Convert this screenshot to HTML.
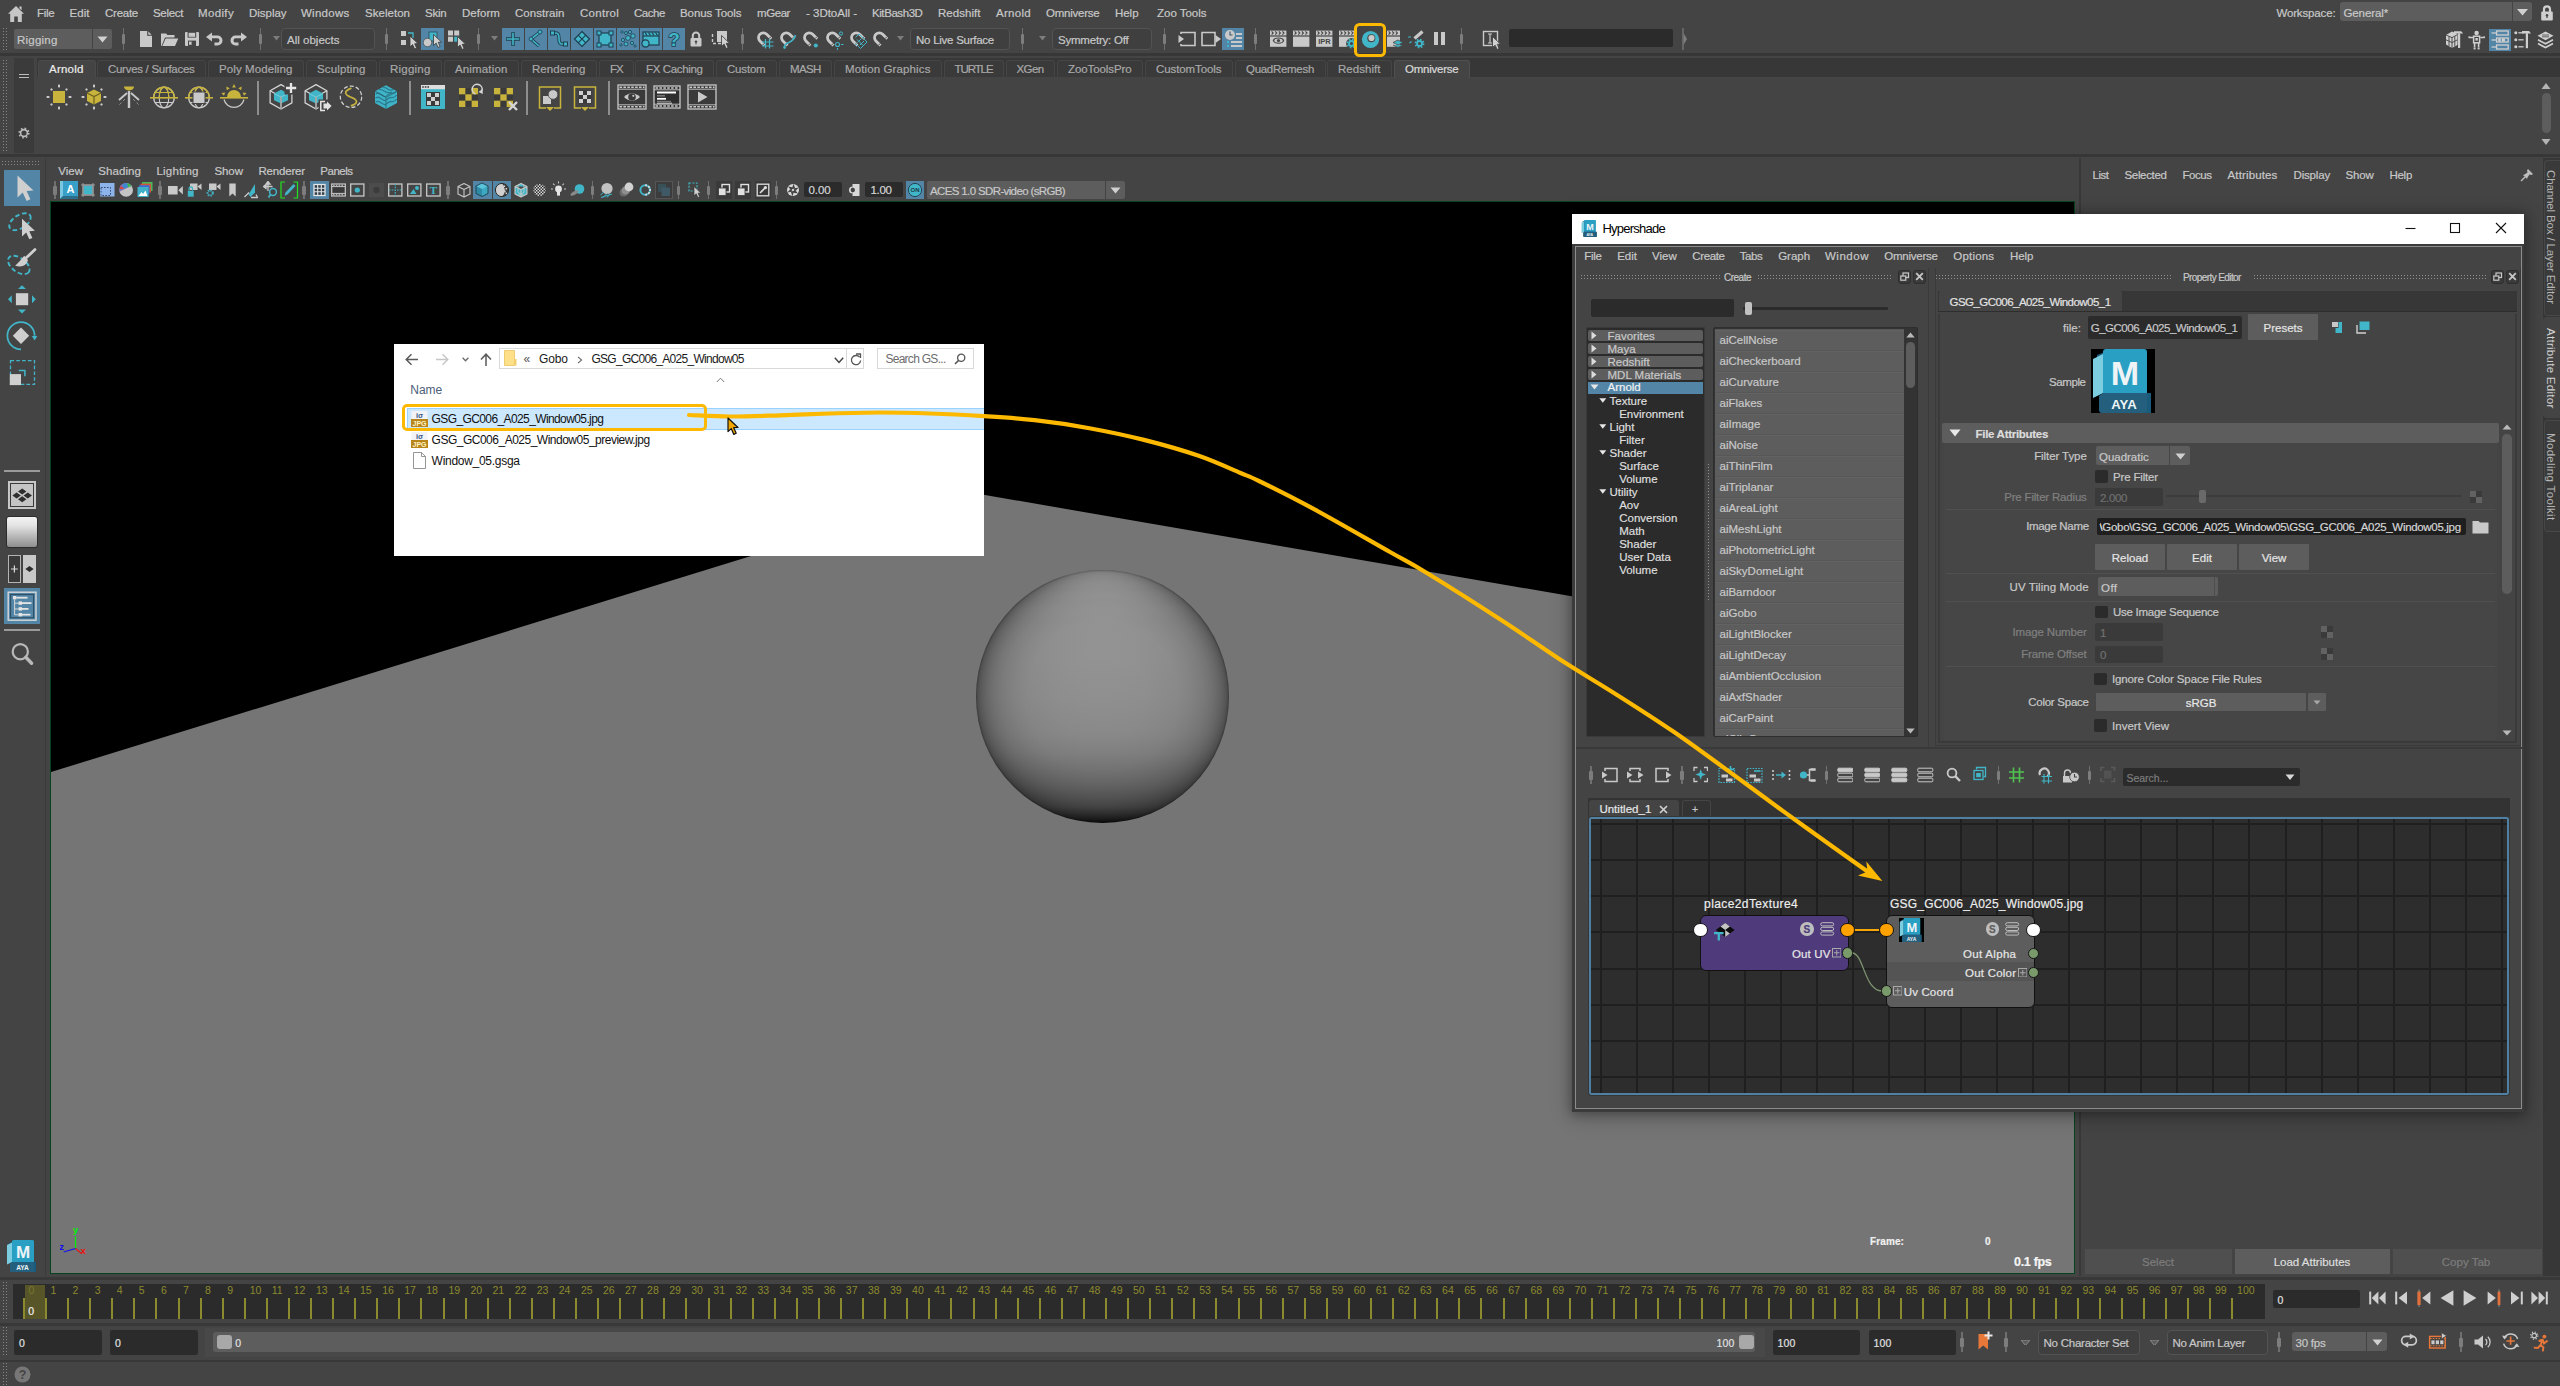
<!DOCTYPE html>
<html><head><meta charset="utf-8"><title>Maya</title>
<style>
html,body{margin:0;padding:0;}
body{width:2560px;height:1386px;overflow:hidden;background:#444444;position:relative;font-family:"Liberation Sans",sans-serif;}
div,svg{position:absolute;box-sizing:border-box;}
.t{white-space:nowrap;-webkit-text-stroke:0.2px currentColor;}
</style></head><body>
<svg style="left:7px;top:5.2px;" width="18" height="18" viewBox="0 0 18 18"><path d="M9 1 L1 8.8 H3.2 V17 H7.2 V11.5 H10.8 V17 H14.8 V8.8 H17 Z M12.4 1.6 h2.2 v3.6 l-2.2 -2z" fill="#c6c6c6"/></svg>
<div class="t" style="left:37px;top:3px;height:20px;line-height:20px;font-size:11.5px;color:#c8c8c8;letter-spacing:-0.258px;">File</div>
<div class="t" style="left:69.5px;top:3px;height:20px;line-height:20px;font-size:11.5px;color:#c8c8c8;letter-spacing:0.046px;">Edit</div>
<div class="t" style="left:105px;top:3px;height:20px;line-height:20px;font-size:11.5px;color:#c8c8c8;letter-spacing:-0.253px;">Create</div>
<div class="t" style="left:153px;top:3px;height:20px;line-height:20px;font-size:11.5px;color:#c8c8c8;letter-spacing:-0.327px;">Select</div>
<div class="t" style="left:198px;top:3px;height:20px;line-height:20px;font-size:11.5px;color:#c8c8c8;letter-spacing:0.355px;">Modify</div>
<div class="t" style="left:249px;top:3px;height:20px;line-height:20px;font-size:11.5px;color:#c8c8c8;letter-spacing:-0.029px;">Display</div>
<div class="t" style="left:301px;top:3px;height:20px;line-height:20px;font-size:11.5px;color:#c8c8c8;letter-spacing:0.264px;">Windows</div>
<div class="t" style="left:365px;top:3px;height:20px;line-height:20px;font-size:11.5px;color:#c8c8c8;letter-spacing:0.031px;">Skeleton</div>
<div class="t" style="left:425px;top:3px;height:20px;line-height:20px;font-size:11.5px;color:#c8c8c8;letter-spacing:-0.218px;">Skin</div>
<div class="t" style="left:462px;top:3px;height:20px;line-height:20px;font-size:11.5px;color:#c8c8c8;letter-spacing:0.050px;">Deform</div>
<div class="t" style="left:515px;top:3px;height:20px;line-height:20px;font-size:11.5px;color:#c8c8c8;letter-spacing:0.031px;">Constrain</div>
<div class="t" style="left:580px;top:3px;height:20px;line-height:20px;font-size:11.5px;color:#c8c8c8;letter-spacing:0.275px;">Control</div>
<div class="t" style="left:634px;top:3px;height:20px;line-height:20px;font-size:11.5px;color:#c8c8c8;letter-spacing:-0.448px;">Cache</div>
<div class="t" style="left:680px;top:3px;height:20px;line-height:20px;font-size:11.5px;color:#c8c8c8;letter-spacing:-0.086px;">Bonus Tools</div>
<div class="t" style="left:757px;top:3px;height:20px;line-height:20px;font-size:11.5px;color:#c8c8c8;letter-spacing:-0.429px;">mGear</div>
<div class="t" style="left:806px;top:3px;height:20px;line-height:20px;font-size:11.5px;color:#c8c8c8;letter-spacing:-0.011px;">- 3DtoAll -</div>
<div class="t" style="left:872px;top:3px;height:20px;line-height:20px;font-size:11.5px;color:#c8c8c8;letter-spacing:-0.426px;">KitBash3D</div>
<div class="t" style="left:938px;top:3px;height:20px;line-height:20px;font-size:11.5px;color:#c8c8c8;letter-spacing:0.039px;">Redshift</div>
<div class="t" style="left:996px;top:3px;height:20px;line-height:20px;font-size:11.5px;color:#c8c8c8;letter-spacing:0.293px;">Arnold</div>
<div class="t" style="left:1046px;top:3px;height:20px;line-height:20px;font-size:11.5px;color:#c8c8c8;letter-spacing:-0.233px;">Omniverse</div>
<div class="t" style="left:1115px;top:3px;height:20px;line-height:20px;font-size:11.5px;color:#c8c8c8;letter-spacing:-0.038px;">Help</div>
<div class="t" style="left:1157px;top:3px;height:20px;line-height:20px;font-size:11.5px;color:#c8c8c8;letter-spacing:-0.017px;">Zoo Tools</div>
<div class="t" style="left:2276.4px;top:2.5px;height:20px;line-height:20px;font-size:11.5px;color:#c8c8c8;letter-spacing:-0.140px;">Workspace:</div>
<div style="left:2340px;top:2px;width:171.5px;height:19px;background:#5d5d5d;border-radius:3px 0 0 3px;"></div>
<div style="left:2512.5px;top:2px;width:19.5px;height:19px;background:#5d5d5d;border-radius:0 3px 3px 0;"></div>
<div class="t" style="left:2343.5px;top:2.5px;height:20px;line-height:20px;font-size:11.5px;color:#c8c8c8;letter-spacing:-0.111px;">General*</div>
<svg style="left:2516px;top:7.5px;" width="13" height="9" viewBox="0 0 13 9"><path d="M1 1 H12 L6.5 7.5Z" fill="#d0d0d0"/></svg>
<svg style="left:2539.5px;top:3.5px;" width="14" height="18" viewBox="0 0 14 18"><path d="M4 8 V5.3 a3 3 0 0 1 6 0 V8" fill="none" stroke="#cfcfcf" stroke-width="2.2"/><rect x="1.2" y="7.6" width="11.6" height="9" rx="1" fill="#cfcfcf"/><circle cx="7" cy="11.2" r="1.2" fill="#444"/><rect x="6.4" y="11.4" width="1.2" height="2.6" fill="#444"/></svg>
<div style="left:3px;top:28px;width:5px;height:23px;background-image:linear-gradient(transparent 1px,#444 1px),linear-gradient(90deg,#868686 1px,transparent 1px);background-size:3px 3px;"></div>
<div style="left:14px;top:29px;width:78px;height:20px;background:#5d5d5d;border-radius:2px 0 0 2px;"></div>
<div style="left:93px;top:29px;width:19px;height:20px;background:#5d5d5d;border-radius:0 2px 2px 0;"></div>
<div class="t" style="left:17px;top:30px;height:20px;line-height:20px;font-size:11.5px;color:#c8c8c8;letter-spacing:0.215px;">Rigging</div>
<svg style="left:97px;top:36px;" width="11" height="7" viewBox="0 0 11 7"><path d="M0.5 0.5 H10.5 L5.5 6.5Z" fill="#d0d0d0"/></svg>
<div style="left:122.5px;top:28px;width:1.5px;height:22px;background:#6f6f6f;"></div>
<div style="left:121.5px;top:34px;width:3.5px;height:10px;background:#7d7d7d;border-radius:1px;"></div>
<svg style="left:139px;top:30px;" width="14" height="18" viewBox="0 0 14 18"><path d="M1 1 H8.5 L13 5.5 V17 H1Z" fill="#c9c9c9"/><path d="M8.5 1 V5.5 H13" fill="#444" stroke="#444" stroke-width="0.6"/><path d="M9.3 1.6 L12.4 4.7 H9.3Z" fill="#c9c9c9"/></svg>
<svg style="left:160px;top:31px;" width="19" height="16" viewBox="0 0 19 16"><path d="M1 15 V2.5 H6 L7.5 4 H14.5 V6.5 H5 L1.5 15Z" fill="#c9c9c9"/><path d="M5.6 7.5 H18.3 L15 15 H2.3Z" fill="#c9c9c9"/></svg>
<svg style="left:184px;top:31px;" width="16" height="16" viewBox="0 0 16 16"><path d="M1 2 a1 1 0 0 1 1-1 H14 a1 1 0 0 1 1 1 V14 a1 1 0 0 1 -1 1 H2 a1 1 0 0 1 -1-1Z" fill="#c9c9c9"/><rect x="3.6" y="1" width="8.6" height="5.6" fill="#444"/><rect x="4.6" y="1.8" width="6.6" height="4" fill="#c9c9c9"/><rect x="4" y="9.6" width="8" height="5.4" fill="#444"/><rect x="5" y="10.6" width="2.6" height="3.2" fill="#c9c9c9"/></svg>
<svg style="left:205px;top:32px;" width="19" height="15" viewBox="0 0 19 15"><path d="M1 5 L7 0.5 V3.5 H12.5 a5 5 0 0 1 0 10 H9.5 V10.6 H12.3 a2.2 2.2 0 0 0 0-4.4 H7 V9.5Z" fill="#c9c9c9"/></svg>
<svg style="left:229px;top:32px;" width="19" height="15" viewBox="0 0 19 15"><g transform="translate(19,0) scale(-1,1)"><path d="M1 5 L7 0.5 V3.5 H12.5 a5 5 0 0 1 0 10 H9.5 V10.6 H12.3 a2.2 2.2 0 0 0 0-4.4 H7 V9.5Z" fill="#c9c9c9"/></g></svg>
<div style="left:259.5px;top:28px;width:1.5px;height:22px;background:#6f6f6f;"></div>
<div style="left:258.5px;top:34px;width:3.5px;height:10px;background:#7d7d7d;border-radius:1px;"></div>
<svg style="left:273px;top:36px;" width="7" height="4.5" viewBox="0 0 7 4.5"><path d="M0 0 H7 L3.5 4.5Z" fill="#7c7c7c"/></svg>
<div style="left:281px;top:28px;width:94px;height:22px;background:#3f3f3f;border-radius:4px;border:1px solid #535353;"></div>
<div class="t" style="left:287px;top:30px;height:20px;line-height:20px;font-size:11.5px;color:#c8c8c8;letter-spacing:0.008px;">All objects</div>
<div style="left:385.5px;top:28px;width:1.5px;height:22px;background:#6f6f6f;"></div>
<div style="left:384.5px;top:34px;width:3.5px;height:10px;background:#7d7d7d;border-radius:1px;"></div>
<svg style="left:399px;top:29px;" width="22" height="22" viewBox="0 0 22 22"><rect x="2" y="2" width="5" height="5" fill="#c9c9c9"/><rect x="2" y="11" width="5" height="5" fill="#c9c9c9"/><path d="M9 4 H14 V9" fill="none" stroke="#41b6c8" stroke-width="1.3"/><path transform="translate(11,7) scale(1)" d="M0 0 L0 11 L2.6 8.6 L4.6 13 L6.6 12 L4.7 7.8 L8 7.6Z" fill="#d0d0d0" stroke="#3a3a3a" stroke-width="0.8"/></svg>
<div style="left:421px;top:28px;width:23px;height:22px;background:#5285a6;"></div>
<svg style="left:421px;top:28px;" width="23" height="22" viewBox="0 0 23 22"><rect x="8" y="4" width="8" height="9" fill="#41b6c8" stroke="#2b4c5e" stroke-width="0.8"/><circle cx="6.5" cy="14.5" r="4.2" fill="#c9c9c9" stroke="#3a3a3a" stroke-width="0.6"/><path transform="translate(12.5,6.5) scale(1)" d="M0 0 L0 11 L2.6 8.6 L4.6 13 L6.6 12 L4.7 7.8 L8 7.6Z" fill="#d0d0d0" stroke="#3a3a3a" stroke-width="0.8"/></svg>
<svg style="left:446px;top:29px;" width="22" height="22" viewBox="0 0 22 22"><rect x="2" y="1.5" width="5" height="5" fill="#c9c9c9"/><rect x="8.2" y="1.5" width="5" height="5" fill="#c9c9c9"/><rect x="2" y="7.7" width="5" height="5" fill="#c9c9c9"/><rect x="8.2" y="7.7" width="5" height="5" fill="#41b6c8"/><path transform="translate(11.5,7.5) scale(1)" d="M0 0 L0 11 L2.6 8.6 L4.6 13 L6.6 12 L4.7 7.8 L8 7.6Z" fill="#d0d0d0" stroke="#3a3a3a" stroke-width="0.8"/></svg>
<div style="left:477.5px;top:28px;width:1.5px;height:22px;background:#6f6f6f;"></div>
<div style="left:476.5px;top:34px;width:3.5px;height:10px;background:#7d7d7d;border-radius:1px;"></div>
<svg style="left:491px;top:36px;" width="7" height="4.5" viewBox="0 0 7 4.5"><path d="M0 0 H7 L3.5 4.5Z" fill="#7c7c7c"/></svg>
<div style="left:502px;top:28px;width:22px;height:22px;background:#5285a6;"></div>
<div style="left:525px;top:28px;width:22px;height:22px;background:#5285a6;"></div>
<div style="left:548px;top:28px;width:22px;height:22px;background:#5285a6;"></div>
<div style="left:571px;top:28px;width:22px;height:22px;background:#5285a6;"></div>
<div style="left:594px;top:28px;width:22px;height:22px;background:#5285a6;"></div>
<div style="left:617px;top:28px;width:22px;height:22px;background:#5285a6;"></div>
<div style="left:640px;top:28px;width:22px;height:22px;background:#5285a6;"></div>
<div style="left:663px;top:28px;width:22px;height:22px;background:#5285a6;"></div>
<svg style="left:502px;top:28px;" width="22" height="22" viewBox="0 0 22 22"><path d="M11 4 V18 M4 11 H18" stroke="#1f3f50" stroke-width="3.4"/><path d="M11 4.7 V17.3 M4.7 11 H17.3" stroke="#41b6c8" stroke-width="1.6"/></svg>
<svg style="left:525px;top:28px;" width="22" height="22" viewBox="0 0 22 22"><path d="M15 4 L6 11 L14 18" fill="none" stroke="#1f3f50" stroke-width="3.2" stroke-linejoin="round"/><path d="M15 4 L6 11 L14 18" fill="none" stroke="#41b6c8" stroke-width="1.6"/><circle cx="15" cy="4" r="2" fill="#41b6c8" stroke="#1f3f50" stroke-width="0.8"/><circle cx="6" cy="11" r="2" fill="#41b6c8" stroke="#1f3f50" stroke-width="0.8"/></svg>
<svg style="left:548px;top:28px;" width="22" height="22" viewBox="0 0 22 22"><path d="M4 5 H8 C14 5 8 16 14 16 H18" fill="none" stroke="#1f3f50" stroke-width="3.4"/><path d="M4 5 H8 C14 5 8 16 14 16 H18" fill="none" stroke="#41b6c8" stroke-width="1.6"/><rect x="2.5" y="3" width="4" height="4" fill="#41b6c8" stroke="#1f3f50"/><rect x="15.5" y="14" width="4" height="4" fill="#41b6c8" stroke="#1f3f50"/></svg>
<svg style="left:571px;top:28px;" width="22" height="22" viewBox="0 0 22 22"><path d="M11 3.5 L18.5 11 L11 18.5 L3.5 11Z" fill="#41b6c8" stroke="#1f3f50" stroke-width="1.2"/><path d="M7.2 7.2 L14.8 14.8 M14.8 7.2 L7.2 14.8" stroke="#1f3f50" stroke-width="1.2"/></svg>
<svg style="left:594px;top:28px;" width="22" height="22" viewBox="0 0 22 22"><rect x="5" y="5" width="12" height="12" fill="#41b6c8" stroke="#1f3f50" stroke-width="1.2"/><rect x="3" y="3" width="4" height="4" fill="#41b6c8" stroke="#1f3f50" stroke-width="1"/><rect x="15" y="3" width="4" height="4" fill="#41b6c8" stroke="#1f3f50" stroke-width="1"/><rect x="3" y="15" width="4" height="4" fill="#41b6c8" stroke="#1f3f50" stroke-width="1"/><rect x="15" y="15" width="4" height="4" fill="#41b6c8" stroke="#1f3f50" stroke-width="1"/></svg>
<svg style="left:617px;top:28px;" width="22" height="22" viewBox="0 0 22 22"><circle cx="5" cy="4" r="1.2" fill="#41b6c8" stroke="#1f3f50" stroke-width="0.8"/><circle cx="9" cy="5" r="1.5" fill="#41b6c8" stroke="#1f3f50" stroke-width="0.8"/><circle cx="13" cy="4" r="1.6" fill="#41b6c8" stroke="#1f3f50" stroke-width="0.8"/><circle cx="16" cy="8" r="2.2" fill="#41b6c8" stroke="#1f3f50" stroke-width="0.8"/><circle cx="11" cy="10" r="2.4" fill="#41b6c8" stroke="#1f3f50" stroke-width="0.8"/><circle cx="6" cy="12" r="1.6" fill="#41b6c8" stroke="#1f3f50" stroke-width="0.8"/><circle cx="9" cy="16" r="2" fill="#41b6c8" stroke="#1f3f50" stroke-width="0.8"/><circle cx="15" cy="15" r="1.6" fill="#41b6c8" stroke="#1f3f50" stroke-width="0.8"/><circle cx="18" cy="18" r="1.1" fill="#41b6c8" stroke="#1f3f50" stroke-width="0.8"/><circle cx="4" cy="17" r="1.1" fill="#41b6c8" stroke="#1f3f50" stroke-width="0.8"/></svg>
<svg style="left:640px;top:28px;" width="22" height="22" viewBox="0 0 22 22"><rect x="3" y="4" width="16" height="13" fill="#41b6c8" stroke="#1f3f50" stroke-width="1.2"/><path d="M3 8 H19" stroke="#1f3f50" stroke-width="1.2"/><path d="M5 4.5 l2 3 M8.5 4.5 l2 3 M12 4.5 l2 3 M15.5 4.5 l2 3" stroke="#1f3f50" stroke-width="1.2"/><circle cx="5.5" cy="15.5" r="3.6" fill="#41b6c8" stroke="#1f3f50" stroke-width="1.2"/></svg>
<div class="t" style="left:674px;top:29.5px;height:20px;line-height:20px;font-size:19px;color:#41b6c8;font-weight:bold;transform:translateX(-50%);-webkit-text-stroke:1.6px #1f3f50;paint-order:stroke fill;">?</div>
<svg style="left:689px;top:30px;" width="14" height="18" viewBox="0 0 14 18"><path d="M3.8 8 V5.8 a3.2 3.2 0 0 1 6.4 0 V8" fill="none" stroke="#c9c9c9" stroke-width="2"/><rect x="1.5" y="8" width="11" height="8.5" rx="1" fill="#c9c9c9"/><circle cx="7" cy="11.6" r="1.2" fill="#444"/><rect x="6.5" y="12" width="1" height="2.4" fill="#444"/></svg>
<svg style="left:711px;top:29px;" width="22" height="22" viewBox="0 0 22 22"><rect x="6" y="2" width="10" height="11" fill="#c9c9c9"/><path d="M1.5 5 V14.5 H10" fill="none" stroke="#c9c9c9" stroke-width="1.4" stroke-dasharray="3 2"/><path transform="translate(10.5,6.5) scale(1)" d="M0 0 L0 11 L2.6 8.6 L4.6 13 L6.6 12 L4.7 7.8 L8 7.6Z" fill="#d0d0d0" stroke="#3a3a3a" stroke-width="0.8"/></svg>
<div style="left:741.5px;top:28px;width:1.5px;height:22px;background:#6f6f6f;"></div>
<div style="left:740.5px;top:34px;width:3.5px;height:10px;background:#7d7d7d;border-radius:1px;"></div>
<svg style="left:755px;top:29px;" width="22" height="22" viewBox="0 0 22 22"><g transform="translate(8.3,8.6) rotate(-45)"><path d="M-4.8 6.5 V0 A4.8 4.8 0 0 1 4.8 0 V6.5" fill="none" stroke="#c9c9c9" stroke-width="2.8"/><path d="M-6.3 4.8 H-3.3 M3.3 4.8 H6.3" stroke="#444" stroke-width="0.9"/></g><path d="M10.5 10 V19.5 M14.5 10 V19.5 M7 13 H18.5 M7 17 H18.5" stroke="#41b6c8" stroke-width="1.2"/></svg>
<svg style="left:778px;top:29px;" width="22" height="22" viewBox="0 0 22 22"><g transform="translate(8.3,8.6) rotate(-45)"><path d="M-4.8 6.5 V0 A4.8 4.8 0 0 1 4.8 0 V6.5" fill="none" stroke="#c9c9c9" stroke-width="2.8"/><path d="M-6.3 4.8 H-3.3 M3.3 4.8 H6.3" stroke="#444" stroke-width="0.9"/></g><path d="M6.5 19 C5.5 12 15 16 17.5 6" fill="none" stroke="#41b6c8" stroke-width="1.6"/><circle cx="6.6" cy="18.6" r="1.3" fill="#41b6c8"/></svg>
<svg style="left:801px;top:29px;" width="22" height="22" viewBox="0 0 22 22"><g transform="translate(8.3,8.6) rotate(-45)"><path d="M-4.8 6.5 V0 A4.8 4.8 0 0 1 4.8 0 V6.5" fill="none" stroke="#c9c9c9" stroke-width="2.8"/><path d="M-6.3 4.8 H-3.3 M3.3 4.8 H6.3" stroke="#444" stroke-width="0.9"/></g><circle cx="14.8" cy="16.5" r="2.1" fill="#41b6c8"/></svg>
<svg style="left:824px;top:29px;" width="22" height="22" viewBox="0 0 22 22"><g transform="translate(8.3,8.6) rotate(-45)"><path d="M-4.8 6.5 V0 A4.8 4.8 0 0 1 4.8 0 V6.5" fill="none" stroke="#c9c9c9" stroke-width="2.8"/><path d="M-6.3 4.8 H-3.3 M3.3 4.8 H6.3" stroke="#444" stroke-width="0.9"/></g><circle cx="13.5" cy="15.5" r="2" fill="none" stroke="#41b6c8" stroke-width="1.1"/><circle cx="17" cy="4.5" r="1.6" fill="none" stroke="#41b6c8" stroke-width="1"/><path d="M13.5 19 V21 M17 15.5 H19.5" stroke="#41b6c8" stroke-width="1"/></svg>
<svg style="left:848px;top:29px;" width="22" height="22" viewBox="0 0 22 22"><g transform="translate(8.3,8.6) rotate(-45)"><path d="M-4.8 6.5 V0 A4.8 4.8 0 0 1 4.8 0 V6.5" fill="none" stroke="#c9c9c9" stroke-width="2.8"/><path d="M-6.3 4.8 H-3.3 M3.3 4.8 H6.3" stroke="#444" stroke-width="0.9"/></g><path d="M7.5 8.5 L11 5 L19 13 L12.5 19.5 L7 14" fill="none" stroke="#41b6c8" stroke-width="1"/><path d="M9 10.5 L15 16.5 M13.5 9.5 L9.5 13.5 M16 12 L12 16" stroke="#41b6c8" stroke-width="1"/></svg>
<svg style="left:871px;top:29px;" width="22" height="22" viewBox="0 0 22 22"><g transform="translate(8.3,8.6) rotate(-45)"><path d="M-4.8 6.5 V0 A4.8 4.8 0 0 1 4.8 0 V6.5" fill="none" stroke="#c9c9c9" stroke-width="2.8"/><path d="M-6.3 4.8 H-3.3 M3.3 4.8 H6.3" stroke="#444" stroke-width="0.9"/></g></svg>
<svg style="left:897px;top:36px;" width="7" height="4.5" viewBox="0 0 7 4.5"><path d="M0 0 H7 L3.5 4.5Z" fill="#7c7c7c"/></svg>
<div style="left:910px;top:28px;width:100px;height:22px;background:#3f3f3f;border-radius:4px;border:1px solid #535353;"></div>
<div class="t" style="left:916px;top:30px;height:20px;line-height:20px;font-size:11.5px;color:#c8c8c8;letter-spacing:-0.255px;">No Live Surface</div>
<div style="left:1021.5px;top:28px;width:1.5px;height:22px;background:#6f6f6f;"></div>
<div style="left:1020.5px;top:34px;width:3.5px;height:10px;background:#7d7d7d;border-radius:1px;"></div>
<svg style="left:1039px;top:36px;" width="7" height="4.5" viewBox="0 0 7 4.5"><path d="M0 0 H7 L3.5 4.5Z" fill="#7c7c7c"/></svg>
<div style="left:1052px;top:28px;width:100px;height:22px;background:#3f3f3f;border-radius:4px;border:1px solid #535353;"></div>
<div class="t" style="left:1058px;top:30px;height:20px;line-height:20px;font-size:11.5px;color:#c8c8c8;letter-spacing:-0.213px;">Symmetry: Off</div>
<div style="left:1163.5px;top:28px;width:1.5px;height:22px;background:#6f6f6f;"></div>
<div style="left:1162.5px;top:34px;width:3.5px;height:10px;background:#7d7d7d;border-radius:1px;"></div>
<svg style="left:1177px;top:29px;" width="22" height="22" viewBox="0 0 22 22"><path d="M4 5 V3.5 H18 V16.5 H4 V15" fill="none" stroke="#c9c9c9" stroke-width="1.6"/><path d="M1.5 6 L7 10 L1.5 14Z" fill="#c9c9c9"/></svg>
<svg style="left:1200px;top:29px;" width="22" height="22" viewBox="0 0 22 22"><path d="M2 3.5 H15 V16.5 H2Z" fill="none" stroke="#c9c9c9" stroke-width="1.6"/><path d="M15.5 6 L21 10 L15.5 14Z" fill="#c9c9c9"/></svg>
<div style="left:1222px;top:28px;width:22px;height:22px;background:#5285a6;"></div>
<svg style="left:1222px;top:28px;" width="22" height="22" viewBox="0 0 22 22"><circle cx="8" cy="7" r="5" fill="#c9c9c9"/><path d="M8 3.5 V7 H10.5" fill="none" stroke="#3a5a6c" stroke-width="1.1"/><path d="M14 6 H20 M14 10 H20 M9 14 H20 M9 18 H20" stroke="#c9c9c9" stroke-width="1.8"/><path d="M5 14 H7 M5 18 H7" stroke="#41b6c8" stroke-width="1.8"/></svg>
<div style="left:1254.5px;top:28px;width:1.5px;height:22px;background:#6f6f6f;"></div>
<div style="left:1253.5px;top:34px;width:3.5px;height:10px;background:#7d7d7d;border-radius:1px;"></div>
<svg style="left:1269px;top:29px;" width="24" height="22" viewBox="0 0 24 22"><rect x="1" y="1.6" width="16.4" height="4.8" fill="#c9c9c9"/><path d="M2.6 2.4 l1.6 1.6 l-1.6 1.6" fill="none" stroke="#444" stroke-width="1.1"/><path d="M6.2 2.4 l1.6 1.6 l-1.6 1.6" fill="none" stroke="#444" stroke-width="1.1"/><path d="M9.8 2.4 l1.6 1.6 l-1.6 1.6" fill="none" stroke="#444" stroke-width="1.1"/><path d="M13.4 2.4 l1.6 1.6 l-1.6 1.6" fill="none" stroke="#444" stroke-width="1.1"/><rect x="1" y="7.6" width="16.4" height="10.2" fill="#c9c9c9"/><ellipse cx="9.5" cy="11.6" rx="5.6" ry="3.2" fill="#444"/><ellipse cx="9.5" cy="11.6" rx="4.2" ry="2.2" fill="#c9c9c9"/><circle cx="9.5" cy="11.6" r="1.6" fill="#444"/></svg>
<svg style="left:1292px;top:29px;" width="24" height="22" viewBox="0 0 24 22"><rect x="1" y="1.6" width="16.4" height="4.8" fill="#c9c9c9"/><path d="M2.6 2.4 l1.6 1.6 l-1.6 1.6" fill="none" stroke="#444" stroke-width="1.1"/><path d="M6.2 2.4 l1.6 1.6 l-1.6 1.6" fill="none" stroke="#444" stroke-width="1.1"/><path d="M9.8 2.4 l1.6 1.6 l-1.6 1.6" fill="none" stroke="#444" stroke-width="1.1"/><path d="M13.4 2.4 l1.6 1.6 l-1.6 1.6" fill="none" stroke="#444" stroke-width="1.1"/><rect x="1" y="7.6" width="16.4" height="10.2" fill="#c9c9c9"/></svg>
<svg style="left:1315px;top:29px;" width="24" height="22" viewBox="0 0 24 22"><rect x="1" y="1.6" width="16.4" height="4.8" fill="#c9c9c9"/><path d="M2.6 2.4 l1.6 1.6 l-1.6 1.6" fill="none" stroke="#444" stroke-width="1.1"/><path d="M6.2 2.4 l1.6 1.6 l-1.6 1.6" fill="none" stroke="#444" stroke-width="1.1"/><path d="M9.8 2.4 l1.6 1.6 l-1.6 1.6" fill="none" stroke="#444" stroke-width="1.1"/><path d="M13.4 2.4 l1.6 1.6 l-1.6 1.6" fill="none" stroke="#444" stroke-width="1.1"/><rect x="1" y="7.6" width="16.4" height="10.2" fill="#c9c9c9"/><text x="9.5" y="15" font-size="7.5" font-weight="bold" text-anchor="middle" fill="#444" font-family="Liberation Sans">IPR</text></svg>
<svg style="left:1338px;top:29px;" width="24" height="22" viewBox="0 0 24 22"><rect x="1" y="1.6" width="16.4" height="4.8" fill="#c9c9c9"/><path d="M2.6 2.4 l1.6 1.6 l-1.6 1.6" fill="none" stroke="#444" stroke-width="1.1"/><path d="M6.2 2.4 l1.6 1.6 l-1.6 1.6" fill="none" stroke="#444" stroke-width="1.1"/><path d="M9.8 2.4 l1.6 1.6 l-1.6 1.6" fill="none" stroke="#444" stroke-width="1.1"/><path d="M13.4 2.4 l1.6 1.6 l-1.6 1.6" fill="none" stroke="#444" stroke-width="1.1"/><rect x="1" y="7.6" width="16.4" height="10.2" fill="#c9c9c9"/><circle cx="13.5" cy="14.5" r="5.4" fill="#444"/><circle cx="13.5" cy="14.5" r="2.5" fill="none" stroke="#41b6c8" stroke-width="1.9"/><circle cx="13.5" cy="14.5" r="4.1" fill="none" stroke="#41b6c8" stroke-width="1.6" stroke-dasharray="1.61 1.61"/></svg>
<svg style="left:1360px;top:29px;" width="21" height="21" viewBox="0 0 21 21"><circle cx="10.5" cy="10.5" r="8.6" fill="#41b6c8"/><circle cx="11.3" cy="9.2" r="4" fill="#444"/><circle cx="11.5" cy="9" r="3.1" fill="#c9c9c9"/></svg>
<svg style="left:1386px;top:29px;" width="24" height="22" viewBox="0 0 24 22"><rect x="1" y="1.6" width="13" height="4.8" fill="#c9c9c9"/><path d="M2.6 2.4 l1.6 1.6 l-1.6 1.6" fill="none" stroke="#444" stroke-width="1.1"/><path d="M6.2 2.4 l1.6 1.6 l-1.6 1.6" fill="none" stroke="#444" stroke-width="1.1"/><path d="M9.8 2.4 l1.6 1.6 l-1.6 1.6" fill="none" stroke="#444" stroke-width="1.1"/><rect x="1" y="7.6" width="13" height="10.2" fill="#c9c9c9"/><path d="M7 13.5 L12 11 L17 13.5 L12 16Z M7 16 L12 18.5 L17 16" fill="#41b6c8" stroke="#444" stroke-width="0.8"/></svg>
<svg style="left:1406px;top:29px;" width="22" height="22" viewBox="0 0 22 22"><path d="M8.5 9.5 L16.5 2.5" stroke="#c9c9c9" stroke-width="3.2"/><circle cx="13.5" cy="14.5" r="5.4" fill="#444"/><circle cx="13.5" cy="14.5" r="2.5" fill="none" stroke="#41b6c8" stroke-width="1.9"/><circle cx="13.5" cy="14.5" r="4.1" fill="none" stroke="#41b6c8" stroke-width="1.6" stroke-dasharray="1.61 1.61"/><path d="M2 8 H5 M3.5 14 L5.5 12.5" stroke="#41b6c8" stroke-width="1.2"/></svg>
<div style="left:1434px;top:32px;width:3.6px;height:13px;background:#c9c9c9;"></div>
<div style="left:1441px;top:32px;width:3.6px;height:13px;background:#c9c9c9;"></div>
<div style="left:1460.5px;top:28px;width:1.5px;height:22px;background:#6f6f6f;"></div>
<div style="left:1459.5px;top:34px;width:3.5px;height:10px;background:#7d7d7d;border-radius:1px;"></div>
<svg style="left:1482px;top:29px;" width="22" height="22" viewBox="0 0 22 22"><rect x="1.5" y="2.5" width="14" height="14" fill="none" stroke="#c9c9c9" stroke-width="1.4"/><path d="M6 5 H10 M8 5 V14 M6 14 H10" stroke="#c9c9c9" stroke-width="1.2"/><path transform="translate(10.5,7.5) scale(1)" d="M0 0 L0 11 L2.6 8.6 L4.6 13 L6.6 12 L4.7 7.8 L8 7.6Z" fill="#d0d0d0" stroke="#3a3a3a" stroke-width="0.8"/></svg>
<div style="left:1509px;top:29px;width:164px;height:18px;background:#2b2b2b;border-radius:2px;"></div>
<svg style="left:1682px;top:28px;" width="6" height="22" viewBox="0 0 6 22"><path d="M1 0 V22" stroke="#7d7d7d" stroke-width="1.2"/><path d="M1.5 5 L5 11 L1.5 17Z" fill="#7d7d7d"/></svg>
<svg style="left:2444px;top:30px;" width="20" height="19" viewBox="0 0 20 19"><path d="M2 5 L8 1.5 L13.5 4 V15 L8 18 L2 14.5Z" fill="#cfcfcf"/><path d="M8 7 V18 M2 5 L8 7.6 L13.5 4.6 M2 9.8 L8 12.6 L13.5 9.8 M5 6.4 V16.2 M10.8 6.2 V16.4" stroke="#444" stroke-width="0.9" fill="none"/><path d="M10 1.2 H17.2 L19.2 3.6 H10Z" fill="#cfcfcf"/><rect x="14" y="3.4" width="2.2" height="14.6" fill="#cfcfcf"/></svg>
<svg style="left:2468px;top:30px;" width="18" height="20" viewBox="0 0 18 20"><circle cx="8.6" cy="3" r="2.2" fill="#cfcfcf"/><rect x="5.6" y="6.2" width="6" height="6.6" fill="none" stroke="#cfcfcf" stroke-width="1.5"/><rect x="7.4" y="8" width="2.4" height="2.6" fill="#cfcfcf"/><path d="M2 7.4 H5 M12.4 7.4 H15.4" stroke="#cfcfcf" stroke-width="1.5"/><rect x="0.4" y="6.4" width="1.8" height="1.8" fill="#cfcfcf"/><rect x="15.2" y="6.4" width="1.8" height="1.8" fill="#cfcfcf"/><path d="M6.6 13 V17 M10.6 13 V17" stroke="#cfcfcf" stroke-width="1.6"/><rect x="5.6" y="17.4" width="2" height="2" fill="#cfcfcf"/><rect x="9.6" y="17.4" width="2" height="2" fill="#cfcfcf"/></svg>
<div style="left:2489px;top:29px;width:22.2px;height:22px;background:#5285a6;"></div>
<svg style="left:2489px;top:29px;" width="22.2" height="22" viewBox="0 0 22.2 22"><path d="M2.5 4 H7" stroke="#cfcfcf" stroke-width="1.3"/><rect x="7.6" y="2" width="11.6" height="4" fill="none" stroke="#cfcfcf" stroke-width="1.3"/><path d="M2.5 11 H7" stroke="#cfcfcf" stroke-width="1.3"/><rect x="7.6" y="9" width="11.6" height="4" fill="none" stroke="#cfcfcf" stroke-width="1.3"/><path d="M2.5 18 H7" stroke="#cfcfcf" stroke-width="1.3"/><rect x="7.6" y="16" width="11.6" height="4" fill="none" stroke="#cfcfcf" stroke-width="1.3"/><rect x="9.2" y="9.6" width="2.6" height="3" fill="#cfcfcf"/><circle cx="14.4" cy="11" r="1.8" fill="#cfcfcf"/></svg>
<svg style="left:2514px;top:30px;" width="18" height="20" viewBox="0 0 18 20"><circle cx="1.8" cy="2.8" r="1.5" fill="#cfcfcf"/><path d="M4.4 2.8 H9.6" stroke="#cfcfcf" stroke-width="1.3"/><circle cx="1.8" cy="9.8" r="1.5" fill="#cfcfcf"/><path d="M4.4 9.8 H9.6" stroke="#cfcfcf" stroke-width="1.3"/><circle cx="1.8" cy="16.8" r="1.5" fill="#cfcfcf"/><path d="M4.4 16.8 H9.6" stroke="#cfcfcf" stroke-width="1.3"/><path d="M8 1 H15 L17 3.4 H8Z" fill="#cfcfcf"/><rect x="11.8" y="3.2" width="2.2" height="15" fill="#cfcfcf"/></svg>
<svg style="left:2537px;top:30px;" width="18" height="20" viewBox="0 0 18 20"><path d="M8.5 1.5 L16.5 5.8 L8.5 10.2 L0.5 5.8Z" fill="#cfcfcf"/><path d="M5 5 H12 M5 6.8 H12" stroke="#444" stroke-width="0.8"/><path d="M1 9.8 L8.5 13.8 L16 9.8 M1 13.6 L8.5 17.6 L16 13.6" fill="none" stroke="#cfcfcf" stroke-width="1.7"/></svg>
<div style="left:0px;top:53.3px;width:2560px;height:2.8px;background:#373737;"></div>
<div style="left:3px;top:60px;width:5px;height:92px;background-image:linear-gradient(transparent 1px,#444 1px),linear-gradient(90deg,#868686 1px,transparent 1px);background-size:3px 3px;"></div>
<div style="left:14px;top:58px;width:20px;height:95px;background:#3b3b3b;"></div>
<div style="left:19px;top:73.5px;width:10px;height:1.6px;background:#bdbdbd;"></div>
<div style="left:19px;top:76.5px;width:10px;height:1.6px;background:#bdbdbd;"></div>
<svg style="left:18px;top:127px;" width="12" height="12" viewBox="0 0 12 12"><circle cx="6" cy="6" r="3.4" fill="none" stroke="#bdbdbd" stroke-width="1.6"/><circle cx="6" cy="6" r="4.8" fill="none" stroke="#bdbdbd" stroke-width="1.6" stroke-dasharray="1.6 2.17"/></svg>
<div style="left:37px;top:58px;width:2523px;height:19px;background:#373737;"></div>
<div style="left:38px;top:59.5px;width:57.5px;height:18px;background:#444444;border-radius:3px 3px 0 0;border:1px solid #4a4a4a;border-bottom:none;"></div>
<div class="t" style="left:49px;top:58.5px;height:20px;line-height:20px;font-size:11.5px;color:#ececec;letter-spacing:0.210px;">Arnold</div>
<div style="left:97px;top:59.5px;width:109px;height:17.5px;background:#3a3a3a;border-radius:3px 3px 0 0;border:1px solid #454545;border-bottom:none;"></div>
<div class="t" style="left:108px;top:58.5px;height:20px;line-height:20px;font-size:11.5px;color:#a9a9a9;letter-spacing:-0.288px;">Curves / Surfaces</div>
<div style="left:208px;top:59.5px;width:96px;height:17.5px;background:#3a3a3a;border-radius:3px 3px 0 0;border:1px solid #454545;border-bottom:none;"></div>
<div class="t" style="left:219px;top:58.5px;height:20px;line-height:20px;font-size:11.5px;color:#a9a9a9;letter-spacing:0.097px;">Poly Modeling</div>
<div style="left:306px;top:59.5px;width:71px;height:17.5px;background:#3a3a3a;border-radius:3px 3px 0 0;border:1px solid #454545;border-bottom:none;"></div>
<div class="t" style="left:317px;top:58.5px;height:20px;line-height:20px;font-size:11.5px;color:#a9a9a9;letter-spacing:0.132px;">Sculpting</div>
<div style="left:379px;top:59.5px;width:63px;height:17.5px;background:#3a3a3a;border-radius:3px 3px 0 0;border:1px solid #454545;border-bottom:none;"></div>
<div class="t" style="left:390px;top:58.5px;height:20px;line-height:20px;font-size:11.5px;color:#a9a9a9;letter-spacing:0.215px;">Rigging</div>
<div style="left:444px;top:59.5px;width:75px;height:17.5px;background:#3a3a3a;border-radius:3px 3px 0 0;border:1px solid #454545;border-bottom:none;"></div>
<div class="t" style="left:455px;top:58.5px;height:20px;line-height:20px;font-size:11.5px;color:#a9a9a9;letter-spacing:0.151px;">Animation</div>
<div style="left:521px;top:59.5px;width:76px;height:17.5px;background:#3a3a3a;border-radius:3px 3px 0 0;border:1px solid #454545;border-bottom:none;"></div>
<div class="t" style="left:532px;top:58.5px;height:20px;line-height:20px;font-size:11.5px;color:#a9a9a9;letter-spacing:0.048px;">Rendering</div>
<div style="left:599px;top:59.5px;width:35px;height:17.5px;background:#3a3a3a;border-radius:3px 3px 0 0;border:1px solid #454545;border-bottom:none;"></div>
<div class="t" style="left:610px;top:58.5px;height:20px;line-height:20px;font-size:11.5px;color:#a9a9a9;letter-spacing:-1.098px;">FX</div>
<div style="left:635px;top:59.5px;width:79px;height:17.5px;background:#3a3a3a;border-radius:3px 3px 0 0;border:1px solid #454545;border-bottom:none;"></div>
<div class="t" style="left:646px;top:58.5px;height:20px;line-height:20px;font-size:11.5px;color:#a9a9a9;letter-spacing:-0.358px;">FX Caching</div>
<div style="left:716px;top:59.5px;width:61px;height:17.5px;background:#3a3a3a;border-radius:3px 3px 0 0;border:1px solid #454545;border-bottom:none;"></div>
<div class="t" style="left:727px;top:58.5px;height:20px;line-height:20px;font-size:11.5px;color:#a9a9a9;letter-spacing:-0.187px;">Custom</div>
<div style="left:779px;top:59.5px;width:53px;height:17.5px;background:#3a3a3a;border-radius:3px 3px 0 0;border:1px solid #454545;border-bottom:none;"></div>
<div class="t" style="left:790px;top:58.5px;height:20px;line-height:20px;font-size:11.5px;color:#a9a9a9;letter-spacing:-0.681px;">MASH</div>
<div style="left:834px;top:59.5px;width:108px;height:17.5px;background:#3a3a3a;border-radius:3px 3px 0 0;border:1px solid #454545;border-bottom:none;"></div>
<div class="t" style="left:845px;top:58.5px;height:20px;line-height:20px;font-size:11.5px;color:#a9a9a9;letter-spacing:0.118px;">Motion Graphics</div>
<div style="left:943.5px;top:59.5px;width:60.5px;height:17.5px;background:#3a3a3a;border-radius:3px 3px 0 0;border:1px solid #454545;border-bottom:none;"></div>
<div class="t" style="left:954.5px;top:58.5px;height:20px;line-height:20px;font-size:11.5px;color:#a9a9a9;letter-spacing:-1.086px;">TURTLE</div>
<div style="left:1005.5px;top:59.5px;width:49.5px;height:17.5px;background:#3a3a3a;border-radius:3px 3px 0 0;border:1px solid #454545;border-bottom:none;"></div>
<div class="t" style="left:1016.5px;top:58.5px;height:20px;line-height:20px;font-size:11.5px;color:#a9a9a9;letter-spacing:-0.602px;">XGen</div>
<div style="left:1057px;top:59.5px;width:86px;height:17.5px;background:#3a3a3a;border-radius:3px 3px 0 0;border:1px solid #454545;border-bottom:none;"></div>
<div class="t" style="left:1068px;top:58.5px;height:20px;line-height:20px;font-size:11.5px;color:#a9a9a9;letter-spacing:-0.096px;">ZooToolsPro</div>
<div style="left:1145px;top:59.5px;width:88px;height:17.5px;background:#3a3a3a;border-radius:3px 3px 0 0;border:1px solid #454545;border-bottom:none;"></div>
<div class="t" style="left:1156px;top:58.5px;height:20px;line-height:20px;font-size:11.5px;color:#a9a9a9;letter-spacing:-0.088px;">CustomTools</div>
<div style="left:1235px;top:59.5px;width:90.5px;height:17.5px;background:#3a3a3a;border-radius:3px 3px 0 0;border:1px solid #454545;border-bottom:none;"></div>
<div class="t" style="left:1246px;top:58.5px;height:20px;line-height:20px;font-size:11.5px;color:#a9a9a9;letter-spacing:-0.295px;">QuadRemesh</div>
<div style="left:1327px;top:59.5px;width:65px;height:17.5px;background:#3a3a3a;border-radius:3px 3px 0 0;border:1px solid #454545;border-bottom:none;"></div>
<div class="t" style="left:1338px;top:58.5px;height:20px;line-height:20px;font-size:11.5px;color:#a9a9a9;letter-spacing:0.039px;">Redshift</div>
<div style="left:1394px;top:59.5px;width:76px;height:18px;background:#444444;border-radius:3px 3px 0 0;border:1px solid #505050;border-bottom:none;"></div>
<div class="t" style="left:1405px;top:58.5px;height:20px;line-height:20px;font-size:11.5px;color:#dadada;letter-spacing:-0.233px;">Omniverse</div>
<div style="left:257px;top:81px;width:2px;height:34px;background:#8e8e8e;"></div>
<div style="left:409px;top:81px;width:2px;height:34px;background:#8e8e8e;"></div>
<div style="left:526px;top:81px;width:2px;height:34px;background:#8e8e8e;"></div>
<div style="left:608px;top:81px;width:2px;height:34px;background:#8e8e8e;"></div>
<svg style="left:44px;top:82px;" width="30" height="30" viewBox="0 0 30 30"><rect x="9" y="9" width="12" height="12" fill="#c8b43c"/><rect x="-1" y="-12.4" width="2" height="2.8" fill="#c9c9c9" transform="translate(15,15) rotate(0)"/><rect x="-1" y="-12.4" width="2" height="2.8" fill="#c9c9c9" transform="translate(15,15) rotate(90)"/><rect x="-1" y="-12.4" width="2" height="2.8" fill="#c9c9c9" transform="translate(15,15) rotate(180)"/><rect x="-1" y="-12.4" width="2" height="2.8" fill="#c9c9c9" transform="translate(15,15) rotate(270)"/><circle cx="0" cy="-10.6" r="1.2" fill="#c9c9c9" transform="translate(15,15) rotate(45)"/><circle cx="0" cy="-10.6" r="1.2" fill="#c9c9c9" transform="translate(15,15) rotate(135)"/><circle cx="0" cy="-10.6" r="1.2" fill="#c9c9c9" transform="translate(15,15) rotate(225)"/><circle cx="0" cy="-10.6" r="1.2" fill="#c9c9c9" transform="translate(15,15) rotate(315)"/></svg>
<svg style="left:79px;top:82px;" width="30" height="30" viewBox="0 0 30 30"><path d="M15 7.5 L22 11 V19 L15 22.5 L8 19 V11Z" fill="#c8b43c"/><path d="M8 11 L15 14.5 L22 11 M15 14.5 V22.5" stroke="#6d6220" stroke-width="1.2" fill="none"/><rect x="-1" y="-12.4" width="2" height="2.8" fill="#c9c9c9" transform="translate(15,15) rotate(0)"/><rect x="-1" y="-12.4" width="2" height="2.8" fill="#c9c9c9" transform="translate(15,15) rotate(90)"/><rect x="-1" y="-12.4" width="2" height="2.8" fill="#c9c9c9" transform="translate(15,15) rotate(180)"/><rect x="-1" y="-12.4" width="2" height="2.8" fill="#c9c9c9" transform="translate(15,15) rotate(270)"/><circle cx="0" cy="-10.6" r="1.2" fill="#c9c9c9" transform="translate(15,15) rotate(45)"/><circle cx="0" cy="-10.6" r="1.2" fill="#c9c9c9" transform="translate(15,15) rotate(135)"/><circle cx="0" cy="-10.6" r="1.2" fill="#c9c9c9" transform="translate(15,15) rotate(225)"/><circle cx="0" cy="-10.6" r="1.2" fill="#c9c9c9" transform="translate(15,15) rotate(315)"/></svg>
<svg style="left:114px;top:82px;" width="30" height="30" viewBox="0 0 30 30"><path d="M10 4.5 H20 Q20 8 15 8.5 Q10 8 10 4.5Z" fill="#c8b43c"/><path d="M15 9 V26" stroke="#c9c9c9" stroke-width="2.4"/><path d="M13 11 L5 18 M17 11 L25 18" stroke="#c9c9c9" stroke-width="1.8"/><path d="M11 17 L4 24 M19 17 L26 24" stroke="#8b8b8b" stroke-width="1" stroke-dasharray="3 2"/></svg>
<svg style="left:149px;top:82px;" width="30" height="30" viewBox="0 0 30 30"><circle cx="15" cy="15.5" r="10.3" fill="none" stroke="#c9c9c9" stroke-width="1.25"/><ellipse cx="15" cy="15.5" rx="4.8" ry="10.3" fill="none" stroke="#c9c9c9" stroke-width="1.1"/><path d="M6 10.5 H24 M6 20.5 H24" stroke="#c9c9c9" stroke-width="1.1"/><path d="M4.7 15.5 A10.3 10.3 0 0 1 25.3 15.5" fill="none" stroke="#c8b43c" stroke-width="1.4"/><path d="M10.2 15.5 A4.8 10.3 0 0 1 19.8 15.5 M6 10.5 H24" fill="none" stroke="#c8b43c" stroke-width="1.2"/><path d="M1 15.8 H29" stroke="#c8b43c" stroke-width="1.6"/></svg>
<svg style="left:184px;top:82px;" width="30" height="30" viewBox="0 0 30 30"><circle cx="15" cy="15.5" r="10.3" fill="none" stroke="#c9c9c9" stroke-width="1.25"/><ellipse cx="15" cy="15.5" rx="4.8" ry="10.3" fill="none" stroke="#c9c9c9" stroke-width="1.1"/><path d="M6 10.5 H24 M6 20.5 H24" stroke="#c9c9c9" stroke-width="1.1"/><path d="M4.7 15.5 A10.3 10.3 0 0 1 25.3 15.5" fill="none" stroke="#c8b43c" stroke-width="1.4"/><path d="M10.2 15.5 A4.8 10.3 0 0 1 19.8 15.5 M6 10.5 H24" fill="none" stroke="#c8b43c" stroke-width="1.1"/><path d="M1 15.8 H29" stroke="#c8b43c" stroke-width="1.6"/><rect x="9" y="10" width="12" height="11.5" fill="#c9c9c9" stroke="#444" stroke-width="1"/></svg>
<svg style="left:219px;top:82px;" width="30" height="30" viewBox="0 0 30 30"><path d="M8 15 A7 7 0 0 1 22 15Z" fill="#c8b43c"/><path d="M1 15.8 H29" stroke="#c8b43c" stroke-width="1.6"/><path d="M5 17.5 A10.3 10.3 0 0 0 25 17.5" fill="none" stroke="#c9c9c9" stroke-width="1.25"/><path d="M-1.8 -10 L0 -13.4 L1.8 -10Z" fill="#c8b43c" transform="translate(15,15.5) rotate(-70)"/><path d="M-1.8 -10 L0 -13.4 L1.8 -10Z" fill="#c8b43c" transform="translate(15,15.5) rotate(-35)"/><path d="M-1.8 -10 L0 -13.4 L1.8 -10Z" fill="#c8b43c" transform="translate(15,15.5) rotate(0)"/><path d="M-1.8 -10 L0 -13.4 L1.8 -10Z" fill="#c8b43c" transform="translate(15,15.5) rotate(35)"/><path d="M-1.8 -10 L0 -13.4 L1.8 -10Z" fill="#c8b43c" transform="translate(15,15.5) rotate(70)"/></svg>
<svg style="left:260px;top:78px;" width="160" height="40" viewBox="260 78 160 40"><path d="M281 84.6 L291.9 90.7 V102.9 L281 109 L270.1 102.9 V90.7Z" fill="none" stroke="#d6d6d6" stroke-width="1.25" stroke-linejoin="round"/><path d="M270.1 90.7 L281 96.8 L291.9 90.7" fill="none" stroke="#d6d6d6" stroke-width="1.25"/><path d="M281 89.8 L288 93.4 V100.2 L281 103.6 L274 100.2 V93.4Z" fill="#41b6c8"/><path d="M274 93.6 L281 97 L288 93.6" fill="none" stroke="#9adbe6" stroke-width="0.6"/><path d="M281 96.8 V109" stroke="#a8a8a8" stroke-width="1.8"/><rect x="284.5" y="81.5" width="13" height="13" fill="#444"/><path d="M291 83 V93 M286 88 H296.2" stroke="#e6e6e6" stroke-width="2.3"/><path d="M316 84.6 L326.9 90.7 V102.9 L316 109 L305.1 102.9 V90.7Z" fill="none" stroke="#d6d6d6" stroke-width="1.25" stroke-linejoin="round"/><path d="M305.1 90.7 L316 96.8 L326.9 90.7" fill="none" stroke="#d6d6d6" stroke-width="1.25"/><path d="M316 89.8 L323 93.4 V100.2 L316 103.6 L309 100.2 V93.4Z" fill="#41b6c8"/><path d="M309 93.6 L316 97 L323 93.6" fill="none" stroke="#9adbe6" stroke-width="0.6"/><path d="M316 96.8 V109" stroke="#a8a8a8" stroke-width="1.8"/><rect x="318.5" y="99.5" width="10" height="12.4" fill="#444"/><path d="M325 101.6 H320.8 V110.4 H325" fill="none" stroke="#e6e6e6" stroke-width="1.5"/><path d="M323.5 103.6 H327 V101.4 L331.6 106 L327 110.6 V108.4 H323.5Z" fill="#e2e2e2"/><circle cx="351" cy="96.8" r="10.7" fill="none" stroke="#d0d0d0" stroke-width="1.25" stroke-dasharray="4 2.1"/><path d="M350.8 88.4 C343 91.5 345 95 351 97.2 C358 99.8 358.5 103.2 351.4 105.6" fill="none" stroke="#c8b43c" stroke-width="1.7" stroke-linecap="round"/><path d="M386 85.2 L397 91.2 V103 L386 109 L375 103 V91.2Z" fill="#3fb4c8"/><path d="M375.5 94 q2.6 -1.6 5 0.2 t5.4 2.8 M375.5 98 q2.6 -1.6 5 0.2 t5.4 2.8 M375.5 102 q2.6 -1.4 5 0.4 t5.4 2.6 M386.4 100 q2.8 -3 5.4 -2.4 t4.8 -2.6 M386.4 104 q2.8 -3 5.4 -2.4 t4.8 -2.6 M386.4 96 q2.8 -3 5.4 -2.6 t4.8 -2.2 M379 89.4 q3.6 0.2 6 2.2 t7.2 0.4 M383 87.2 q3 0.4 5 2 t5.4 0.2" fill="none" stroke="#2a7e90" stroke-width="1.3"/><path d="M375 91.2 L386 97.4 L397 91.2 M386 97.4 V109" fill="none" stroke="#255f6c" stroke-width="0.8"/></svg>
<svg style="left:418px;top:82px;" width="30" height="30" viewBox="0 0 30 30"><rect x="3" y="3" width="24" height="24" fill="#41b6c8"/><rect x="3" y="3" width="24" height="4.2" fill="#dcdcdc"/><rect x="4.2" y="4.2" width="1.6" height="1.6" fill="#444"/><rect x="6.8" y="4.2" width="1.6" height="1.6" fill="#444"/><rect x="9.4" y="4.2" width="1.6" height="1.6" fill="#444"/><rect x="8" y="10" width="14" height="14" fill="#3b3b3b"/><rect x="9" y="11" width="4" height="4" fill="#d0d0d0"/><rect x="9" y="19" width="4" height="4" fill="#d0d0d0"/><rect x="13" y="15" width="4" height="4" fill="#d0d0d0"/><rect x="17" y="11" width="4" height="4" fill="#d0d0d0"/><rect x="17" y="19" width="4" height="4" fill="#d0d0d0"/></svg>
<svg style="left:455.5px;top:82px;" width="30" height="30" viewBox="0 0 30 30"><rect x="3" y="6" width="19" height="19" fill="#3a3a3a"/><rect x="3" y="6" width="6.33" height="6.33" fill="#c8b43c"/><rect x="3" y="18.66" width="6.33" height="6.33" fill="#c8b43c"/><rect x="9.33" y="12.33" width="6.33" height="6.33" fill="#c8b43c"/><rect x="15.66" y="6" width="6.33" height="6.33" fill="#c8b43c"/><rect x="15.66" y="18.66" width="6.33" height="6.33" fill="#c8b43c"/><path d="M19.5 12 A5 5 0 1 1 26 8.5" fill="none" stroke="#d6d6d6" stroke-width="1.5"/><path d="M22.5 10 L26.8 12 L26.5 7Z" fill="#d6d6d6"/></svg>
<svg style="left:490.5px;top:82px;" width="30" height="30" viewBox="0 0 30 30"><rect x="3" y="6" width="19" height="19" fill="#3a3a3a"/><rect x="3" y="6" width="6.33" height="6.33" fill="#c8b43c"/><rect x="3" y="18.66" width="6.33" height="6.33" fill="#c8b43c"/><rect x="9.33" y="12.33" width="6.33" height="6.33" fill="#c8b43c"/><rect x="15.66" y="6" width="6.33" height="6.33" fill="#c8b43c"/><rect x="15.66" y="18.66" width="6.33" height="6.33" fill="#c8b43c"/><path d="M18 20 L26 28 M26 20 L18 28" stroke="#d6d6d6" stroke-width="2.4"/></svg>
<svg style="left:535px;top:82px;" width="30" height="30" viewBox="0 0 30 30"><path d="M11 26 H4.5 V5 H25.5 V26 H19" fill="none" stroke="#c8b43c" stroke-width="1.5"/><path d="M11 25 H19 L15 29Z" fill="#c8b43c"/><rect x="8" y="14" width="8" height="8" fill="#c9c9c9"/><circle cx="18" cy="12.5" r="4.8" fill="#c9c9c9" stroke="#444" stroke-width="0.8"/></svg>
<svg style="left:570px;top:82px;" width="30" height="30" viewBox="0 0 30 30"><path d="M11 26 H4.5 V5 H25.5 V26 H19" fill="none" stroke="#c8b43c" stroke-width="1.5"/><path d="M11 25 H19 L15 29Z" fill="#c8b43c"/><rect x="8.5" y="8.5" width="13" height="13" fill="#3a3a3a"/><rect x="9" y="9" width="4" height="4" fill="#d0d0d0"/><rect x="9" y="17" width="4" height="4" fill="#d0d0d0"/><rect x="13" y="13" width="4" height="4" fill="#d0d0d0"/><rect x="17" y="9" width="4" height="4" fill="#d0d0d0"/><rect x="17" y="17" width="4" height="4" fill="#d0d0d0"/></svg>
<svg style="left:617px;top:84px;" width="30" height="26" viewBox="0 0 30 26"><rect x="1" y="1" width="28" height="24" fill="#3a3a3a" stroke="#c9c9c9" stroke-width="1.3"/><path d="M2.5 3.2 H27.5 M2.5 22.8 H27.5" stroke="#c9c9c9" stroke-width="1.4" stroke-dasharray="2.6 1.3"/><path d="M1 5.2 H29 M1 20.8 H29" stroke="#c9c9c9" stroke-width="0.9"/><path d="M7 13 Q15 5.5 23 13 Q15 20.5 7 13Z" fill="#c9c9c9"/><circle cx="15" cy="13" r="3.8" fill="#3a3a3a"/><circle cx="16.3" cy="11.8" r="1.1" fill="#c9c9c9"/></svg>
<svg style="left:653px;top:84px;" width="28" height="26" viewBox="0 0 28 26"><rect x="1" y="2" width="26" height="22" fill="#2e2e2e" stroke="#c9c9c9" stroke-width="1.3"/><path d="M2.5 4 H25.5 M2.5 22 H25.5" stroke="#c9c9c9" stroke-width="1.3" stroke-dasharray="2.6 1.3"/><path d="M1 5.8 H27 M1 20.2 H27" stroke="#c9c9c9" stroke-width="0.9"/><path d="M4 8.5 H23" stroke="#fff" stroke-width="2"/><path d="M4 11.8 H12" stroke="#777" stroke-width="1.6"/><path d="M4 14.8 H13" stroke="#fff" stroke-width="1.8"/><path d="M4 17.4 H18" stroke="#777" stroke-width="1.2"/><path d="M4 19.2 H19" stroke="#ddd" stroke-width="1"/></svg>
<svg style="left:687px;top:84px;" width="30" height="26" viewBox="0 0 30 26"><rect x="1" y="1" width="28" height="24" fill="#3a3a3a" stroke="#c9c9c9" stroke-width="1.3"/><path d="M2.5 3.2 H27.5 M2.5 22.8 H27.5" stroke="#c9c9c9" stroke-width="1.4" stroke-dasharray="2.6 1.3"/><path d="M1 5.2 H29 M1 20.8 H29" stroke="#c9c9c9" stroke-width="0.9"/><path d="M11 7.5 L20.5 13 L11 18.5Z" fill="#c9c9c9"/></svg>
<svg style="left:2541px;top:82px;" width="10" height="8" viewBox="0 0 10 8"><path d="M5 1 L9.5 7 H0.5Z" fill="#b4b4b4"/></svg>
<div style="left:2541.5px;top:93px;width:9px;height:40px;background:#5d5d5d;border-radius:4.5px;"></div>
<svg style="left:2541px;top:138px;" width="10" height="8" viewBox="0 0 10 8"><path d="M0.5 1 H9.5 L5 7Z" fill="#b4b4b4"/></svg>
<div style="left:0px;top:154.2px;width:2560px;height:2.8px;background:#373737;"></div>
<div style="left:2px;top:161px;width:38px;height:5px;background-image:linear-gradient(transparent 1px,#444 1px),linear-gradient(90deg,#868686 1px,transparent 1px);background-size:3px 3px;"></div>
<div style="left:44.5px;top:158px;width:1.5px;height:1118px;background:#3a3a3a;"></div>
<div style="left:4px;top:170px;width:36px;height:36px;background:#5285a6;"></div>
<svg style="left:4px;top:170px;" width="36" height="36" viewBox="0 0 36 36"><path d="M13.5 5.5 L13.5 27.5 L18.7 22.6 L22.6 31 L26.4 29.2 L22.6 21 L29.5 20.6Z" fill="#cfcfcf"/></svg>
<svg style="left:0px;top:200px;" width="50" height="200" viewBox="0 0 50 200"><ellipse cx="20" cy="21.7" rx="12" ry="6.6" fill="none" stroke="#41b6c8" stroke-width="1.9" stroke-dasharray="4.6 2.6" transform="rotate(-32 20 21.7)"/><path d="M22 18.8 L22 36.4 L26.2 32.5 L29.3 39.3 L32.4 37.9 L29.3 31.2 L34.9 30.8Z" fill="#cfcfcf"/><ellipse cx="18.8" cy="65" rx="12.3" ry="7" fill="none" stroke="#41b6c8" stroke-width="1.9" stroke-dasharray="4.6 2.6" transform="rotate(36 18.8 65)"/><path d="M35 49.6 L26.5 57.6" stroke="#cfcfcf" stroke-width="2.8" stroke-linecap="round"/><path d="M24.2 55.8 L28 60 Q25.5 68.6 15.2 65.8 Q19.8 61.6 24.2 55.8Z" fill="#cfcfcf"/><rect x="15.9" y="93.2" width="12.3" height="12" fill="#cfcfcf"/><path d="M22 85.3 L26 89 H18Z M22 113.4 L26 109.6 H18Z M8 99.2 L11.8 95.2 V103.2Z M35.8 99.2 L32 95.2 V103.2Z" fill="#41b6c8"/><path d="M21 149.4 A13.6 13.6 0 1 1 34.6 135.8" fill="none" stroke="#41b6c8" stroke-width="1.7"/><path d="M31.8 136 L37.4 136 L34.6 140.6Z" fill="#41b6c8"/><path d="M21 127.6 L29.2 135.8 L21 144 L12.8 135.8Z" fill="#cfcfcf"/><rect x="10.5" y="160.6" width="24" height="23.8" fill="none" stroke="#41b6c8" stroke-width="1.3" stroke-dasharray="3.6 2.2"/><rect x="9.8" y="174.1" width="11.2" height="11" fill="#cfcfcf"/><path d="M18.8 170.5 H24.9 V176.3" fill="none" stroke="#41b6c8" stroke-width="1.5"/></svg>
<div style="left:4px;top:469.8px;width:36px;height:2px;background:#9a9a9a;"></div>
<div style="left:7.9px;top:480.6px;width:28.4px;height:28.6px;background:#c4c4c4;border:1.6px solid #c8c8c8;outline:none;"></div>
<div style="left:10px;top:482.7px;width:24.2px;height:24.4px;background:#c4c4c4;border:1.2px solid #3a3a3a;"></div>
<svg style="left:7.9px;top:480.6px;" width="28.4" height="28.6" viewBox="0 0 28.4 28.6"><path d="M14.2 7.6 L18.4 10.6 L14.2 13.6 L10 10.6Z M14.2 15.2 L18.4 18.2 L14.2 21.2 L10 18.2Z M8.6 11.4 L12.8 14.4 L8.6 17.4 L4.4 14.4Z M19.8 11.4 L24 14.4 L19.8 17.4 L15.6 14.4Z" fill="#2e2e2e"/></svg>
<div style="left:5.7px;top:515.7px;width:32.6px;height:32.4px;background:linear-gradient(#f4f4f4 0%,#e2e2e2 30%,#bdbdbd 60%,#8e8e8e 100%);border:1px solid #2c2c2c;border-radius:3px;"></div>
<div style="left:7.9px;top:555px;width:12.8px;height:28px;background:#3a3a3a;border:1.5px solid #b4b4b4;"></div>
<svg style="left:7.9px;top:555px;" width="12.8" height="28" viewBox="0 0 12.8 28"><path d="M6.4 10.6 V17.4 M3 14 H9.8" stroke="#d8d8d8" stroke-width="1.2"/></svg>
<div style="left:23px;top:555px;width:13px;height:28px;background:#c8c8c8;"></div>
<svg style="left:23px;top:555px;" width="13" height="28" viewBox="0 0 13 28"><path d="M6.5 11 L10.6 14 L6.5 17 L2.4 14Z" fill="#2e2e2e"/></svg>
<div style="left:4px;top:587.8px;width:36px;height:36.2px;background:#5285a6;"></div>
<svg style="left:4px;top:587.8px;" width="36" height="36.2" viewBox="0 0 36 36.2"><rect x="4.2" y="4.2" width="27.8" height="28" fill="none" stroke="#d8d8d8" stroke-width="1.4"/><rect x="6.6" y="6.6" width="23" height="23.2" fill="none" stroke="#2b4a5e" stroke-width="1"/><path d="M10.6 11.5 V27 M10.6 15.2 H15 M10.6 21 H15 M10.6 26.8 H15" stroke="#d8d8d8" stroke-width="1" fill="none"/><rect x="9" y="8" width="3.4" height="3.4" fill="#e4e4e4"/><path d="M12.4 9.7 H23.5" stroke="#e4e4e4" stroke-width="1.8"/><rect x="14.6" y="13.4" width="3.4" height="3.4" fill="#e4e4e4"/><path d="M18 15.1 H27.5" stroke="#e4e4e4" stroke-width="1.8"/><rect x="14.6" y="19.2" width="3.4" height="3.4" fill="#e4e4e4"/><path d="M18 20.9 H24.5" stroke="#e4e4e4" stroke-width="1.8"/><rect x="14.6" y="25" width="3.4" height="3.4" fill="#e4e4e4"/><path d="M18 26.7 H26.5" stroke="#e4e4e4" stroke-width="1.8"/></svg>
<div style="left:4px;top:629.4px;width:36px;height:2px;background:#9a9a9a;"></div>
<svg style="left:9px;top:640px;" width="28" height="28" viewBox="0 0 28 28"><circle cx="11.3" cy="11.7" r="7.6" fill="none" stroke="#b8b8b8" stroke-width="2.2"/><path d="M16.8 17.2 L22.6 23.2" stroke="#b8b8b8" stroke-width="3.4" stroke-linecap="round"/></svg>
<svg style="left:6px;top:1240px;" width="32" height="34" viewBox="0 0 32 34"><g transform="translate(0,0) scale(1)"><path d="M3 3 L8 1 H27 V22 H30 V32 H6 V22 L3 23.5Z" fill="#1a5a7a"/><path d="M1 5 L6 2.5 V22 L1 24.5Z" fill="#7ccde0"/><path d="M6 1.5 a1.5 1.5 0 0 1 1.5-1.5 H26.5 a1.5 1.5 0 0 1 1.5 1.5 V22 H6Z" fill="#2a9fc4"/><path d="M4 23.5 L6 22 H28 V30.5 a1.5 1.5 0 0 1 -1.5 1.5 H5.5 a1.5 1.5 0 0 1 -1.5 -1.5Z" fill="#245f7e"/><text x="17" y="18" font-family="Liberation Sans" font-weight="bold" font-size="17" text-anchor="middle" fill="#eef4f6">M</text><text x="16.5" y="30" font-family="Liberation Sans" font-weight="bold" font-size="6.6" text-anchor="middle" fill="#eef4f6">AYA</text></g></svg>
<div class="t" style="left:58.2px;top:161px;height:20px;line-height:20px;font-size:11.5px;color:#c8c8c8;letter-spacing:0.020px;">View</div>
<div class="t" style="left:98.3px;top:161px;height:20px;line-height:20px;font-size:11.5px;color:#c8c8c8;letter-spacing:0.071px;">Shading</div>
<div class="t" style="left:156.4px;top:161px;height:20px;line-height:20px;font-size:11.5px;color:#c8c8c8;letter-spacing:0.252px;">Lighting</div>
<div class="t" style="left:214.4px;top:161px;height:20px;line-height:20px;font-size:11.5px;color:#c8c8c8;letter-spacing:-0.042px;">Show</div>
<div class="t" style="left:258.4px;top:161px;height:20px;line-height:20px;font-size:11.5px;color:#c8c8c8;letter-spacing:-0.168px;">Renderer</div>
<div class="t" style="left:320.3px;top:161px;height:20px;line-height:20px;font-size:11.5px;color:#c8c8c8;letter-spacing:-0.494px;">Panels</div>
<div style="left:54px;top:181px;width:1.5px;height:18px;background:#6f6f6f;"></div>
<div style="left:53px;top:185.5px;width:3.5px;height:9px;background:#7d7d7d;border-radius:1px;"></div>
<div style="left:159px;top:181px;width:1.5px;height:18px;background:#6f6f6f;"></div>
<div style="left:158px;top:185.5px;width:3.5px;height:9px;background:#7d7d7d;border-radius:1px;"></div>
<div style="left:303px;top:181px;width:1.5px;height:18px;background:#6f6f6f;"></div>
<div style="left:302px;top:185.5px;width:3.5px;height:9px;background:#7d7d7d;border-radius:1px;"></div>
<div style="left:447px;top:181px;width:1.5px;height:18px;background:#6f6f6f;"></div>
<div style="left:446px;top:185.5px;width:3.5px;height:9px;background:#7d7d7d;border-radius:1px;"></div>
<div style="left:591.5px;top:181px;width:1.5px;height:18px;background:#6f6f6f;"></div>
<div style="left:590.5px;top:185.5px;width:3.5px;height:9px;background:#7d7d7d;border-radius:1px;"></div>
<div style="left:677.5px;top:181px;width:1.5px;height:18px;background:#6f6f6f;"></div>
<div style="left:676.5px;top:185.5px;width:3.5px;height:9px;background:#7d7d7d;border-radius:1px;"></div>
<div style="left:707.5px;top:181px;width:1.5px;height:18px;background:#6f6f6f;"></div>
<div style="left:706.5px;top:185.5px;width:3.5px;height:9px;background:#7d7d7d;border-radius:1px;"></div>
<div style="left:775.5px;top:181px;width:1.5px;height:18px;background:#6f6f6f;"></div>
<div style="left:774.5px;top:185.5px;width:3.5px;height:9px;background:#7d7d7d;border-radius:1px;"></div>
<div style="left:60px;top:181px;width:18px;height:18px;background:#38a0c8;"></div>
<svg style="left:60px;top:181px;" width="18" height="18" viewBox="0 0 18 18"><path d="M0 0 H3 V15 L0 18Z" fill="#7cc7e0"/><path d="M0 18 L3 15 H18 V18Z" fill="#2b6f8c"/><rect x="3" y="0" width="15" height="15" fill="#38a0c8"/><text x="10.5" y="12" font-size="11" font-weight="bold" text-anchor="middle" fill="#fff" font-family="Liberation Sans">A</text></svg>
<svg style="left:81px;top:181px;" width="14" height="18" viewBox="0 0 14 18"><rect x="2" y="4" width="10" height="10" fill="#41b6c8" stroke="#8a8a8a" stroke-width="1.4"/><path d="M0 4 H14 M0 14 H14 M2 2 V16 M12 2 V16" stroke="#9a9a9a" stroke-width="1"/></svg>
<svg style="left:100px;top:181px;" width="14.5" height="18" viewBox="0 0 14.5 18"><rect x="0" y="2" width="14.5" height="13.5" fill="#8cb4ea"/><rect x="1" y="6.5" width="9.5" height="8" fill="none" stroke="#3a4a6a" stroke-width="1" stroke-dasharray="1.6 1.4"/></svg>
<svg style="left:118.5px;top:181px;" width="14.5" height="18" viewBox="0 0 14.5 18"><circle cx="7.2" cy="9" r="6.8" fill="#c4c4c4"/><path d="M0.6 10.5 A6.8 6.8 0 0 1 12.6 4.8Z" fill="#7c6fc8"/><path d="M0.5 8 A6.8 6.8 0 0 1 1.8 5 L6 8Z" fill="#d04a3a"/><path d="M8 2.3 A6.8 6.8 0 0 1 12.6 4.8 L9 6.5Z" fill="#3cb84a"/><path d="M3.5 3.3 A6.8 6.8 0 0 1 8 2.2 L8.6 6.6 L4.8 7.8Z" fill="#3a8ad0"/></svg>
<svg style="left:137px;top:181px;" width="16" height="18" viewBox="0 0 16 18"><rect x="5" y="1" width="10.5" height="9" fill="#4ab85a"/><rect x="3.5" y="2.6" width="10.5" height="9" fill="#d0533e"/><rect x="2" y="4.2" width="10.5" height="9" fill="#3d6fd0"/><rect x="0.5" y="6" width="11" height="10" fill="#3fb0c8"/><path d="M1.5 15 L4.5 11 L6 13 L8.5 9.5 L10.5 15Z" fill="#fff"/></svg>
<svg style="left:167.5px;top:181px;" width="15" height="18" viewBox="0 0 15 18"><rect x="0" y="5" width="9.6" height="8.5" fill="#c9c9c9"/><path d="M10.4 9.2 L14.8 5 V13.5Z" fill="#c9c9c9"/></svg>
<svg style="left:187px;top:181px;" width="14.5" height="18" viewBox="0 0 14.5 18"><rect x="3" y="2.5" width="7.5" height="6.5" fill="#c9c9c9"/><path d="M10.5 5.6 L14.5 2.5 V9Z" fill="#c9c9c9"/><rect x="0.5" y="9.5" width="6.5" height="6.5" fill="#41b6c8" stroke="#444" stroke-width="0.6"/><path d="M2 9.5 V7.8 a1.8 1.8 0 0 1 3.6 0 V9.5" fill="none" stroke="#41b6c8" stroke-width="1.3"/></svg>
<svg style="left:205.5px;top:181px;" width="15" height="18" viewBox="0 0 15 18"><rect x="3" y="2.5" width="7.5" height="6.5" fill="#c9c9c9"/><path d="M10.5 5.6 L14.5 2.5 V9Z" fill="#c9c9c9"/><circle cx="4.2" cy="12" r="2.6" fill="none" stroke="#41b6c8" stroke-width="2" stroke-dasharray="1.5 0.9"/></svg>
<svg style="left:229px;top:181px;" width="7" height="18" viewBox="0 0 7 18"><path d="M0.3 2.5 H6.7 V15.5 L3.5 12.5 L0.3 15.5Z" fill="#c9c9c9"/></svg>
<svg style="left:244px;top:181px;" width="14" height="18" viewBox="0 0 14 18"><path d="M4.5 13.5 L11 3 V11.5 L6.5 16Z" fill="#41b6c8"/><path d="M0.5 16 L5 11.5 M7 16.5 H13.5 L12 13.5" stroke="#c9c9c9" stroke-width="1.3" fill="none"/></svg>
<svg style="left:263px;top:181px;" width="15" height="18" viewBox="0 0 15 18"><path d="M5 1 V10 M1 5.5 H9.5 M5 0.5 L3 3 H7Z M0.5 5.5 L3 3.5 V7.5Z" stroke="#c9c9c9" stroke-width="1.3" fill="#c9c9c9"/><circle cx="10" cy="11" r="3.4" fill="none" stroke="#41b6c8" stroke-width="1.5"/><path d="M7.6 13.5 L5.5 16.5" stroke="#41b6c8" stroke-width="1.8"/></svg>
<svg style="left:280px;top:181px;" width="18.5" height="18" viewBox="0 0 18.5 18"><path d="M5 1 H1 V17 H5 M13.5 1 H17.5 V17 H13.5" fill="none" stroke="#22e022" stroke-width="1.2"/><path d="M13.5 3 L15.5 5 L7.5 13.5 L4.5 14.8 L5.5 11.5Z" fill="#41b6c8"/></svg>
<div style="left:310px;top:181px;width:18.5px;height:18px;background:#5285a6;"></div>
<svg style="left:310px;top:181px;" width="18.5" height="18" viewBox="0 0 18.5 18"><rect x="4" y="3.5" width="11" height="11" fill="#2e3e4a" stroke="#e6e6e6" stroke-width="1.3"/><path d="M7.7 3.5 V14.5 M11.3 3.5 V14.5 M4 7.2 H15 M4 10.8 H15" stroke="#e6e6e6" stroke-width="1.1"/></svg>
<svg style="left:331px;top:181px;" width="15" height="18" viewBox="0 0 15 18"><rect x="0.7" y="3" width="13.6" height="12" fill="#3a3a3a" stroke="#c9c9c9" stroke-width="1.2"/><path d="M1 5.6 H14 M1 12.4 H14" stroke="#c9c9c9" stroke-width="1"/><path d="M2 4.3 H13 M2 13.7 H13" stroke="#c9c9c9" stroke-width="1" stroke-dasharray="1.6 1.2"/></svg>
<svg style="left:350px;top:181px;" width="14.5" height="18" viewBox="0 0 14.5 18"><rect x="0.7" y="3" width="13.2" height="12" fill="none" stroke="#c9c9c9" stroke-width="1.3"/><circle cx="7.3" cy="9" r="2.6" fill="#41b6c8"/></svg>
<svg style="left:368.5px;top:181px;" width="15" height="18" viewBox="0 0 15 18"><rect x="0" y="2" width="15" height="14" fill="#4c4c4c"/><circle cx="7.5" cy="9" r="3.2" fill="#3c3c3c"/></svg>
<svg style="left:388px;top:181px;" width="14.5" height="18" viewBox="0 0 14.5 18"><rect x="0.7" y="3" width="13.2" height="12" fill="none" stroke="#c9c9c9" stroke-width="1.3"/><path d="M1 9 H14 M7.3 3 V15" stroke="#41b6c8" stroke-width="1.2" stroke-dasharray="1.5 1.2"/></svg>
<svg style="left:407px;top:181px;" width="14.5" height="18" viewBox="0 0 14.5 18"><rect x="0.7" y="3" width="13.2" height="12" fill="none" stroke="#c9c9c9" stroke-width="1.3"/><path d="M3 13 L6.5 8 L9.5 13Z" fill="#41b6c8"/><circle cx="10" cy="7" r="2" fill="#41b6c8"/></svg>
<svg style="left:426px;top:181px;" width="15" height="18" viewBox="0 0 15 18"><rect x="0.7" y="3" width="13.4" height="12" fill="none" stroke="#c9c9c9" stroke-width="1.3"/><text x="7.5" y="13.4" font-family="Liberation Serif" font-weight="bold" font-size="11" text-anchor="middle" fill="#41b6c8">T</text></svg>
<svg style="left:457px;top:182px;" width="14" height="17" viewBox="0 0 14 17"><path d="M7 1.5 L13 4.5 V12 L7 15 L1 12 V4.5Z M1 4.5 L7 7.5 L13 4.5 M7 7.5 V15" fill="none" stroke="#c9c9c9" stroke-width="1.1" stroke-linejoin="round"/></svg>
<div style="left:473px;top:181px;width:18.5px;height:18px;background:#5285a6;"></div>
<svg style="left:473px;top:181px;" width="18.5" height="18" viewBox="0 0 18.5 18"><g transform="translate(2,0.5)"><path d="M7 1.5 L13 4.5 V12 L7 15 L1 12 V4.5Z" fill="#59c4dc"/><path d="M7 7.5 V15 L1 12 V4.5Z" fill="#2f8ba5"/><path d="M7 7.5 V15 L13 12 V4.5Z" fill="#3da9c2"/><path d="M7 1.5 L13 4.5 V12 L7 15 L1 12 V4.5Z" fill="none" stroke="#1c3c4c" stroke-width="0.9"/></g></svg>
<div style="left:492.5px;top:181px;width:18px;height:18px;background:#5285a6;"></div>
<svg style="left:492.5px;top:181px;" width="18" height="18" viewBox="0 0 18 18"><circle cx="9" cy="9" r="6.6" fill="#d0d0d0" stroke="#2a2a2a" stroke-width="1"/><path d="M9 2.4 A6.6 6.6 0 0 1 9 15.6 A9 9 0 0 0 9 2.4Z" fill="#3a3a3a"/><path d="M10.5 4.5 h1.6 v1.6 h-1.6z M12.5 7 h1.6 v1.6 h-1.6z M11 9.6 h1.6 v1.6 h-1.6z M12.6 11.5 h1.4 v1.4 h-1.4z" fill="#d0d0d0"/></svg>
<svg style="left:514px;top:182px;" width="14" height="17" viewBox="0 0 14 17"><path d="M7 1.5 L13 4.5 V12 L7 15 L1 12 V4.5Z M1 4.5 L7 7.5 L13 4.5 M7 7.5 V15" fill="#41b6c8" stroke="#c9c9c9" stroke-width="1.1" stroke-linejoin="round"/><path d="M4 3 V10.5 L10 13.5 M10 3 V10.5 L4 13.5" stroke="#c9c9c9" stroke-width="0.8" fill="none"/></svg>
<svg style="left:533px;top:181px;" width="13" height="18" viewBox="0 0 13 18"><defs><pattern id="ck" width="3" height="3" patternUnits="userSpaceOnUse"><rect width="1.5" height="1.5" fill="#d8d8d8"/><rect x="1.5" y="1.5" width="1.5" height="1.5" fill="#d8d8d8"/></pattern></defs><circle cx="6.5" cy="9" r="6.2" fill="#2e2e2e"/><circle cx="6.5" cy="9" r="6.2" fill="url(#ck)"/></svg>
<svg style="left:551px;top:181px;" width="15" height="18" viewBox="0 0 15 18"><circle cx="7.5" cy="8" r="3.4" fill="#e4e4e4"/><rect x="6" y="11" width="3" height="3.6" fill="#e4e4e4"/><rect x="-0.5" y="-7.6" width="1" height="2" fill="#cfcfcf" transform="translate(7.5,8) rotate(-90)"/><rect x="-0.5" y="-7.6" width="1" height="2" fill="#cfcfcf" transform="translate(7.5,8) rotate(-45)"/><rect x="-0.5" y="-7.6" width="1" height="2" fill="#cfcfcf" transform="translate(7.5,8) rotate(0)"/><rect x="-0.5" y="-7.6" width="1" height="2" fill="#cfcfcf" transform="translate(7.5,8) rotate(45)"/><rect x="-0.5" y="-7.6" width="1" height="2" fill="#cfcfcf" transform="translate(7.5,8) rotate(90)"/></svg>
<svg style="left:570px;top:181px;" width="15" height="18" viewBox="0 0 15 18"><circle cx="9.5" cy="8" r="4.8" fill="#41b6c8"/><ellipse cx="4.5" cy="12" rx="4.5" ry="1.6" fill="#8a8a8a" transform="rotate(-30 4.5 12)"/></svg>
<svg style="left:600px;top:181px;" width="14" height="18" viewBox="0 0 14 18"><circle cx="7" cy="7.5" r="5.6" fill="#c2c2c2"/><path d="M0.5 14 L4 11 M3 16.5 L7 12.5 M7 16.5 L10 13 M1 16.5 L12 13" stroke="#41b6c8" stroke-width="1"/></svg>
<svg style="left:619px;top:181px;" width="15" height="18" viewBox="0 0 15 18"><circle cx="4.6" cy="11.6" r="4" fill="#6a6a6a"/><circle cx="6.6" cy="9.6" r="4" fill="#8e8e8e"/><circle cx="10" cy="6" r="4.4" fill="#d2d2d2"/></svg>
<svg style="left:639px;top:181px;" width="12.5" height="18" viewBox="0 0 12.5 18"><circle cx="6.2" cy="9" r="4.8" fill="none" stroke="#41b6c8" stroke-width="2"/><path d="M6.2 4.2 A4.8 4.8 0 0 1 6.2 13.8" fill="none" stroke="#d8d8d8" stroke-width="2" stroke-dasharray="1.8 1.4"/></svg>
<svg style="left:655px;top:181px;" width="18" height="18" viewBox="0 0 18 18"><rect x="0.5" y="0.5" width="17" height="17" fill="#3c3c3c" stroke="#555" stroke-width="1"/><rect x="3" y="3" width="8" height="8" fill="#3a5058"/><rect x="6.5" y="6.5" width="8.5" height="8.5" fill="#3f5a66"/></svg>
<svg style="left:687.5px;top:181px;" width="14" height="18" viewBox="0 0 14 18"><rect x="1" y="2" width="8" height="8" fill="none" stroke="#41b6c8" stroke-width="1.2" stroke-dasharray="2 1.4"/><path transform="translate(6,5.5) scale(0.85)" d="M0 0 L0 11 L2.6 8.6 L4.6 13 L6.6 12 L4.7 7.8 L8 7.6Z" fill="#d0d0d0" stroke="#3a3a3a" stroke-width="0.8"/></svg>
<svg style="left:716px;top:181px;" width="16" height="18" viewBox="0 0 16 18"><rect x="0" y="0" width="16" height="18" fill="#3a3a3a"/><rect x="6" y="3.5" width="7.5" height="7.5" fill="none" stroke="#e0e0e0" stroke-width="1.4"/><rect x="2.5" y="7" width="7.5" height="7.5" fill="#e0e0e0" stroke="#3a3a3a" stroke-width="0.8"/></svg>
<svg style="left:735px;top:181px;" width="16" height="18" viewBox="0 0 16 18"><rect x="0" y="0" width="16" height="18" fill="#3a3a3a"/><rect x="6" y="3.5" width="7.5" height="7.5" fill="none" stroke="#e0e0e0" stroke-width="1.4"/><rect x="2.5" y="7" width="7.5" height="7.5" fill="#e0e0e0" stroke="#3a3a3a" stroke-width="0.8"/></svg>
<svg style="left:754.5px;top:181px;" width="16" height="18" viewBox="0 0 16 18"><rect x="0" y="0" width="16" height="18" fill="#3a3a3a"/><rect x="2.2" y="3.2" width="11.6" height="11.6" fill="none" stroke="#e0e0e0" stroke-width="1.3"/><path d="M5 12 L10.5 6.5" stroke="#e0e0e0" stroke-width="1.6"/><circle cx="10.4" cy="6.6" r="1.6" fill="#e0e0e0"/></svg>
<svg style="left:786px;top:181px;" width="14" height="18" viewBox="0 0 14 18"><circle cx="7" cy="9" r="6" fill="#d8d8d8"/><path d="M0 -1.6 L5.6 -2.6 L2.6 1Z" fill="#444" transform="translate(7,9) rotate(0)"/><path d="M0 -1.6 L5.6 -2.6 L2.6 1Z" fill="#444" transform="translate(7,9) rotate(60)"/><path d="M0 -1.6 L5.6 -2.6 L2.6 1Z" fill="#444" transform="translate(7,9) rotate(120)"/><path d="M0 -1.6 L5.6 -2.6 L2.6 1Z" fill="#444" transform="translate(7,9) rotate(180)"/><path d="M0 -1.6 L5.6 -2.6 L2.6 1Z" fill="#444" transform="translate(7,9) rotate(240)"/><path d="M0 -1.6 L5.6 -2.6 L2.6 1Z" fill="#444" transform="translate(7,9) rotate(300)"/></svg>
<div style="left:804px;top:182px;width:38px;height:14.5px;background:#2b2b2b;border-radius:2px;"></div>
<div class="t" style="left:808.5px;top:179.5px;height:20px;line-height:20px;font-size:11.5px;color:#d6d6d6;letter-spacing:-0.096px;">0.00</div>
<svg style="left:849px;top:181px;" width="10.5" height="18" viewBox="0 0 10.5 18"><rect x="3.5" y="3" width="7" height="12" fill="#d8d8d8"/><path d="M3.5 5.5 A3.5 3.5 0 0 0 3.5 12.5Z" fill="#d8d8d8"/><circle cx="3.8" cy="9" r="2.2" fill="#444"/></svg>
<div style="left:865px;top:182px;width:38px;height:14.5px;background:#2b2b2b;border-radius:2px;"></div>
<div class="t" style="left:870.5px;top:179.5px;height:20px;line-height:20px;font-size:11.5px;color:#d6d6d6;letter-spacing:-0.346px;">1.00</div>
<div style="left:906px;top:181px;width:18px;height:18px;background:#5285a6;"></div>
<svg style="left:906px;top:181px;" width="18" height="18" viewBox="0 0 18 18"><circle cx="9" cy="9" r="6.6" fill="#41b6c8" stroke="#224452" stroke-width="1"/><text x="9" y="11.3" font-family="Liberation Sans" font-weight="bold" font-size="6" text-anchor="middle" fill="#1c3a48">ON</text></svg>
<div style="left:927px;top:181px;width:177.5px;height:17.5px;background:#5d5d5d;border-radius:2px 0 0 2px;"></div>
<div style="left:1105.5px;top:181px;width:19.5px;height:17.5px;background:#5d5d5d;border-radius:0 2px 2px 0;"></div>
<div class="t" style="left:930px;top:180.5px;height:20px;line-height:20px;font-size:11.5px;color:#c8c8c8;letter-spacing:-0.633px;">ACES 1.0 SDR-video (sRGB)</div>
<svg style="left:1110px;top:187px;" width="11" height="7" viewBox="0 0 11 7"><path d="M0.5 0.5 H10.5 L5.5 6.5Z" fill="#d0d0d0"/></svg>
<div style="left:50px;top:201px;width:2025px;height:1073px;background:#000;border:1px solid #05451d;"></div>
<svg style="left:51px;top:202px;" width="2023" height="1071" viewBox="0 0 2023 1071"><path d="M0 570 L911 289 L2023 481 V1071 H0Z" fill="#757575"/></svg>
<div style="left:976.3px;top:570.3px;width:252.6px;height:252.4px;border-radius:50%;background:linear-gradient(to bottom,rgba(0,0,0,0.000) 0.0%,rgba(0,0,0,0.052) 1.5%,rgba(0,0,0,0.132) 3.5%,rgba(0,0,0,0.224) 7.5%,rgba(0,0,0,0.284) 12.5%,rgba(0,0,0,0.328) 20.0%,rgba(0,0,0,0.344) 27.5%,rgba(0,0,0,0.357) 35.0%,rgba(0,0,0,0.367) 42.5%,rgba(0,0,0,0.375) 50.0%,rgba(0,0,0,0.388) 57.5%,rgba(0,0,0,0.401) 65.0%,rgba(0,0,0,0.433) 72.5%,rgba(0,0,0,0.486) 80.0%,rgba(0,0,0,0.527) 85.0%,rgba(0,0,0,0.576) 90.0%,rgba(0,0,0,0.623) 93.5%,rgba(0,0,0,0.702) 96.0%,rgba(0,0,0,0.785) 98.0%,rgba(0,0,0,0.855) 99.2%,rgba(0,0,0,0.924) 100.0%),radial-gradient(circle closest-side,rgb(230,230,230) 0.0%,rgb(229,229,229) 20.0%,rgb(227,227,227) 35.0%,rgb(222,222,222) 50.0%,rgb(218,218,218) 60.0%,rgb(208,208,208) 70.0%,rgb(194,194,194) 80.0%,rgb(181,181,181) 86.0%,rgb(169,169,169) 90.0%,rgb(154,154,154) 94.0%,rgb(138,138,138) 97.0%,rgb(127,127,127) 98.5%,rgb(93,93,93) 100.0%);"></div>
<svg style="left:60px;top:1224.5px;" width="34" height="34" viewBox="0 0 34 34"><path d="M15.5 23.5 V11.5" stroke="#00f000" stroke-width="1.2"/><path d="M15.5 23.5 L21.4 28.4" stroke="#f01010" stroke-width="1.2"/><path d="M15.5 23.5 L3.6 27" stroke="#1010f0" stroke-width="1.2"/><text x="13" y="7.8" font-size="9.5" font-weight="bold" fill="#00f000" font-family="Liberation Sans">y</text><text x="20.6" y="29.2" font-size="9.5" font-weight="bold" fill="#f01010" font-family="Liberation Sans">x</text><text x="-0.8" y="25.4" font-size="9.5" font-weight="bold" fill="#1010f0" font-family="Liberation Sans">z</text></svg>
<div class="t" style="left:1870px;top:1232px;height:20px;line-height:20px;font-size:10px;color:#f0f0f0;letter-spacing:0.109px;font-weight:bold;">Frame:</div>
<div class="t" style="left:1985px;top:1232px;height:20px;line-height:20px;font-size:10px;color:#f0f0f0;font-weight:bold;">0</div>
<div class="t" style="left:2014px;top:1251.5px;height:20px;line-height:20px;font-size:12.5px;color:#f4f4f4;letter-spacing:-0.300px;font-weight:bold;">0.1 fps</div>
<div style="left:2078.8px;top:158px;width:2.2px;height:1118px;background:#383838;"></div>
<div class="t" style="left:2092.5px;top:165px;height:20px;line-height:20px;font-size:11.5px;color:#c8c8c8;letter-spacing:-0.474px;">List</div>
<div class="t" style="left:2124.5px;top:165px;height:20px;line-height:20px;font-size:11.5px;color:#c8c8c8;letter-spacing:-0.344px;">Selected</div>
<div class="t" style="left:2182.5px;top:165px;height:20px;line-height:20px;font-size:11.5px;color:#c8c8c8;letter-spacing:-0.463px;">Focus</div>
<div class="t" style="left:2227.5px;top:165px;height:20px;line-height:20px;font-size:11.5px;color:#c8c8c8;letter-spacing:0.142px;">Attributes</div>
<div class="t" style="left:2293.5px;top:165px;height:20px;line-height:20px;font-size:11.5px;color:#c8c8c8;letter-spacing:-0.172px;">Display</div>
<div class="t" style="left:2345.5px;top:165px;height:20px;line-height:20px;font-size:11.5px;color:#c8c8c8;letter-spacing:-0.192px;">Show</div>
<div class="t" style="left:2389.5px;top:165px;height:20px;line-height:20px;font-size:11.5px;color:#c8c8c8;letter-spacing:-0.288px;">Help</div>
<svg style="left:2520px;top:168px;" width="14" height="14" viewBox="0 0 14 14"><path d="M8 1 L13 6 L11.5 7 L9.5 6.5 L7.5 9.5 L7 11 L3 7 L4.5 6.5 L7.5 4.5 L7 2.5Z" fill="#bdbdbd"/><path d="M5 9 L1 13" stroke="#bdbdbd" stroke-width="1.4"/></svg>
<div style="left:2085px;top:1248.5px;width:147px;height:25px;background:#4f4f4f;"></div>
<div style="left:2235px;top:1248.5px;width:155px;height:25px;background:#5d5d5d;"></div>
<div style="left:2393px;top:1248.5px;width:149px;height:25px;background:#4f4f4f;"></div>
<div class="t" style="left:2158px;top:1251.5px;height:20px;line-height:20px;font-size:11.5px;color:#7d7d7d;transform:translateX(-50%);">Select</div>
<div class="t" style="left:2312px;top:1251.5px;height:20px;line-height:20px;font-size:11.5px;color:#dedede;transform:translateX(-50%);">Load Attributes</div>
<div class="t" style="left:2466px;top:1251.5px;height:20px;line-height:20px;font-size:11.5px;color:#7d7d7d;transform:translateX(-50%);">Copy Tab</div>
<div style="left:2543px;top:158px;width:17px;height:1118px;background:#373737;"></div>
<div style="left:2544px;top:160px;width:16px;height:156px;background:#3a3a3a;border:1px solid #484848;border-right:none;border-radius:4px 0 0 4px;"></div>
<div style="left:2543px;top:317px;width:17px;height:101px;background:#444;border-radius:4px 0 0 4px;"></div>
<div style="left:2544px;top:420px;width:16px;height:112px;background:#3a3a3a;border:1px solid #484848;border-right:none;border-radius:4px 0 0 4px;"></div>
<div class="t" style="-webkit-text-stroke:0;left:2551px;top:170px;height:16px;line-height:16px;font-size:11.5px;color:#b4b4b4;letter-spacing:-0.132px;transform-origin:0 0;transform:rotate(90deg) translateY(-50%);">Channel Box / Layer Editor</div>
<div class="t" style="-webkit-text-stroke:0;left:2551px;top:327.5px;height:16px;line-height:16px;font-size:11.5px;color:#d0d0d0;letter-spacing:0.277px;transform-origin:0 0;transform:rotate(90deg) translateY(-50%);">Attribute Editor</div>
<div class="t" style="-webkit-text-stroke:0;left:2551px;top:432.5px;height:16px;line-height:16px;font-size:11.5px;color:#b4b4b4;letter-spacing:0.328px;transform-origin:0 0;transform:rotate(90deg) translateY(-50%);">Modeling Toolkit</div>
<div style="left:0px;top:1277.4px;width:2560px;height:2.8px;background:#383838;"></div>
<div style="left:0px;top:1322.8px;width:2560px;height:2.8px;background:#383838;"></div>
<div style="left:0px;top:1359.6px;width:2560px;height:2.8px;background:#383838;"></div>
<div style="left:3px;top:1282px;width:5px;height:38px;background-image:linear-gradient(transparent 1px,#444 1px),linear-gradient(90deg,#868686 1px,transparent 1px);background-size:3px 3px;"></div>
<div style="left:3px;top:1327px;width:5px;height:30px;background-image:linear-gradient(transparent 1px,#444 1px),linear-gradient(90deg,#868686 1px,transparent 1px);background-size:3px 3px;"></div>
<div style="left:3px;top:1363px;width:5px;height:22px;background-image:linear-gradient(transparent 1px,#444 1px),linear-gradient(90deg,#868686 1px,transparent 1px);background-size:3px 3px;"></div>
<div style="left:13px;top:1284.2px;width:2252px;height:34.8px;background:#2b2b2b;"></div>
<div style="left:25px;top:1285px;width:20px;height:34px;background:#585528;"></div>
<div style="left:23px;top:1298px;width:2px;height:21px;background:#8b8a2e;"></div>
<div style="left:45px;top:1298px;width:2px;height:21px;background:#8b8a2e;"></div>
<div style="left:67px;top:1298px;width:2px;height:21px;background:#8b8a2e;"></div>
<div style="left:89px;top:1298px;width:2px;height:21px;background:#8b8a2e;"></div>
<div style="left:111px;top:1298px;width:2px;height:21px;background:#8b8a2e;"></div>
<div style="left:133px;top:1298px;width:2px;height:21px;background:#8b8a2e;"></div>
<div style="left:155px;top:1298px;width:2px;height:21px;background:#8b8a2e;"></div>
<div style="left:178px;top:1298px;width:2px;height:21px;background:#8b8a2e;"></div>
<div style="left:200px;top:1298px;width:2px;height:21px;background:#8b8a2e;"></div>
<div style="left:222px;top:1298px;width:2px;height:21px;background:#8b8a2e;"></div>
<div style="left:244px;top:1298px;width:2px;height:21px;background:#8b8a2e;"></div>
<div style="left:266px;top:1298px;width:2px;height:21px;background:#8b8a2e;"></div>
<div style="left:288px;top:1298px;width:2px;height:21px;background:#8b8a2e;"></div>
<div style="left:310px;top:1298px;width:2px;height:21px;background:#8b8a2e;"></div>
<div style="left:332px;top:1298px;width:2px;height:21px;background:#8b8a2e;"></div>
<div style="left:354px;top:1298px;width:2px;height:21px;background:#8b8a2e;"></div>
<div style="left:376px;top:1298px;width:2px;height:21px;background:#8b8a2e;"></div>
<div style="left:398px;top:1298px;width:2px;height:21px;background:#8b8a2e;"></div>
<div style="left:420px;top:1298px;width:2px;height:21px;background:#8b8a2e;"></div>
<div style="left:443px;top:1298px;width:2px;height:21px;background:#8b8a2e;"></div>
<div style="left:465px;top:1298px;width:2px;height:21px;background:#8b8a2e;"></div>
<div style="left:487px;top:1298px;width:2px;height:21px;background:#8b8a2e;"></div>
<div style="left:509px;top:1298px;width:2px;height:21px;background:#8b8a2e;"></div>
<div style="left:531px;top:1298px;width:2px;height:21px;background:#8b8a2e;"></div>
<div style="left:553px;top:1298px;width:2px;height:21px;background:#8b8a2e;"></div>
<div style="left:575px;top:1298px;width:2px;height:21px;background:#8b8a2e;"></div>
<div style="left:597px;top:1298px;width:2px;height:21px;background:#8b8a2e;"></div>
<div style="left:619px;top:1298px;width:2px;height:21px;background:#8b8a2e;"></div>
<div style="left:641px;top:1298px;width:2px;height:21px;background:#8b8a2e;"></div>
<div style="left:663px;top:1298px;width:2px;height:21px;background:#8b8a2e;"></div>
<div style="left:685px;top:1298px;width:2px;height:21px;background:#8b8a2e;"></div>
<div style="left:708px;top:1298px;width:2px;height:21px;background:#8b8a2e;"></div>
<div style="left:730px;top:1298px;width:2px;height:21px;background:#8b8a2e;"></div>
<div style="left:752px;top:1298px;width:2px;height:21px;background:#8b8a2e;"></div>
<div style="left:774px;top:1298px;width:2px;height:21px;background:#8b8a2e;"></div>
<div style="left:796px;top:1298px;width:2px;height:21px;background:#8b8a2e;"></div>
<div style="left:818px;top:1298px;width:2px;height:21px;background:#8b8a2e;"></div>
<div style="left:840px;top:1298px;width:2px;height:21px;background:#8b8a2e;"></div>
<div style="left:862px;top:1298px;width:2px;height:21px;background:#8b8a2e;"></div>
<div style="left:884px;top:1298px;width:2px;height:21px;background:#8b8a2e;"></div>
<div style="left:906px;top:1298px;width:2px;height:21px;background:#8b8a2e;"></div>
<div style="left:928px;top:1298px;width:2px;height:21px;background:#8b8a2e;"></div>
<div style="left:950px;top:1298px;width:2px;height:21px;background:#8b8a2e;"></div>
<div style="left:973px;top:1298px;width:2px;height:21px;background:#8b8a2e;"></div>
<div style="left:995px;top:1298px;width:2px;height:21px;background:#8b8a2e;"></div>
<div style="left:1017px;top:1298px;width:2px;height:21px;background:#8b8a2e;"></div>
<div style="left:1039px;top:1298px;width:2px;height:21px;background:#8b8a2e;"></div>
<div style="left:1061px;top:1298px;width:2px;height:21px;background:#8b8a2e;"></div>
<div style="left:1083px;top:1298px;width:2px;height:21px;background:#8b8a2e;"></div>
<div style="left:1105px;top:1298px;width:2px;height:21px;background:#8b8a2e;"></div>
<div style="left:1127px;top:1298px;width:2px;height:21px;background:#8b8a2e;"></div>
<div style="left:1149px;top:1298px;width:2px;height:21px;background:#8b8a2e;"></div>
<div style="left:1171px;top:1298px;width:2px;height:21px;background:#8b8a2e;"></div>
<div style="left:1193px;top:1298px;width:2px;height:21px;background:#8b8a2e;"></div>
<div style="left:1215px;top:1298px;width:2px;height:21px;background:#8b8a2e;"></div>
<div style="left:1238px;top:1298px;width:2px;height:21px;background:#8b8a2e;"></div>
<div style="left:1260px;top:1298px;width:2px;height:21px;background:#8b8a2e;"></div>
<div style="left:1282px;top:1298px;width:2px;height:21px;background:#8b8a2e;"></div>
<div style="left:1304px;top:1298px;width:2px;height:21px;background:#8b8a2e;"></div>
<div style="left:1326px;top:1298px;width:2px;height:21px;background:#8b8a2e;"></div>
<div style="left:1348px;top:1298px;width:2px;height:21px;background:#8b8a2e;"></div>
<div style="left:1370px;top:1298px;width:2px;height:21px;background:#8b8a2e;"></div>
<div style="left:1392px;top:1298px;width:2px;height:21px;background:#8b8a2e;"></div>
<div style="left:1414px;top:1298px;width:2px;height:21px;background:#8b8a2e;"></div>
<div style="left:1436px;top:1298px;width:2px;height:21px;background:#8b8a2e;"></div>
<div style="left:1458px;top:1298px;width:2px;height:21px;background:#8b8a2e;"></div>
<div style="left:1480px;top:1298px;width:2px;height:21px;background:#8b8a2e;"></div>
<div style="left:1503px;top:1298px;width:2px;height:21px;background:#8b8a2e;"></div>
<div style="left:1525px;top:1298px;width:2px;height:21px;background:#8b8a2e;"></div>
<div style="left:1547px;top:1298px;width:2px;height:21px;background:#8b8a2e;"></div>
<div style="left:1569px;top:1298px;width:2px;height:21px;background:#8b8a2e;"></div>
<div style="left:1591px;top:1298px;width:2px;height:21px;background:#8b8a2e;"></div>
<div style="left:1613px;top:1298px;width:2px;height:21px;background:#8b8a2e;"></div>
<div style="left:1635px;top:1298px;width:2px;height:21px;background:#8b8a2e;"></div>
<div style="left:1657px;top:1298px;width:2px;height:21px;background:#8b8a2e;"></div>
<div style="left:1679px;top:1298px;width:2px;height:21px;background:#8b8a2e;"></div>
<div style="left:1701px;top:1298px;width:2px;height:21px;background:#8b8a2e;"></div>
<div style="left:1723px;top:1298px;width:2px;height:21px;background:#8b8a2e;"></div>
<div style="left:1745px;top:1298px;width:2px;height:21px;background:#8b8a2e;"></div>
<div style="left:1768px;top:1298px;width:2px;height:21px;background:#8b8a2e;"></div>
<div style="left:1790px;top:1298px;width:2px;height:21px;background:#8b8a2e;"></div>
<div style="left:1812px;top:1298px;width:2px;height:21px;background:#8b8a2e;"></div>
<div style="left:1834px;top:1298px;width:2px;height:21px;background:#8b8a2e;"></div>
<div style="left:1856px;top:1298px;width:2px;height:21px;background:#8b8a2e;"></div>
<div style="left:1878px;top:1298px;width:2px;height:21px;background:#8b8a2e;"></div>
<div style="left:1900px;top:1298px;width:2px;height:21px;background:#8b8a2e;"></div>
<div style="left:1922px;top:1298px;width:2px;height:21px;background:#8b8a2e;"></div>
<div style="left:1944px;top:1298px;width:2px;height:21px;background:#8b8a2e;"></div>
<div style="left:1966px;top:1298px;width:2px;height:21px;background:#8b8a2e;"></div>
<div style="left:1988px;top:1298px;width:2px;height:21px;background:#8b8a2e;"></div>
<div style="left:2010px;top:1298px;width:2px;height:21px;background:#8b8a2e;"></div>
<div style="left:2033px;top:1298px;width:2px;height:21px;background:#8b8a2e;"></div>
<div style="left:2055px;top:1298px;width:2px;height:21px;background:#8b8a2e;"></div>
<div style="left:2077px;top:1298px;width:2px;height:21px;background:#8b8a2e;"></div>
<div style="left:2099px;top:1298px;width:2px;height:21px;background:#8b8a2e;"></div>
<div style="left:2121px;top:1298px;width:2px;height:21px;background:#8b8a2e;"></div>
<div style="left:2143px;top:1298px;width:2px;height:21px;background:#8b8a2e;"></div>
<div style="left:2165px;top:1298px;width:2px;height:21px;background:#8b8a2e;"></div>
<div style="left:2187px;top:1298px;width:2px;height:21px;background:#8b8a2e;"></div>
<div style="left:2209px;top:1298px;width:2px;height:21px;background:#8b8a2e;"></div>
<div style="left:2231px;top:1298px;width:2px;height:21px;background:#8b8a2e;"></div>
<div class="t" style="left:28.4px;top:1284.2px;height:12px;line-height:12px;font-size:10.5px;color:#7a7830;-webkit-text-stroke:0;">0</div>
<div class="t" style="left:50.483px;top:1284.2px;height:12px;line-height:12px;font-size:10.5px;color:#8b8a2e;-webkit-text-stroke:0;">1</div>
<div class="t" style="left:72.566px;top:1284.2px;height:12px;line-height:12px;font-size:10.5px;color:#8b8a2e;-webkit-text-stroke:0;">2</div>
<div class="t" style="left:94.649px;top:1284.2px;height:12px;line-height:12px;font-size:10.5px;color:#8b8a2e;-webkit-text-stroke:0;">3</div>
<div class="t" style="left:116.732px;top:1284.2px;height:12px;line-height:12px;font-size:10.5px;color:#8b8a2e;-webkit-text-stroke:0;">4</div>
<div class="t" style="left:138.815px;top:1284.2px;height:12px;line-height:12px;font-size:10.5px;color:#8b8a2e;-webkit-text-stroke:0;">5</div>
<div class="t" style="left:160.898px;top:1284.2px;height:12px;line-height:12px;font-size:10.5px;color:#8b8a2e;-webkit-text-stroke:0;">6</div>
<div class="t" style="left:182.981px;top:1284.2px;height:12px;line-height:12px;font-size:10.5px;color:#8b8a2e;-webkit-text-stroke:0;">7</div>
<div class="t" style="left:205.064px;top:1284.2px;height:12px;line-height:12px;font-size:10.5px;color:#8b8a2e;-webkit-text-stroke:0;">8</div>
<div class="t" style="left:227.147px;top:1284.2px;height:12px;line-height:12px;font-size:10.5px;color:#8b8a2e;-webkit-text-stroke:0;">9</div>
<div class="t" style="left:249.63px;top:1284.2px;height:12px;line-height:12px;font-size:10.5px;color:#8b8a2e;-webkit-text-stroke:0;">10</div>
<div class="t" style="left:271.713px;top:1284.2px;height:12px;line-height:12px;font-size:10.5px;color:#8b8a2e;-webkit-text-stroke:0;">11</div>
<div class="t" style="left:293.796px;top:1284.2px;height:12px;line-height:12px;font-size:10.5px;color:#8b8a2e;-webkit-text-stroke:0;">12</div>
<div class="t" style="left:315.879px;top:1284.2px;height:12px;line-height:12px;font-size:10.5px;color:#8b8a2e;-webkit-text-stroke:0;">13</div>
<div class="t" style="left:337.962px;top:1284.2px;height:12px;line-height:12px;font-size:10.5px;color:#8b8a2e;-webkit-text-stroke:0;">14</div>
<div class="t" style="left:360.045px;top:1284.2px;height:12px;line-height:12px;font-size:10.5px;color:#8b8a2e;-webkit-text-stroke:0;">15</div>
<div class="t" style="left:382.128px;top:1284.2px;height:12px;line-height:12px;font-size:10.5px;color:#8b8a2e;-webkit-text-stroke:0;">16</div>
<div class="t" style="left:404.211px;top:1284.2px;height:12px;line-height:12px;font-size:10.5px;color:#8b8a2e;-webkit-text-stroke:0;">17</div>
<div class="t" style="left:426.294px;top:1284.2px;height:12px;line-height:12px;font-size:10.5px;color:#8b8a2e;-webkit-text-stroke:0;">18</div>
<div class="t" style="left:448.377px;top:1284.2px;height:12px;line-height:12px;font-size:10.5px;color:#8b8a2e;-webkit-text-stroke:0;">19</div>
<div class="t" style="left:470.46px;top:1284.2px;height:12px;line-height:12px;font-size:10.5px;color:#8b8a2e;-webkit-text-stroke:0;">20</div>
<div class="t" style="left:492.543px;top:1284.2px;height:12px;line-height:12px;font-size:10.5px;color:#8b8a2e;-webkit-text-stroke:0;">21</div>
<div class="t" style="left:514.626px;top:1284.2px;height:12px;line-height:12px;font-size:10.5px;color:#8b8a2e;-webkit-text-stroke:0;">22</div>
<div class="t" style="left:536.709px;top:1284.2px;height:12px;line-height:12px;font-size:10.5px;color:#8b8a2e;-webkit-text-stroke:0;">23</div>
<div class="t" style="left:558.792px;top:1284.2px;height:12px;line-height:12px;font-size:10.5px;color:#8b8a2e;-webkit-text-stroke:0;">24</div>
<div class="t" style="left:580.875px;top:1284.2px;height:12px;line-height:12px;font-size:10.5px;color:#8b8a2e;-webkit-text-stroke:0;">25</div>
<div class="t" style="left:602.958px;top:1284.2px;height:12px;line-height:12px;font-size:10.5px;color:#8b8a2e;-webkit-text-stroke:0;">26</div>
<div class="t" style="left:625.041px;top:1284.2px;height:12px;line-height:12px;font-size:10.5px;color:#8b8a2e;-webkit-text-stroke:0;">27</div>
<div class="t" style="left:647.124px;top:1284.2px;height:12px;line-height:12px;font-size:10.5px;color:#8b8a2e;-webkit-text-stroke:0;">28</div>
<div class="t" style="left:669.207px;top:1284.2px;height:12px;line-height:12px;font-size:10.5px;color:#8b8a2e;-webkit-text-stroke:0;">29</div>
<div class="t" style="left:691.29px;top:1284.2px;height:12px;line-height:12px;font-size:10.5px;color:#8b8a2e;-webkit-text-stroke:0;">30</div>
<div class="t" style="left:713.373px;top:1284.2px;height:12px;line-height:12px;font-size:10.5px;color:#8b8a2e;-webkit-text-stroke:0;">31</div>
<div class="t" style="left:735.456px;top:1284.2px;height:12px;line-height:12px;font-size:10.5px;color:#8b8a2e;-webkit-text-stroke:0;">32</div>
<div class="t" style="left:757.539px;top:1284.2px;height:12px;line-height:12px;font-size:10.5px;color:#8b8a2e;-webkit-text-stroke:0;">33</div>
<div class="t" style="left:779.622px;top:1284.2px;height:12px;line-height:12px;font-size:10.5px;color:#8b8a2e;-webkit-text-stroke:0;">34</div>
<div class="t" style="left:801.705px;top:1284.2px;height:12px;line-height:12px;font-size:10.5px;color:#8b8a2e;-webkit-text-stroke:0;">35</div>
<div class="t" style="left:823.788px;top:1284.2px;height:12px;line-height:12px;font-size:10.5px;color:#8b8a2e;-webkit-text-stroke:0;">36</div>
<div class="t" style="left:845.871px;top:1284.2px;height:12px;line-height:12px;font-size:10.5px;color:#8b8a2e;-webkit-text-stroke:0;">37</div>
<div class="t" style="left:867.954px;top:1284.2px;height:12px;line-height:12px;font-size:10.5px;color:#8b8a2e;-webkit-text-stroke:0;">38</div>
<div class="t" style="left:890.037px;top:1284.2px;height:12px;line-height:12px;font-size:10.5px;color:#8b8a2e;-webkit-text-stroke:0;">39</div>
<div class="t" style="left:912.12px;top:1284.2px;height:12px;line-height:12px;font-size:10.5px;color:#8b8a2e;-webkit-text-stroke:0;">40</div>
<div class="t" style="left:934.203px;top:1284.2px;height:12px;line-height:12px;font-size:10.5px;color:#8b8a2e;-webkit-text-stroke:0;">41</div>
<div class="t" style="left:956.286px;top:1284.2px;height:12px;line-height:12px;font-size:10.5px;color:#8b8a2e;-webkit-text-stroke:0;">42</div>
<div class="t" style="left:978.369px;top:1284.2px;height:12px;line-height:12px;font-size:10.5px;color:#8b8a2e;-webkit-text-stroke:0;">43</div>
<div class="t" style="left:1000.45px;top:1284.2px;height:12px;line-height:12px;font-size:10.5px;color:#8b8a2e;-webkit-text-stroke:0;">44</div>
<div class="t" style="left:1022.53px;top:1284.2px;height:12px;line-height:12px;font-size:10.5px;color:#8b8a2e;-webkit-text-stroke:0;">45</div>
<div class="t" style="left:1044.62px;top:1284.2px;height:12px;line-height:12px;font-size:10.5px;color:#8b8a2e;-webkit-text-stroke:0;">46</div>
<div class="t" style="left:1066.7px;top:1284.2px;height:12px;line-height:12px;font-size:10.5px;color:#8b8a2e;-webkit-text-stroke:0;">47</div>
<div class="t" style="left:1088.78px;top:1284.2px;height:12px;line-height:12px;font-size:10.5px;color:#8b8a2e;-webkit-text-stroke:0;">48</div>
<div class="t" style="left:1110.87px;top:1284.2px;height:12px;line-height:12px;font-size:10.5px;color:#8b8a2e;-webkit-text-stroke:0;">49</div>
<div class="t" style="left:1132.95px;top:1284.2px;height:12px;line-height:12px;font-size:10.5px;color:#8b8a2e;-webkit-text-stroke:0;">50</div>
<div class="t" style="left:1155.03px;top:1284.2px;height:12px;line-height:12px;font-size:10.5px;color:#8b8a2e;-webkit-text-stroke:0;">51</div>
<div class="t" style="left:1177.12px;top:1284.2px;height:12px;line-height:12px;font-size:10.5px;color:#8b8a2e;-webkit-text-stroke:0;">52</div>
<div class="t" style="left:1199.2px;top:1284.2px;height:12px;line-height:12px;font-size:10.5px;color:#8b8a2e;-webkit-text-stroke:0;">53</div>
<div class="t" style="left:1221.28px;top:1284.2px;height:12px;line-height:12px;font-size:10.5px;color:#8b8a2e;-webkit-text-stroke:0;">54</div>
<div class="t" style="left:1243.36px;top:1284.2px;height:12px;line-height:12px;font-size:10.5px;color:#8b8a2e;-webkit-text-stroke:0;">55</div>
<div class="t" style="left:1265.45px;top:1284.2px;height:12px;line-height:12px;font-size:10.5px;color:#8b8a2e;-webkit-text-stroke:0;">56</div>
<div class="t" style="left:1287.53px;top:1284.2px;height:12px;line-height:12px;font-size:10.5px;color:#8b8a2e;-webkit-text-stroke:0;">57</div>
<div class="t" style="left:1309.61px;top:1284.2px;height:12px;line-height:12px;font-size:10.5px;color:#8b8a2e;-webkit-text-stroke:0;">58</div>
<div class="t" style="left:1331.7px;top:1284.2px;height:12px;line-height:12px;font-size:10.5px;color:#8b8a2e;-webkit-text-stroke:0;">59</div>
<div class="t" style="left:1353.78px;top:1284.2px;height:12px;line-height:12px;font-size:10.5px;color:#8b8a2e;-webkit-text-stroke:0;">60</div>
<div class="t" style="left:1375.86px;top:1284.2px;height:12px;line-height:12px;font-size:10.5px;color:#8b8a2e;-webkit-text-stroke:0;">61</div>
<div class="t" style="left:1397.95px;top:1284.2px;height:12px;line-height:12px;font-size:10.5px;color:#8b8a2e;-webkit-text-stroke:0;">62</div>
<div class="t" style="left:1420.03px;top:1284.2px;height:12px;line-height:12px;font-size:10.5px;color:#8b8a2e;-webkit-text-stroke:0;">63</div>
<div class="t" style="left:1442.11px;top:1284.2px;height:12px;line-height:12px;font-size:10.5px;color:#8b8a2e;-webkit-text-stroke:0;">64</div>
<div class="t" style="left:1464.19px;top:1284.2px;height:12px;line-height:12px;font-size:10.5px;color:#8b8a2e;-webkit-text-stroke:0;">65</div>
<div class="t" style="left:1486.28px;top:1284.2px;height:12px;line-height:12px;font-size:10.5px;color:#8b8a2e;-webkit-text-stroke:0;">66</div>
<div class="t" style="left:1508.36px;top:1284.2px;height:12px;line-height:12px;font-size:10.5px;color:#8b8a2e;-webkit-text-stroke:0;">67</div>
<div class="t" style="left:1530.44px;top:1284.2px;height:12px;line-height:12px;font-size:10.5px;color:#8b8a2e;-webkit-text-stroke:0;">68</div>
<div class="t" style="left:1552.53px;top:1284.2px;height:12px;line-height:12px;font-size:10.5px;color:#8b8a2e;-webkit-text-stroke:0;">69</div>
<div class="t" style="left:1574.61px;top:1284.2px;height:12px;line-height:12px;font-size:10.5px;color:#8b8a2e;-webkit-text-stroke:0;">70</div>
<div class="t" style="left:1596.69px;top:1284.2px;height:12px;line-height:12px;font-size:10.5px;color:#8b8a2e;-webkit-text-stroke:0;">71</div>
<div class="t" style="left:1618.78px;top:1284.2px;height:12px;line-height:12px;font-size:10.5px;color:#8b8a2e;-webkit-text-stroke:0;">72</div>
<div class="t" style="left:1640.86px;top:1284.2px;height:12px;line-height:12px;font-size:10.5px;color:#8b8a2e;-webkit-text-stroke:0;">73</div>
<div class="t" style="left:1662.94px;top:1284.2px;height:12px;line-height:12px;font-size:10.5px;color:#8b8a2e;-webkit-text-stroke:0;">74</div>
<div class="t" style="left:1685.02px;top:1284.2px;height:12px;line-height:12px;font-size:10.5px;color:#8b8a2e;-webkit-text-stroke:0;">75</div>
<div class="t" style="left:1707.11px;top:1284.2px;height:12px;line-height:12px;font-size:10.5px;color:#8b8a2e;-webkit-text-stroke:0;">76</div>
<div class="t" style="left:1729.19px;top:1284.2px;height:12px;line-height:12px;font-size:10.5px;color:#8b8a2e;-webkit-text-stroke:0;">77</div>
<div class="t" style="left:1751.27px;top:1284.2px;height:12px;line-height:12px;font-size:10.5px;color:#8b8a2e;-webkit-text-stroke:0;">78</div>
<div class="t" style="left:1773.36px;top:1284.2px;height:12px;line-height:12px;font-size:10.5px;color:#8b8a2e;-webkit-text-stroke:0;">79</div>
<div class="t" style="left:1795.44px;top:1284.2px;height:12px;line-height:12px;font-size:10.5px;color:#8b8a2e;-webkit-text-stroke:0;">80</div>
<div class="t" style="left:1817.52px;top:1284.2px;height:12px;line-height:12px;font-size:10.5px;color:#8b8a2e;-webkit-text-stroke:0;">81</div>
<div class="t" style="left:1839.61px;top:1284.2px;height:12px;line-height:12px;font-size:10.5px;color:#8b8a2e;-webkit-text-stroke:0;">82</div>
<div class="t" style="left:1861.69px;top:1284.2px;height:12px;line-height:12px;font-size:10.5px;color:#8b8a2e;-webkit-text-stroke:0;">83</div>
<div class="t" style="left:1883.77px;top:1284.2px;height:12px;line-height:12px;font-size:10.5px;color:#8b8a2e;-webkit-text-stroke:0;">84</div>
<div class="t" style="left:1905.85px;top:1284.2px;height:12px;line-height:12px;font-size:10.5px;color:#8b8a2e;-webkit-text-stroke:0;">85</div>
<div class="t" style="left:1927.94px;top:1284.2px;height:12px;line-height:12px;font-size:10.5px;color:#8b8a2e;-webkit-text-stroke:0;">86</div>
<div class="t" style="left:1950.02px;top:1284.2px;height:12px;line-height:12px;font-size:10.5px;color:#8b8a2e;-webkit-text-stroke:0;">87</div>
<div class="t" style="left:1972.1px;top:1284.2px;height:12px;line-height:12px;font-size:10.5px;color:#8b8a2e;-webkit-text-stroke:0;">88</div>
<div class="t" style="left:1994.19px;top:1284.2px;height:12px;line-height:12px;font-size:10.5px;color:#8b8a2e;-webkit-text-stroke:0;">89</div>
<div class="t" style="left:2016.27px;top:1284.2px;height:12px;line-height:12px;font-size:10.5px;color:#8b8a2e;-webkit-text-stroke:0;">90</div>
<div class="t" style="left:2038.35px;top:1284.2px;height:12px;line-height:12px;font-size:10.5px;color:#8b8a2e;-webkit-text-stroke:0;">91</div>
<div class="t" style="left:2060.44px;top:1284.2px;height:12px;line-height:12px;font-size:10.5px;color:#8b8a2e;-webkit-text-stroke:0;">92</div>
<div class="t" style="left:2082.52px;top:1284.2px;height:12px;line-height:12px;font-size:10.5px;color:#8b8a2e;-webkit-text-stroke:0;">93</div>
<div class="t" style="left:2104.6px;top:1284.2px;height:12px;line-height:12px;font-size:10.5px;color:#8b8a2e;-webkit-text-stroke:0;">94</div>
<div class="t" style="left:2126.68px;top:1284.2px;height:12px;line-height:12px;font-size:10.5px;color:#8b8a2e;-webkit-text-stroke:0;">95</div>
<div class="t" style="left:2148.77px;top:1284.2px;height:12px;line-height:12px;font-size:10.5px;color:#8b8a2e;-webkit-text-stroke:0;">96</div>
<div class="t" style="left:2170.85px;top:1284.2px;height:12px;line-height:12px;font-size:10.5px;color:#8b8a2e;-webkit-text-stroke:0;">97</div>
<div class="t" style="left:2192.93px;top:1284.2px;height:12px;line-height:12px;font-size:10.5px;color:#8b8a2e;-webkit-text-stroke:0;">98</div>
<div class="t" style="left:2215.02px;top:1284.2px;height:12px;line-height:12px;font-size:10.5px;color:#8b8a2e;-webkit-text-stroke:0;">99</div>
<div class="t" style="left:2237.1px;top:1284.2px;height:12px;line-height:12px;font-size:10.5px;color:#8b8a2e;-webkit-text-stroke:0;">100</div>
<div class="t" style="left:28.2px;top:1305px;height:12px;line-height:12px;font-size:10.5px;color:#f0f0f0;">0</div>
<div style="left:2272.5px;top:1290px;width:87.5px;height:18px;background:#2b2b2b;border-radius:2px;"></div>
<div class="t" style="left:2277.5px;top:1289.5px;height:20px;line-height:20px;font-size:10.5px;color:#e0e0e0;">0</div>
<svg style="left:2367.5px;top:1287.6px;" width="20" height="20" viewBox="0 0 20 20"><rect x="1.2" y="3.6" width="2" height="12.8" fill="#cfcfcf"/><path d="M10.4 3.4 V16.6 L3.8 10Z M17.6 3.4 V16.6 L11 10Z" fill="#cfcfcf"/></svg>
<svg style="left:2391.5px;top:1287.6px;" width="20" height="20" viewBox="0 0 20 20"><rect x="3.2" y="3.6" width="2" height="12.8" fill="#cfcfcf"/><path d="M15 3.4 V16.6 L6.6 10Z" fill="#cfcfcf"/></svg>
<svg style="left:2414px;top:1287.6px;" width="20" height="20" viewBox="0 0 20 20"><rect x="3.6" y="3.6" width="2.8" height="13.4" fill="#e0703c"/><rect x="4.5" y="1.4" width="1" height="17.6" fill="#8a8a8a"/><rect x="3.6" y="3.6" width="2.8" height="13.4" fill="#e0703c"/><path d="M16.4 3.4 V16.6 L8.2 10Z" fill="#cfcfcf"/></svg>
<svg style="left:2436.5px;top:1287.6px;" width="20" height="20" viewBox="0 0 20 20"><path d="M16.4 2.2 V17.8 L3.6 10Z" fill="#cfcfcf"/></svg>
<svg style="left:2460px;top:1287.6px;" width="20" height="20" viewBox="0 0 20 20"><path d="M3.6 2.2 V17.8 L16.4 10Z" fill="#cfcfcf"/></svg>
<svg style="left:2483.5px;top:1287.6px;" width="20" height="20" viewBox="0 0 20 20"><rect x="14.5" y="1.4" width="1" height="17.6" fill="#8a8a8a"/><rect x="13.6" y="3.6" width="2.8" height="13.4" fill="#e0703c"/><path d="M3.6 3.4 V16.6 L11.8 10Z" fill="#cfcfcf"/></svg>
<svg style="left:2505.5px;top:1287.6px;" width="20" height="20" viewBox="0 0 20 20"><rect x="14.8" y="3.6" width="2" height="12.8" fill="#cfcfcf"/><path d="M5 3.4 V16.6 L13.4 10Z" fill="#cfcfcf"/></svg>
<svg style="left:2529px;top:1287.6px;" width="20" height="20" viewBox="0 0 20 20"><rect x="16.8" y="3.6" width="2" height="12.8" fill="#cfcfcf"/><path d="M2.4 3.4 V16.6 L9 10Z M9.6 3.4 V16.6 L16.2 10Z" fill="#cfcfcf"/></svg>
<div style="left:14px;top:1330px;width:88px;height:25px;background:#2b2b2b;border-radius:2px;"></div>
<div style="left:110px;top:1330px;width:88px;height:25px;background:#2b2b2b;border-radius:2px;"></div>
<div class="t" style="left:19px;top:1333px;height:20px;line-height:20px;font-size:10.5px;color:#e0e0e0;">0</div>
<div class="t" style="left:115px;top:1333px;height:20px;line-height:20px;font-size:10.5px;color:#e0e0e0;">0</div>
<div style="left:205px;top:1328px;width:1560px;height:29px;background:#484848;"></div>
<div style="left:213px;top:1332px;width:1542px;height:20px;background:#5d5d5d;border-radius:3px;"></div>
<div style="left:217px;top:1335px;width:15px;height:14px;background:#a8a8a8;border-radius:3px;"></div>
<div style="left:1739px;top:1335px;width:15px;height:14px;background:#a8a8a8;border-radius:3px;"></div>
<div class="t" style="left:235.3px;top:1333px;height:20px;line-height:20px;font-size:10.5px;color:#e0e0e0;">0</div>
<div class="t" style="left:1716.5px;top:1333px;height:20px;line-height:20px;font-size:10.5px;color:#e0e0e0;letter-spacing:0.160px;">100</div>
<div style="left:1772.5px;top:1330px;width:87.5px;height:25px;background:#2b2b2b;border-radius:2px;"></div>
<div style="left:1868.5px;top:1330px;width:87.5px;height:25px;background:#2b2b2b;border-radius:2px;"></div>
<div class="t" style="left:1777.5px;top:1333px;height:20px;line-height:20px;font-size:10.5px;color:#e0e0e0;letter-spacing:0.160px;">100</div>
<div class="t" style="left:1873.5px;top:1333px;height:20px;line-height:20px;font-size:10.5px;color:#e0e0e0;letter-spacing:0.160px;">100</div>
<div style="left:1961px;top:1332px;width:1.5px;height:20px;background:#6f6f6f;"></div>
<div style="left:1960px;top:1337.5px;width:3.5px;height:9px;background:#7d7d7d;border-radius:1px;"></div>
<svg style="left:1976px;top:1331px;" width="18" height="20" viewBox="0 0 18 20"><path d="M2.5 3 H12 V18.5 L7.2 14.5 L2.5 18.5Z" fill="#e8783a"/><path d="M12.5 0.5 V8.5 M8.5 4.5 H16.5" stroke="#e8e8e8" stroke-width="2"/></svg>
<div style="left:2005px;top:1332px;width:1.5px;height:20px;background:#6f6f6f;"></div>
<div style="left:2004px;top:1337.5px;width:3.5px;height:9px;background:#7d7d7d;border-radius:1px;"></div>
<svg style="left:2021px;top:1339.5px;" width="9" height="5.5" viewBox="0 0 9 5.5"><path d="M0 0 H9 L4.5 5.5Z" fill="#5c5c5c" stroke="#8a8a8a" stroke-width="1"/></svg>
<svg style="left:2150px;top:1339.5px;" width="9" height="5.5" viewBox="0 0 9 5.5"><path d="M0 0 H9 L4.5 5.5Z" fill="#5c5c5c" stroke="#8a8a8a" stroke-width="1"/></svg>
<div style="left:2037.5px;top:1330px;width:102px;height:25px;background:#3f3f3f;border-radius:4px;border:1px solid #535353;"></div>
<div class="t" style="left:2043.5px;top:1333px;height:20px;line-height:20px;font-size:11.5px;color:#c8c8c8;letter-spacing:-0.240px;">No Character Set</div>
<div style="left:2166.5px;top:1330px;width:101px;height:25px;background:#3f3f3f;border-radius:4px;border:1px solid #535353;"></div>
<div class="t" style="left:2172.5px;top:1333px;height:20px;line-height:20px;font-size:11.5px;color:#c8c8c8;letter-spacing:-0.225px;">No Anim Layer</div>
<div style="left:2278px;top:1332px;width:1.5px;height:20px;background:#6f6f6f;"></div>
<div style="left:2277px;top:1337.5px;width:3.5px;height:9px;background:#7d7d7d;border-radius:1px;"></div>
<div style="left:2291.5px;top:1331.8px;width:74.5px;height:19.4px;background:#5d5d5d;border-radius:3px 0 0 3px;"></div>
<div style="left:2367px;top:1331.8px;width:20px;height:19.4px;background:#5d5d5d;border-radius:0 3px 3px 0;"></div>
<div class="t" style="left:2295.5px;top:1332.5px;height:20px;line-height:20px;font-size:11.5px;color:#c8c8c8;letter-spacing:-0.221px;">30 fps</div>
<svg style="left:2371.5px;top:1338.5px;" width="11" height="7" viewBox="0 0 11 7"><path d="M0.5 0.5 H10.5 L5.5 6.5Z" fill="#d0d0d0"/></svg>
<svg style="left:2399px;top:1331px;" width="20" height="20" viewBox="0 0 20 20"><path d="M9 5.4 H13.2 a4.2 4.2 0 0 1 0 8.4 H8 M11 13.8 H6.8 a4.2 4.2 0 0 1 0 -8.4 H9" fill="none" stroke="#c9c9c9" stroke-width="1.7"/><path d="M9.2 10.8 L4.4 13.8 L9.2 16.8Z" fill="#c9c9c9"/><path d="M10.8 2.4 L15.6 5.4 L10.8 8.4Z" fill="#c9c9c9"/></svg>
<svg style="left:2428px;top:1331px;" width="22" height="20" viewBox="0 0 22 20"><rect x="1.6" y="5.4" width="15.6" height="11.6" fill="none" stroke="#e8783a" stroke-width="1.4"/><path d="M2 7.6 H17 M2 14.8 H17" stroke="#e8783a" stroke-width="1" stroke-dasharray="1.6 1.2"/><rect x="3.4" y="9.4" width="3.2" height="3.8" fill="#c9c9c9"/><rect x="7.8" y="9.4" width="3.2" height="3.8" fill="#c9c9c9"/><rect x="12.2" y="9.4" width="3.2" height="3.8" fill="#c9c9c9"/><path d="M13.4 1.6 L18.6 4.8 L13.4 8Z" fill="#c9c9c9" stroke="#444" stroke-width="0.8"/></svg>
<div style="left:2460px;top:1332px;width:1.5px;height:20px;background:#6f6f6f;"></div>
<div style="left:2459px;top:1337.5px;width:3.5px;height:9px;background:#7d7d7d;border-radius:1px;"></div>
<svg style="left:2473px;top:1333px;" width="20" height="18" viewBox="0 0 20 18"><path d="M1.5 6.5 H5 L10 2.5 V15.5 L5 11.5 H1.5Z" fill="#c9c9c9"/><path d="M12.5 6 A4 4 0 0 1 12.5 12 M14.8 3.8 A7 7 0 0 1 14.8 14.2" fill="none" stroke="#c9c9c9" stroke-width="1.3"/></svg>
<svg style="left:2501px;top:1331px;" width="20" height="20" viewBox="0 0 20 20"><path d="M16.6 8 A7.2 7.2 0 0 0 3.2 7.2 M2.6 12.6 A7.2 7.2 0 0 0 16 13.6" fill="none" stroke="#c9c9c9" stroke-width="1.5"/><path d="M1 4.6 L3.4 8.6 L6.4 5.4Z M18.4 16 L15.8 12.2 L13.2 15.4Z" fill="#c9c9c9"/><path d="M9.6 5.6 V13.8 M5.4 10 H13.8" stroke="#e8783a" stroke-width="1.7"/></svg>
<svg style="left:2529px;top:1331px;" width="22" height="22" viewBox="0 0 22 22"><circle cx="5.2" cy="4.6" r="2.3" fill="none" stroke="#c9c9c9" stroke-width="1.2"/><circle cx="5.2" cy="4.6" r="3.6" fill="none" stroke="#c9c9c9" stroke-width="1.2" stroke-dasharray="1.2 1.63"/><circle cx="15.4" cy="5.6" r="1.9" fill="#e8783a"/><path d="M9.6 10 L13.6 8.6 L15 12.4 L18.6 9.4 M13.6 8.6 L11.6 14 L14.4 16.4 L13.8 20.4 M11.6 14 L8.8 17 L4.8 16.6" fill="none" stroke="#e8783a" stroke-width="1.9"/></svg>
<svg style="left:14px;top:1366px;" width="17" height="17" viewBox="0 0 17 17"><circle cx="8.5" cy="8.5" r="8" fill="#777"/><text x="8.5" y="13" font-family="Liberation Sans" font-weight="bold" font-size="12.5" text-anchor="middle" fill="#444">?</text></svg>
<div style="left:1572px;top:213.7px;width:952px;height:898.3px;background:#3b3b3b;box-shadow:0 1px 10px 1px rgba(0,0,0,0.28),0 4px 20px 2px rgba(0,0,0,0.20);"></div>
<div style="left:1572px;top:213.7px;width:952px;height:30.3px;background:#ffffff;"></div>
<svg style="left:1581px;top:219.5px;" width="16.5" height="17.5" viewBox="0 0 16.5 17.5"><g transform="translate(0,0) scale(0.53)"><path d="M3 3 L8 1 H27 V22 H30 V32 H6 V22 L3 23.5Z" fill="#1a5a7a"/><path d="M1 5 L6 2.5 V22 L1 24.5Z" fill="#7ccde0"/><path d="M6 1.5 a1.5 1.5 0 0 1 1.5-1.5 H26.5 a1.5 1.5 0 0 1 1.5 1.5 V22 H6Z" fill="#2a9fc4"/><path d="M4 23.5 L6 22 H28 V30.5 a1.5 1.5 0 0 1 -1.5 1.5 H5.5 a1.5 1.5 0 0 1 -1.5 -1.5Z" fill="#245f7e"/><text x="17" y="18" font-family="Liberation Sans" font-weight="bold" font-size="17" text-anchor="middle" fill="#eef4f6">M</text><text x="16.5" y="30" font-family="Liberation Sans" font-weight="bold" font-size="6.6" text-anchor="middle" fill="#eef4f6">AYA</text></g></svg>
<div class="t" style="left:1602.4px;top:219px;height:20px;line-height:20px;font-size:13px;color:#000;letter-spacing:-0.750px;-webkit-text-stroke:0;">Hypershade</div>
<svg style="left:2404px;top:222px;" width="14" height="14" viewBox="0 0 14 14"><path d="M1.5 6.5 H11.5" stroke="#111" stroke-width="1.1"/></svg>
<svg style="left:2449px;top:222px;" width="12" height="12" viewBox="0 0 12 12"><rect x="1.5" y="1.5" width="9" height="9" fill="none" stroke="#111" stroke-width="1.1"/></svg>
<svg style="left:2495px;top:222px;" width="12" height="12" viewBox="0 0 12 12"><path d="M1 1 L11 11 M11 1 L1 11" stroke="#111" stroke-width="1.1"/></svg>
<div style="left:1575px;top:246px;width:947px;height:863px;background:#444;border:1px solid #8c8c8c;"></div>
<div class="t" style="left:1584.2px;top:246.2px;height:20px;line-height:20px;font-size:11.5px;color:#c8c8c8;letter-spacing:-0.233px;">File</div>
<div class="t" style="left:1617.2px;top:246.2px;height:20px;line-height:20px;font-size:11.5px;color:#c8c8c8;letter-spacing:-0.054px;">Edit</div>
<div class="t" style="left:1652px;top:246.2px;height:20px;line-height:20px;font-size:11.5px;color:#c8c8c8;letter-spacing:0.020px;">View</div>
<div class="t" style="left:1692.3px;top:246.2px;height:20px;line-height:20px;font-size:11.5px;color:#c8c8c8;letter-spacing:-0.369px;">Create</div>
<div class="t" style="left:1739.8px;top:246.2px;height:20px;line-height:20px;font-size:11.5px;color:#c8c8c8;letter-spacing:-0.423px;">Tabs</div>
<div class="t" style="left:1778.2px;top:246.2px;height:20px;line-height:20px;font-size:11.5px;color:#c8c8c8;letter-spacing:-0.032px;">Graph</div>
<div class="t" style="left:1825px;top:246.2px;height:20px;line-height:20px;font-size:11.5px;color:#c8c8c8;letter-spacing:0.516px;">Window</div>
<div class="t" style="left:1884.2px;top:246.2px;height:20px;line-height:20px;font-size:11.5px;color:#c8c8c8;letter-spacing:-0.222px;">Omniverse</div>
<div class="t" style="left:1953.3px;top:246.2px;height:20px;line-height:20px;font-size:11.5px;color:#c8c8c8;letter-spacing:0.195px;">Options</div>
<div class="t" style="left:2010px;top:246.2px;height:20px;line-height:20px;font-size:11.5px;color:#c8c8c8;letter-spacing:-0.088px;">Help</div>
<div style="left:1581px;top:274.5px;width:139px;height:6px;background-image:linear-gradient(transparent 1px,#444 1px),linear-gradient(90deg,#909090 1px,transparent 1px);background-size:3px 3px;"></div>
<div style="left:1758px;top:274.5px;width:134px;height:6px;background-image:linear-gradient(transparent 1px,#444 1px),linear-gradient(90deg,#909090 1px,transparent 1px);background-size:3px 3px;"></div>
<div class="t" style="left:1724px;top:267.5px;height:20px;line-height:20px;font-size:10px;color:#c8c8c8;letter-spacing:-0.502px;">Create</div>
<div style="left:1897.5px;top:270px;width:13px;height:13.5px;background:#3a3a3a;border:1px solid #2e2e2e;border-radius:3px;"></div>
<svg style="left:1897.5px;top:270px;" width="13" height="13" viewBox="0 0 13 13"><rect x="5" y="3" width="5.5" height="4.5" fill="none" stroke="#c8c8c8" stroke-width="1.2"/><rect x="2.8" y="6" width="5" height="4.2" fill="#3a3a3a" stroke="#c8c8c8" stroke-width="1.2"/></svg>
<div style="left:1912.5px;top:270px;width:13px;height:13.5px;background:#3a3a3a;border:1px solid #2e2e2e;border-radius:3px;"></div>
<svg style="left:1912.5px;top:270px;" width="13" height="13" viewBox="0 0 13 13"><path d="M3.2 3.2 L9.8 9.8 M9.8 3.2 L3.2 9.8" stroke="#c8c8c8" stroke-width="1.8"/></svg>
<div style="left:1927.5px;top:268px;width:1.5px;height:480px;background:#3a3a3a;"></div>
<div style="left:1591px;top:299px;width:143px;height:18px;background:#2b2b2b;border-radius:2px;"></div>
<div style="left:1743px;top:307px;width:145px;height:2.5px;background:#2b2b2b;border-radius:1px;"></div>
<div style="left:1745px;top:302px;width:7px;height:13px;background:#c2c2c2;border-radius:2px;"></div>
<div style="left:1586px;top:327px;width:119px;height:410px;background:#2b2b2b;border:1px solid #3a3a3a;"></div>
<div style="left:1588.3px;top:330.2px;width:115px;height:11.2px;background:#5d5d5d;border-radius:2px;"></div>
<svg style="left:1591px;top:331.3px;" width="6" height="9" viewBox="0 0 6 9"><path d="M0.5 0.5 L5.5 4.5 L0.5 8.5Z" fill="#dcdcdc"/></svg>
<div class="t" style="left:1607.5px;top:328.6px;height:14px;line-height:14px;font-size:11.5px;color:#c8c8c8;">Favorites</div>
<div style="left:1588.3px;top:343.23px;width:115px;height:11.2px;background:#5d5d5d;border-radius:2px;"></div>
<svg style="left:1591px;top:344.33px;" width="6" height="9" viewBox="0 0 6 9"><path d="M0.5 0.5 L5.5 4.5 L0.5 8.5Z" fill="#dcdcdc"/></svg>
<div class="t" style="left:1607.5px;top:341.63px;height:14px;line-height:14px;font-size:11.5px;color:#c8c8c8;">Maya</div>
<div style="left:1588.3px;top:356.26px;width:115px;height:11.2px;background:#5d5d5d;border-radius:2px;"></div>
<svg style="left:1591px;top:357.36px;" width="6" height="9" viewBox="0 0 6 9"><path d="M0.5 0.5 L5.5 4.5 L0.5 8.5Z" fill="#dcdcdc"/></svg>
<div class="t" style="left:1607.5px;top:354.66px;height:14px;line-height:14px;font-size:11.5px;color:#c8c8c8;">Redshift</div>
<div style="left:1588.3px;top:369.29px;width:115px;height:11.2px;background:#5d5d5d;border-radius:2px;"></div>
<svg style="left:1591px;top:370.39px;" width="6" height="9" viewBox="0 0 6 9"><path d="M0.5 0.5 L5.5 4.5 L0.5 8.5Z" fill="#dcdcdc"/></svg>
<div class="t" style="left:1607.5px;top:367.69px;height:14px;line-height:14px;font-size:11.5px;color:#c8c8c8;">MDL Materials</div>
<div style="left:1588.3px;top:381.52px;width:115px;height:12.8px;background:#5285a6;"></div>
<svg style="left:1589.5px;top:384.42px;" width="9" height="7" viewBox="0 0 9 7"><path d="M0.5 0.5 H8.5 L4.5 5.5Z" fill="#e6e6e6"/></svg>
<div class="t" style="left:1607.5px;top:380.32px;height:14px;line-height:14px;font-size:11.5px;color:#f2f2f2;">Arnold</div>
<svg style="left:1599.3px;top:397.55px;" width="8" height="6" viewBox="0 0 8 6"><path d="M0.3 0.3 H7.3 L3.8 4.8Z" fill="#e6e6e6"/></svg>
<div class="t" style="left:1609.5px;top:393.75px;height:14px;line-height:14px;font-size:11.5px;color:#dedede;">Texture</div>
<div class="t" style="left:1619.2px;top:406.78px;height:14px;line-height:14px;font-size:11.5px;color:#dedede;">Environment</div>
<svg style="left:1599.3px;top:423.61px;" width="8" height="6" viewBox="0 0 8 6"><path d="M0.3 0.3 H7.3 L3.8 4.8Z" fill="#e6e6e6"/></svg>
<div class="t" style="left:1609.5px;top:419.81px;height:14px;line-height:14px;font-size:11.5px;color:#dedede;">Light</div>
<div class="t" style="left:1619.2px;top:432.84px;height:14px;line-height:14px;font-size:11.5px;color:#dedede;">Filter</div>
<svg style="left:1599.3px;top:449.67px;" width="8" height="6" viewBox="0 0 8 6"><path d="M0.3 0.3 H7.3 L3.8 4.8Z" fill="#e6e6e6"/></svg>
<div class="t" style="left:1609.5px;top:445.87px;height:14px;line-height:14px;font-size:11.5px;color:#dedede;">Shader</div>
<div class="t" style="left:1619.2px;top:458.9px;height:14px;line-height:14px;font-size:11.5px;color:#dedede;">Surface</div>
<div class="t" style="left:1619.2px;top:471.93px;height:14px;line-height:14px;font-size:11.5px;color:#dedede;">Volume</div>
<svg style="left:1599.3px;top:488.76px;" width="8" height="6" viewBox="0 0 8 6"><path d="M0.3 0.3 H7.3 L3.8 4.8Z" fill="#e6e6e6"/></svg>
<div class="t" style="left:1609.5px;top:484.96px;height:14px;line-height:14px;font-size:11.5px;color:#dedede;">Utility</div>
<div class="t" style="left:1619.2px;top:497.99px;height:14px;line-height:14px;font-size:11.5px;color:#dedede;">Aov</div>
<div class="t" style="left:1619.2px;top:511.02px;height:14px;line-height:14px;font-size:11.5px;color:#dedede;">Conversion</div>
<div class="t" style="left:1619.2px;top:524.05px;height:14px;line-height:14px;font-size:11.5px;color:#dedede;">Math</div>
<div class="t" style="left:1619.2px;top:537.08px;height:14px;line-height:14px;font-size:11.5px;color:#dedede;">Shader</div>
<div class="t" style="left:1619.2px;top:550.11px;height:14px;line-height:14px;font-size:11.5px;color:#dedede;">User Data</div>
<div class="t" style="left:1619.2px;top:563.14px;height:14px;line-height:14px;font-size:11.5px;color:#dedede;">Volume</div>
<div style="left:1707.5px;top:464px;width:3px;height:136px;background-image:linear-gradient(transparent 1px,#444 1px),linear-gradient(90deg,#909090 1px,transparent 1px);background-size:3px 3px;"></div>
<div style="left:1713px;top:327px;width:205px;height:410px;background:#333;border:1px solid #2e2e2e;border-radius:2px;"></div>
<div style="left:1714.5px;top:328.5px;width:189px;height:407.5px;overflow:hidden;background:#575757;">
<div style="left:0;top:1.7px;width:189px;height:19.6px;background:#5d5d5d;border-top:1px solid #626262;"></div>
<div class="t" style="left:5px;top:3.8px;height:16px;line-height:16px;font-size:11.5px;color:#c8c8c8;">aiCellNoise</div>
<div style="left:0;top:22.7px;width:189px;height:19.6px;background:#5d5d5d;border-top:1px solid #626262;"></div>
<div class="t" style="left:5px;top:24.8px;height:16px;line-height:16px;font-size:11.5px;color:#c8c8c8;">aiCheckerboard</div>
<div style="left:0;top:43.7px;width:189px;height:19.6px;background:#5d5d5d;border-top:1px solid #626262;"></div>
<div class="t" style="left:5px;top:45.8px;height:16px;line-height:16px;font-size:11.5px;color:#c8c8c8;">aiCurvature</div>
<div style="left:0;top:64.7px;width:189px;height:19.6px;background:#5d5d5d;border-top:1px solid #626262;"></div>
<div class="t" style="left:5px;top:66.8px;height:16px;line-height:16px;font-size:11.5px;color:#c8c8c8;">aiFlakes</div>
<div style="left:0;top:85.7px;width:189px;height:19.6px;background:#5d5d5d;border-top:1px solid #626262;"></div>
<div class="t" style="left:5px;top:87.8px;height:16px;line-height:16px;font-size:11.5px;color:#c8c8c8;">aiImage</div>
<div style="left:0;top:106.7px;width:189px;height:19.6px;background:#5d5d5d;border-top:1px solid #626262;"></div>
<div class="t" style="left:5px;top:108.8px;height:16px;line-height:16px;font-size:11.5px;color:#c8c8c8;">aiNoise</div>
<div style="left:0;top:127.7px;width:189px;height:19.6px;background:#5d5d5d;border-top:1px solid #626262;"></div>
<div class="t" style="left:5px;top:129.8px;height:16px;line-height:16px;font-size:11.5px;color:#c8c8c8;">aiThinFilm</div>
<div style="left:0;top:148.7px;width:189px;height:19.6px;background:#5d5d5d;border-top:1px solid #626262;"></div>
<div class="t" style="left:5px;top:150.8px;height:16px;line-height:16px;font-size:11.5px;color:#c8c8c8;">aiTriplanar</div>
<div style="left:0;top:169.7px;width:189px;height:19.6px;background:#5d5d5d;border-top:1px solid #626262;"></div>
<div class="t" style="left:5px;top:171.8px;height:16px;line-height:16px;font-size:11.5px;color:#c8c8c8;">aiAreaLight</div>
<div style="left:0;top:190.7px;width:189px;height:19.6px;background:#5d5d5d;border-top:1px solid #626262;"></div>
<div class="t" style="left:5px;top:192.8px;height:16px;line-height:16px;font-size:11.5px;color:#c8c8c8;">aiMeshLight</div>
<div style="left:0;top:211.7px;width:189px;height:19.6px;background:#5d5d5d;border-top:1px solid #626262;"></div>
<div class="t" style="left:5px;top:213.8px;height:16px;line-height:16px;font-size:11.5px;color:#c8c8c8;">aiPhotometricLight</div>
<div style="left:0;top:232.7px;width:189px;height:19.6px;background:#5d5d5d;border-top:1px solid #626262;"></div>
<div class="t" style="left:5px;top:234.8px;height:16px;line-height:16px;font-size:11.5px;color:#c8c8c8;">aiSkyDomeLight</div>
<div style="left:0;top:253.7px;width:189px;height:19.6px;background:#5d5d5d;border-top:1px solid #626262;"></div>
<div class="t" style="left:5px;top:255.8px;height:16px;line-height:16px;font-size:11.5px;color:#c8c8c8;">aiBarndoor</div>
<div style="left:0;top:274.7px;width:189px;height:19.6px;background:#5d5d5d;border-top:1px solid #626262;"></div>
<div class="t" style="left:5px;top:276.8px;height:16px;line-height:16px;font-size:11.5px;color:#c8c8c8;">aiGobo</div>
<div style="left:0;top:295.7px;width:189px;height:19.6px;background:#5d5d5d;border-top:1px solid #626262;"></div>
<div class="t" style="left:5px;top:297.8px;height:16px;line-height:16px;font-size:11.5px;color:#c8c8c8;">aiLightBlocker</div>
<div style="left:0;top:316.7px;width:189px;height:19.6px;background:#5d5d5d;border-top:1px solid #626262;"></div>
<div class="t" style="left:5px;top:318.8px;height:16px;line-height:16px;font-size:11.5px;color:#c8c8c8;">aiLightDecay</div>
<div style="left:0;top:337.7px;width:189px;height:19.6px;background:#5d5d5d;border-top:1px solid #626262;"></div>
<div class="t" style="left:5px;top:339.8px;height:16px;line-height:16px;font-size:11.5px;color:#c8c8c8;">aiAmbientOcclusion</div>
<div style="left:0;top:358.7px;width:189px;height:19.6px;background:#5d5d5d;border-top:1px solid #626262;"></div>
<div class="t" style="left:5px;top:360.8px;height:16px;line-height:16px;font-size:11.5px;color:#c8c8c8;">aiAxfShader</div>
<div style="left:0;top:379.7px;width:189px;height:19.6px;background:#5d5d5d;border-top:1px solid #626262;"></div>
<div class="t" style="left:5px;top:381.8px;height:16px;line-height:16px;font-size:11.5px;color:#c8c8c8;">aiCarPaint</div>
<div style="left:0;top:400.7px;width:189px;height:19.6px;background:#5d5d5d;border-top:1px solid #626262;"></div>
<div class="t" style="left:5px;top:402.8px;height:16px;line-height:16px;font-size:11.5px;color:#c8c8c8;">aiClipGeo</div>
</div>
<svg style="left:1906px;top:332px;" width="9" height="6" viewBox="0 0 9 6"><path d="M4.5 0.5 L8.7 5.5 H0.3Z" fill="#b9b9b9"/></svg>
<svg style="left:1906px;top:727.5px;" width="9" height="6" viewBox="0 0 9 6"><path d="M0.3 0.5 H8.7 L4.5 5.5Z" fill="#b9b9b9"/></svg>
<div style="left:1905.5px;top:341.5px;width:9.5px;height:46.5px;background:#5d5d5d;border-radius:4.5px;"></div>
<div style="left:1934.5px;top:268px;width:586px;height:478px;border:1px solid #3a3a3a;border-top:none;"></div>
<div style="left:1936px;top:274.5px;width:237px;height:6px;background-image:linear-gradient(transparent 1px,#444 1px),linear-gradient(90deg,#909090 1px,transparent 1px);background-size:3px 3px;"></div>
<div style="left:2254px;top:274.5px;width:232px;height:6px;background-image:linear-gradient(transparent 1px,#444 1px),linear-gradient(90deg,#909090 1px,transparent 1px);background-size:3px 3px;"></div>
<div class="t" style="left:2183px;top:267.5px;height:20px;line-height:20px;font-size:10px;color:#c8c8c8;letter-spacing:-0.593px;">Property Editor</div>
<div style="left:2490.5px;top:270px;width:13px;height:13.5px;background:#3a3a3a;border:1px solid #2e2e2e;border-radius:3px;"></div>
<svg style="left:2490.5px;top:270px;" width="13" height="13" viewBox="0 0 13 13"><rect x="5" y="3" width="5.5" height="4.5" fill="none" stroke="#c8c8c8" stroke-width="1.2"/><rect x="2.8" y="6" width="5" height="4.2" fill="#3a3a3a" stroke="#c8c8c8" stroke-width="1.2"/></svg>
<div style="left:2505.5px;top:270px;width:13px;height:13.5px;background:#3a3a3a;border:1px solid #2e2e2e;border-radius:3px;"></div>
<svg style="left:2505.5px;top:270px;" width="13" height="13" viewBox="0 0 13 13"><path d="M3.2 3.2 L9.8 9.8 M9.8 3.2 L3.2 9.8" stroke="#c8c8c8" stroke-width="1.8"/></svg>
<div style="left:1937.5px;top:291px;width:579px;height:20px;background:#373737;"></div>
<div style="left:1937.5px;top:310.5px;width:579px;height:1.5px;background:#2e2e2e;"></div>
<div style="left:1938.5px;top:291px;width:183px;height:19.5px;background:#444;border-radius:2px 2px 0 0;"></div>
<div class="t" style="left:1949.5px;top:292px;height:20px;line-height:20px;font-size:11.5px;color:#e2e2e2;letter-spacing:-0.541px;">GSG_GC006_A025_Window05_1</div>
<div style="left:1938px;top:314px;width:1.5px;height:428px;background:#3a3a3a;"></div>
<div style="left:2515px;top:314px;width:1.5px;height:428px;background:#3a3a3a;"></div>
<div style="left:1938px;top:741px;width:578px;height:1.5px;background:#3a3a3a;"></div>
<div class="t" style="left:2063px;top:318px;height:20px;line-height:20px;font-size:11.5px;color:#c8c8c8;letter-spacing:0.021px;">file:</div>
<div style="left:2088px;top:315.5px;width:154px;height:23.5px;background:#2b2b2b;border-radius:2px;"></div>
<div class="t" style="left:2090.7px;top:318px;height:20px;line-height:20px;font-size:11.5px;color:#c8c8c8;letter-spacing:-0.483px;">G_GC006_A025_Window05_1</div>
<div style="left:2248px;top:314px;width:70px;height:26px;background:#5d5d5d;border-radius:1px;"></div>
<div class="t" style="left:2283px;top:317.5px;height:20px;line-height:20px;font-size:11.5px;color:#e4e4e4;transform:translateX(-50%);">Presets</div>
<svg style="left:2330.5px;top:320.5px;" width="12" height="13" viewBox="0 0 12 13"><rect x="1" y="1" width="6" height="5" fill="#c8c8c8"/><path d="M7.5 1 H11 V12 H4.5 V7 H7.5Z" fill="#41b6c8"/></svg>
<svg style="left:2355.5px;top:320.5px;" width="14" height="13" viewBox="0 0 14 13"><path d="M1 4 V12 H10" fill="none" stroke="#d0d0d0" stroke-width="1.4"/><rect x="3.5" y="0.5" width="10" height="8.5" fill="#41b6c8"/></svg>
<div class="t" style="left:2049px;top:372px;height:20px;line-height:20px;font-size:11.5px;color:#c8c8c8;letter-spacing:-0.415px;">Sample</div>
<div style="left:2090.7px;top:349px;width:64.5px;height:64px;background:#000;"></div>
<svg style="left:2090.7px;top:349px;" width="64.5" height="64" viewBox="0 0 64.5 64"><g transform="translate(0,0) scale(2)"><path d="M3 3 L8 1 H27 V22 H30 V32 H6 V22 L3 23.5Z" fill="#1a5a7a"/><path d="M1 5 L6 2.5 V22 L1 24.5Z" fill="#7ccde0"/><path d="M6 1.5 a1.5 1.5 0 0 1 1.5-1.5 H26.5 a1.5 1.5 0 0 1 1.5 1.5 V22 H6Z" fill="#2a9fc4"/><path d="M4 23.5 L6 22 H28 V30.5 a1.5 1.5 0 0 1 -1.5 1.5 H5.5 a1.5 1.5 0 0 1 -1.5 -1.5Z" fill="#245f7e"/><text x="17" y="18" font-family="Liberation Sans" font-weight="bold" font-size="17" text-anchor="middle" fill="#eef4f6">M</text><text x="16.5" y="30" font-family="Liberation Sans" font-weight="bold" font-size="6.6" text-anchor="middle" fill="#eef4f6">AYA</text></g></svg>
<div style="left:1942px;top:423px;width:557px;height:19.5px;background:#5d5d5d;border-radius:2px;"></div>
<svg style="left:1948.5px;top:429px;" width="12" height="8" viewBox="0 0 12 8"><path d="M0.5 0.5 H11.5 L6 7.5Z" fill="#e8e8e8"/></svg>
<div class="t" style="left:1975.5px;top:424px;height:20px;line-height:20px;font-size:11.5px;color:#dcdcdc;letter-spacing:-0.292px;font-weight:bold;">File Attributes</div>
<svg style="left:2502px;top:423.5px;" width="10" height="6" viewBox="0 0 10 6"><path d="M5 0.5 L9.5 5.5 H0.5Z" fill="#b9b9b9"/></svg>
<div style="left:2502px;top:433.5px;width:9.7px;height:160px;background:#5d5d5d;border-radius:4.8px;"></div>
<svg style="left:2502px;top:730px;" width="10" height="6" viewBox="0 0 10 6"><path d="M0.5 0.5 H9.5 L5 5.5Z" fill="#b9b9b9"/></svg>
<div style="left:1944px;top:443px;width:553px;height:297px;background:#464646;"></div>
<div class="t" style="left:2034.2px;top:446px;height:20px;line-height:20px;font-size:11.5px;color:#c8c8c8;letter-spacing:-0.089px;">Filter Type</div>
<div style="left:2095.7px;top:446px;width:73.5px;height:19px;background:#5d5d5d;border-radius:2px 0 0 2px;"></div>
<div style="left:2170px;top:446px;width:20px;height:19px;background:#5d5d5d;border-radius:0 2px 2px 0;"></div>
<div class="t" style="left:2099px;top:447px;height:20px;line-height:20px;font-size:11.5px;color:#c8c8c8;letter-spacing:-0.018px;">Quadratic</div>
<svg style="left:2174.5px;top:453px;" width="11" height="7" viewBox="0 0 11 7"><path d="M0.5 0.5 H10.5 L5.5 6.5Z" fill="#d0d0d0"/></svg>
<div style="left:2095px;top:470px;width:13px;height:12.5px;background:#2b2b2b;border-radius:2px;"></div>
<div class="t" style="left:2113px;top:467px;height:20px;line-height:20px;font-size:11.5px;color:#c8c8c8;letter-spacing:-0.165px;">Pre Filter</div>
<div class="t" style="left:2004.2px;top:487px;height:20px;line-height:20px;font-size:11.5px;color:#808080;letter-spacing:-0.185px;">Pre Filter Radius</div>
<div style="left:2095px;top:488px;width:67.5px;height:17.5px;background:#3a3a3a;border-radius:2px;"></div>
<div class="t" style="left:2100px;top:487.5px;height:20px;line-height:20px;font-size:11.5px;color:#707070;letter-spacing:-0.356px;">2.000</div>
<div style="left:2166px;top:494.5px;width:296px;height:2.5px;background:#3c3c3c;border-radius:1px;"></div>
<div style="left:2199px;top:490px;width:6.5px;height:13px;background:#6a6a6a;border-radius:2px;"></div>
<svg style="left:2470px;top:490.5px;" width="12" height="12" viewBox="0 0 12 12"><rect width="12" height="12" fill="#3a3a3a"/><rect x="0" y="0" width="6" height="6" fill="#626262"/><rect x="6" y="6" width="6" height="6" fill="#626262"/></svg>
<div style="left:1946px;top:508.5px;width:549px;height:1px;background:#505050;"></div>
<div class="t" style="left:2026.2px;top:516px;height:20px;line-height:20px;font-size:11.5px;color:#c8c8c8;letter-spacing:-0.333px;">Image Name</div>
<div style="left:2096.7px;top:517.5px;width:369px;height:17.5px;background:#1f1f1f;border-radius:2px;"></div>
<div class="t" style="left:2099.5px;top:516.5px;height:20px;line-height:20px;font-size:11.5px;color:#d4d4d4;letter-spacing:-0.325px;">\Gobo\GSG_GC006_A025_Window05\GSG_GC006_A025_Window05.jpg</div>
<div style="left:2096.7px;top:518.5px;width:3.4px;height:15.5px;background:#1f1f1f;"></div>
<div class="t" style="left:2099.8px;top:516.5px;height:20px;line-height:20px;font-size:8px;color:#d4d4d4;">\</div>
<svg style="left:2471.5px;top:518.5px;" width="17" height="15" viewBox="0 0 17 15"><path d="M0.5 2 H6.5 L8 3.5 H16.5 V14.5 H0.5Z" fill="#c9c9c9"/></svg>
<div style="left:2095px;top:544px;width:70px;height:26px;background:#5d5d5d;border-radius:1px;"></div>
<div class="t" style="left:2130px;top:547.5px;height:20px;line-height:20px;font-size:11.5px;color:#e4e4e4;transform:translateX(-50%);">Reload</div>
<div style="left:2167px;top:544px;width:70px;height:26px;background:#5d5d5d;border-radius:1px;"></div>
<div class="t" style="left:2202px;top:547.5px;height:20px;line-height:20px;font-size:11.5px;color:#e4e4e4;transform:translateX(-50%);">Edit</div>
<div style="left:2239px;top:544px;width:70px;height:26px;background:#5d5d5d;border-radius:1px;"></div>
<div class="t" style="left:2274px;top:547.5px;height:20px;line-height:20px;font-size:11.5px;color:#e4e4e4;transform:translateX(-50%);">View</div>
<div style="left:1946px;top:572.5px;width:549px;height:1px;background:#505050;"></div>
<div class="t" style="left:2009.5px;top:577px;height:20px;line-height:20px;font-size:11.5px;color:#c8c8c8;letter-spacing:0.087px;">UV Tiling Mode</div>
<div style="left:2098px;top:577px;width:120px;height:18.7px;background:#5d5d5d;border-radius:2px;"></div>
<div style="left:2213.5px;top:577px;width:1px;height:18.7px;background:#4e4e4e;"></div>
<div class="t" style="left:2101px;top:577.5px;height:20px;line-height:20px;font-size:11.5px;color:#c8c8c8;letter-spacing:0.458px;">Off</div>
<div style="left:1946px;top:600.5px;width:549px;height:1px;background:#505050;"></div>
<div style="left:2095px;top:605.5px;width:13px;height:12.5px;background:#2b2b2b;border-radius:2px;"></div>
<div class="t" style="left:2113px;top:602px;height:20px;line-height:20px;font-size:11.5px;color:#c8c8c8;letter-spacing:-0.272px;">Use Image Sequence</div>
<div class="t" style="left:2012.5px;top:622px;height:20px;line-height:20px;font-size:11.5px;color:#808080;letter-spacing:-0.155px;">Image Number</div>
<div style="left:2095px;top:623px;width:67.5px;height:17.7px;background:#3a3a3a;border-radius:2px;"></div>
<div class="t" style="left:2100px;top:622.5px;height:20px;line-height:20px;font-size:11.5px;color:#707070;">1</div>
<svg style="left:2321px;top:625.5px;" width="12" height="12" viewBox="0 0 12 12"><rect width="12" height="12" fill="#3a3a3a"/><rect x="0" y="0" width="6" height="6" fill="#626262"/><rect x="6" y="6" width="6" height="6" fill="#626262"/></svg>
<div class="t" style="left:2021.2px;top:644px;height:20px;line-height:20px;font-size:11.5px;color:#808080;letter-spacing:-0.116px;">Frame Offset</div>
<div style="left:2095px;top:645.5px;width:67.5px;height:17.5px;background:#3a3a3a;border-radius:2px;"></div>
<div class="t" style="left:2100px;top:644.5px;height:20px;line-height:20px;font-size:11.5px;color:#707070;">0</div>
<svg style="left:2321px;top:647.5px;" width="12" height="12" viewBox="0 0 12 12"><rect width="12" height="12" fill="#3a3a3a"/><rect x="0" y="0" width="6" height="6" fill="#626262"/><rect x="6" y="6" width="6" height="6" fill="#626262"/></svg>
<div style="left:1946px;top:666px;width:549px;height:1px;background:#505050;"></div>
<div style="left:2094px;top:672.5px;width:13px;height:12.5px;background:#2b2b2b;border-radius:2px;"></div>
<div class="t" style="left:2112px;top:669px;height:20px;line-height:20px;font-size:11.5px;color:#c8c8c8;letter-spacing:-0.128px;">Ignore Color Space File Rules</div>
<div class="t" style="left:2028.2px;top:692px;height:20px;line-height:20px;font-size:11.5px;color:#c8c8c8;letter-spacing:-0.253px;">Color Space</div>
<div style="left:2095.7px;top:693px;width:210px;height:17.7px;background:#5d5d5d;border-radius:1px;"></div>
<div style="left:2308px;top:693px;width:18px;height:17.7px;background:#5d5d5d;border-radius:1px;"></div>
<div class="t" style="left:2201px;top:692.5px;height:20px;line-height:20px;font-size:11.5px;color:#e8e8e8;transform:translateX(-50%);">sRGB</div>
<svg style="left:2313px;top:700px;" width="8" height="5" viewBox="0 0 8 5"><path d="M0.5 0.5 H7.5 L4 4.5Z" fill="#a8a8a8"/></svg>
<div style="left:2094px;top:719px;width:13px;height:12.5px;background:#2b2b2b;border-radius:2px;"></div>
<div class="t" style="left:2112px;top:716px;height:20px;line-height:20px;font-size:11.5px;color:#c8c8c8;letter-spacing:0.030px;">Invert View</div>
<div style="left:1576px;top:747px;width:946px;height:1.5px;background:#3a3a3a;"></div>
<div style="left:1590px;top:766px;width:1.5px;height:18px;background:#6f6f6f;"></div>
<div style="left:1589px;top:770.5px;width:3.5px;height:9px;background:#7d7d7d;border-radius:1px;"></div>
<div style="left:1681px;top:766px;width:1.5px;height:18px;background:#6f6f6f;"></div>
<div style="left:1680px;top:770.5px;width:3.5px;height:9px;background:#7d7d7d;border-radius:1px;"></div>
<div style="left:1825.9px;top:766px;width:1.5px;height:18px;background:#6f6f6f;"></div>
<div style="left:1824.9px;top:770.5px;width:3.5px;height:9px;background:#7d7d7d;border-radius:1px;"></div>
<div style="left:1997.8px;top:766px;width:1.5px;height:18px;background:#6f6f6f;"></div>
<div style="left:1996.8px;top:770.5px;width:3.5px;height:9px;background:#7d7d7d;border-radius:1px;"></div>
<div style="left:2088.8px;top:766px;width:1.5px;height:18px;background:#6f6f6f;"></div>
<div style="left:2087.8px;top:770.5px;width:3.5px;height:9px;background:#7d7d7d;border-radius:1px;"></div>
<svg style="left:1601px;top:765.7px;" width="17" height="18" viewBox="0 0 17 18"><path d="M4 5 V2.5 H16 V15.5 H4 V13" fill="none" stroke="#c9c9c9" stroke-width="1.5"/><path d="M1 5.5 L6.5 9 L1 12.5Z" fill="#c9c9c9"/></svg>
<svg style="left:1626px;top:765.7px;" width="18" height="18" viewBox="0 0 18 18"><path d="M4 5 V2.5 H14 V5 M14 13 V15.5 H4 V13" fill="none" stroke="#c9c9c9" stroke-width="1.5"/><path d="M1 5.5 L6.5 9 L1 12.5Z M12 5.5 L17.5 9 L12 12.5Z" fill="#c9c9c9"/></svg>
<svg style="left:1654.5px;top:765.7px;" width="17.5" height="18" viewBox="0 0 17.5 18"><path d="M13 5 V2.5 H1 V15.5 H13 V13" fill="none" stroke="#c9c9c9" stroke-width="1.5"/><path d="M11 5.5 L16.5 9 L11 12.5Z" fill="#c9c9c9"/></svg>
<svg style="left:1692.5px;top:765.7px;" width="15.5" height="18" viewBox="0 0 15.5 18"><path d="M1 5 V1.5 H4.5 M11 1.5 H14.5 V5 M14.5 12 V15.5 H11 M4.5 15.5 H1 V12" fill="none" stroke="#c9c9c9" stroke-width="1.3"/><path d="M7.7 3 L9 7 L13 8.5 L9 10 L7.7 14 L6.4 10 L2.4 8.5 L6.4 7Z" fill="#41b6c8"/></svg>
<svg style="left:1718px;top:765.7px;" width="18" height="18" viewBox="0 0 18 18"><rect x="1" y="2.5" width="15.5" height="14" fill="none" stroke="#41b6c8" stroke-width="1.2" stroke-dasharray="1.6 1.2"/><rect x="3.5" y="8.5" width="6.5" height="3" fill="#c9c9c9"/><rect x="8" y="12.5" width="6.5" height="3" fill="#c9c9c9"/><path d="M12.5 0 V7 M9 3.5 H16" stroke="#41b6c8" stroke-width="1.6"/></svg>
<svg style="left:1745.5px;top:765.7px;" width="17.5" height="18" viewBox="0 0 17.5 18"><rect x="1" y="2.5" width="15" height="14" fill="none" stroke="#41b6c8" stroke-width="1.2" stroke-dasharray="1.6 1.2"/><rect x="3.5" y="8.5" width="6.5" height="3" fill="#c9c9c9"/><rect x="8" y="12.5" width="6.5" height="3" fill="#c9c9c9"/><path d="M8 5 H14.5" stroke="#41b6c8" stroke-width="1.6"/></svg>
<svg style="left:1772px;top:765.7px;" width="19" height="18" viewBox="0 0 19 18"><path d="M1 4 V6 M1 8 V10 M1 12 V14 M17.5 4 V6 M17.5 8 V10 M17.5 12 V14" stroke="#c9c9c9" stroke-width="1.6"/><path d="M4 9 H10" stroke="#41b6c8" stroke-width="1.4"/><path d="M9.5 5.5 L14 9 L9.5 12.5Z" fill="#41b6c8"/></svg>
<svg style="left:1799px;top:765.7px;" width="17" height="18" viewBox="0 0 17 18"><circle cx="4.5" cy="9" r="3.6" fill="#41b6c8"/><path d="M8 9 H10.5 V3.5 H16.5 M10.5 9 V14.5 H16.5" fill="none" stroke="#c9c9c9" stroke-width="1.5"/><path d="M11.5 3.5 H16.5 M11.5 14.5 H16.5" stroke="#c9c9c9" stroke-width="2.4"/></svg>
<svg style="left:1836.6px;top:765.7px;" width="16.8" height="18" viewBox="0 0 16.8 18"><rect x="0.8" y="2.2" width="15" height="3.6" rx="1" fill="#c9c9c9" stroke="#c9c9c9" stroke-width="1"/><rect x="0.8" y="7.2" width="15" height="3.6" rx="1" fill="none" stroke="#c9c9c9" stroke-width="1"/><rect x="0.8" y="12.2" width="15" height="3.6" rx="1" fill="none" stroke="#c9c9c9" stroke-width="1"/></svg>
<svg style="left:1863.5px;top:765.7px;" width="16.8" height="18" viewBox="0 0 16.8 18"><rect x="0.8" y="2.2" width="15" height="3.6" rx="1" fill="#c9c9c9" stroke="#c9c9c9" stroke-width="1"/><rect x="0.8" y="7.2" width="15" height="3.6" rx="1" fill="#c9c9c9" stroke="#c9c9c9" stroke-width="1"/><rect x="0.8" y="12.2" width="15" height="3.6" rx="1" fill="none" stroke="#c9c9c9" stroke-width="1"/></svg>
<svg style="left:1890.9px;top:765.7px;" width="16.8" height="18" viewBox="0 0 16.8 18"><rect x="0.8" y="2.2" width="15" height="3.6" rx="1" fill="#c9c9c9" stroke="#c9c9c9" stroke-width="1"/><rect x="0.8" y="7.2" width="15" height="3.6" rx="1" fill="#c9c9c9" stroke="#c9c9c9" stroke-width="1"/><rect x="0.8" y="12.2" width="15" height="3.6" rx="1" fill="#c9c9c9" stroke="#c9c9c9" stroke-width="1"/></svg>
<svg style="left:1917.4px;top:765.7px;" width="16.8" height="18" viewBox="0 0 16.8 18"><rect x="0.8" y="2.2" width="15" height="3.6" rx="1" fill="none" stroke="#c9c9c9" stroke-width="1"/><rect x="0.8" y="7.2" width="15" height="3.6" rx="1" fill="none" stroke="#c9c9c9" stroke-width="1"/><rect x="0.8" y="12.2" width="15" height="3.6" rx="1" fill="none" stroke="#c9c9c9" stroke-width="1"/></svg>
<svg style="left:1945.5px;top:765.7px;" width="15.5" height="18" viewBox="0 0 15.5 18"><circle cx="6" cy="7" r="4.4" fill="none" stroke="#c9c9c9" stroke-width="1.8"/><path d="M9.2 10.2 L14 15" stroke="#c9c9c9" stroke-width="2.4"/></svg>
<svg style="left:1973px;top:765.7px;" width="14" height="18" viewBox="0 0 14 18"><path d="M3.5 3.5 V1.5 H12.5 V10.5 H10.5" fill="none" stroke="#41b6c8" stroke-width="1.3"/><rect x="1" y="4.5" width="9" height="9" fill="none" stroke="#41b6c8" stroke-width="1.3"/><rect x="3.2" y="7" width="4.6" height="4.2" fill="#41b6c8"/></svg>
<svg style="left:2008px;top:765.7px;" width="17" height="18" viewBox="0 0 17 18"><path d="M5.5 1.5 V16.5 M11.5 1.5 V16.5 M1 6 H16 M1 12 H16" stroke="#4fc24f" stroke-width="1.6"/></svg>
<svg style="left:2035px;top:765.7px;" width="19" height="18" viewBox="0 0 19 18"><path d="M5 9 a4.6 4.6 0 1 1 7.5 1.5" fill="none" stroke="#c9c9c9" stroke-width="2.2"/><path d="M9 8 V17.5 M13.5 8 V17.5 M6.5 10.5 H17 M6.5 15 H17" stroke="#41b6c8" stroke-width="1.1"/></svg>
<svg style="left:2062px;top:765.7px;" width="18" height="18" viewBox="0 0 18 18"><rect x="1" y="10" width="9" height="6.5" fill="#c9c9c9"/><path d="M2.5 10 V7 a3 3 0 0 1 6 0" fill="none" stroke="#c9c9c9" stroke-width="1.4"/><circle cx="12.5" cy="11" r="4.8" fill="#c9c9c9" stroke="#444" stroke-width="0.8"/><path d="M12.5 8 V11 H15" stroke="#444" stroke-width="1.1" fill="none"/></svg>
<svg style="left:2100px;top:765.7px;" width="16" height="18" viewBox="0 0 16 18"><path d="M1 5 V1.5 H4.5 M11 1.5 H14.5 V5 M14.5 12 V15.5 H11 M4.5 15.5 H1 V12" fill="none" stroke="#5a5a5a" stroke-width="1.6"/><rect x="4" y="4.5" width="7.5" height="8" fill="#525252"/></svg>
<div style="left:2122.5px;top:768px;width:177px;height:17.7px;background:#2b2b2b;border-radius:2px;"></div>
<div class="t" style="left:2126.4px;top:767.5px;height:20px;line-height:20px;font-size:10.5px;color:#7d7d7d;letter-spacing:0.009px;">Search...</div>
<svg style="left:2285px;top:774px;" width="10" height="6.5" viewBox="0 0 10 6.5"><path d="M0.5 0.5 H9.5 L5 6Z" fill="#d8d8d8"/></svg>
<div style="left:1588px;top:798px;width:922px;height:19px;background:#333;"></div>
<div style="left:1589px;top:800px;width:90px;height:17.5px;background:#444;border-radius:3px 3px 0 0;"></div>
<div class="t" style="left:1599.4px;top:799.4px;height:20px;line-height:20px;font-size:11.5px;color:#e6e6e6;letter-spacing:0.012px;">Untitled_1</div>
<svg style="left:1658.5px;top:805px;" width="9" height="9" viewBox="0 0 9 9"><path d="M1 1 L8 8 M8 1 L1 8" stroke="#cfcfcf" stroke-width="1.7"/></svg>
<div style="left:1681.5px;top:800px;width:29.5px;height:17.5px;background:#333;border:1px solid #454545;border-bottom:none;border-radius:3px 3px 0 0;"></div>
<div class="t" style="left:1695px;top:798.5px;height:20px;line-height:20px;font-size:10.5px;color:#c8c8c8;transform:translateX(-50%);">+</div>
<div style="left:1589px;top:817px;width:919.5px;height:278px;background:#2d2d2d;border:2px solid #4f80a3;border-radius:2px;outline:1px solid #363636;outline-offset:0.5px;"></div>
<div style="left:1600px;top:819px;width:2px;height:274px;background:#1f1f1f;"></div>
<div style="left:1636px;top:819px;width:2px;height:274px;background:#1f1f1f;"></div>
<div style="left:1672px;top:819px;width:2px;height:274px;background:#1f1f1f;"></div>
<div style="left:1708px;top:819px;width:2px;height:274px;background:#1f1f1f;"></div>
<div style="left:1744px;top:819px;width:2px;height:274px;background:#1f1f1f;"></div>
<div style="left:1780px;top:819px;width:2px;height:274px;background:#1f1f1f;"></div>
<div style="left:1816px;top:819px;width:2px;height:274px;background:#1f1f1f;"></div>
<div style="left:1852px;top:819px;width:2px;height:274px;background:#1f1f1f;"></div>
<div style="left:1888px;top:819px;width:2px;height:274px;background:#1f1f1f;"></div>
<div style="left:1924px;top:819px;width:2px;height:274px;background:#1f1f1f;"></div>
<div style="left:1960px;top:819px;width:2px;height:274px;background:#1f1f1f;"></div>
<div style="left:1996px;top:819px;width:2px;height:274px;background:#1f1f1f;"></div>
<div style="left:2032px;top:819px;width:2px;height:274px;background:#1f1f1f;"></div>
<div style="left:2068px;top:819px;width:2px;height:274px;background:#1f1f1f;"></div>
<div style="left:2104px;top:819px;width:2px;height:274px;background:#1f1f1f;"></div>
<div style="left:2140px;top:819px;width:2px;height:274px;background:#1f1f1f;"></div>
<div style="left:2176px;top:819px;width:2px;height:274px;background:#1f1f1f;"></div>
<div style="left:2212px;top:819px;width:2px;height:274px;background:#1f1f1f;"></div>
<div style="left:2248px;top:819px;width:2px;height:274px;background:#1f1f1f;"></div>
<div style="left:2285px;top:819px;width:2px;height:274px;background:#1f1f1f;"></div>
<div style="left:2321px;top:819px;width:2px;height:274px;background:#1f1f1f;"></div>
<div style="left:2357px;top:819px;width:2px;height:274px;background:#1f1f1f;"></div>
<div style="left:2393px;top:819px;width:2px;height:274px;background:#1f1f1f;"></div>
<div style="left:2429px;top:819px;width:2px;height:274px;background:#1f1f1f;"></div>
<div style="left:2465px;top:819px;width:2px;height:274px;background:#1f1f1f;"></div>
<div style="left:2501px;top:819px;width:2px;height:274px;background:#1f1f1f;"></div>
<div style="left:1591px;top:823px;width:915.5px;height:2px;background:#1f1f1f;"></div>
<div style="left:1591px;top:859px;width:915.5px;height:2px;background:#1f1f1f;"></div>
<div style="left:1591px;top:895px;width:915.5px;height:2px;background:#1f1f1f;"></div>
<div style="left:1591px;top:931px;width:915.5px;height:2px;background:#1f1f1f;"></div>
<div style="left:1591px;top:968px;width:915.5px;height:2px;background:#1f1f1f;"></div>
<div style="left:1591px;top:1004px;width:915.5px;height:2px;background:#1f1f1f;"></div>
<div style="left:1591px;top:1040px;width:915.5px;height:2px;background:#1f1f1f;"></div>
<div style="left:1591px;top:1076px;width:915.5px;height:2px;background:#1f1f1f;"></div>
<div class="t" style="left:1704.1px;top:894px;height:20px;line-height:20px;font-size:12px;color:#ececec;letter-spacing:0.396px;">place2dTexture4</div>
<div style="left:1699.6px;top:915.4px;width:149px;height:55.2px;background:#4f3a7c;border:1px solid #111;border-radius:6px;"></div>
<div class="t" style="left:1890px;top:893.5px;height:20px;line-height:20px;font-size:12px;color:#ececec;letter-spacing:0.196px;">GSG_GC006_A025_Window05.jpg</div>
<div style="left:1885.6px;top:915.2px;width:149px;height:93.2px;background:#5d5d5d;border:1px solid #111;border-radius:6px;"></div>
<div style="left:1886.6px;top:962.2px;width:147px;height:18.6px;background:#545454;"></div>
<svg style="left:1840px;top:920px;" width="60" height="90" viewBox="0 0 60 90"><path d="M7.5 10 H46" stroke="#f5a70a" stroke-width="2"/><path d="M12 33 C24 33 24 71 42 71" fill="none" stroke="#7d9370" stroke-width="1.3"/></svg>
<div style="left:1692.9px;top:922.6px;width:14.8px;height:14.8px;border-radius:50%;background:#ffffff;border:1px solid #151515;"></div>
<div style="left:1840.1px;top:922.6px;width:14.8px;height:14.8px;border-radius:50%;background:#ffa200;border:1px solid #151515;"></div>
<div style="left:1878.9px;top:922.6px;width:14.8px;height:14.8px;border-radius:50%;background:#ffa200;border:1px solid #151515;"></div>
<div style="left:2026.4px;top:922.6px;width:14.8px;height:14.8px;border-radius:50%;background:#ffffff;border:1px solid #151515;"></div>
<div style="left:1841.9px;top:947.4px;width:11.2px;height:11.2px;border-radius:50%;background:#7a9a6c;border:1px solid #151515;"></div>
<div style="left:2028.2px;top:947.9px;width:11.2px;height:11.2px;border-radius:50%;background:#7a9a6c;border:1px solid #151515;"></div>
<div style="left:2028.2px;top:966.9px;width:11.2px;height:11.2px;border-radius:50%;background:#7a9a6c;border:1px solid #151515;"></div>
<div style="left:1880.6px;top:985.4px;width:11.2px;height:11.2px;border-radius:50%;background:#7a9a6c;border:1px solid #151515;"></div>
<svg style="left:1713px;top:922px;" width="24" height="20" viewBox="0 0 24 20"><path d="M2.8 8 L12.2 1 L21.6 8 L12.2 15Z" fill="#0c0c0c"/><path d="M12.2 1 L16.9 4.5 L12.2 8 L7.5 4.5Z M12.2 8 L16.9 11.5 L12.2 15Z" fill="#c4c4c4"/><path d="M1 11.2 H10.6 M5.8 11.2 V18.5" stroke="#41b6c8" stroke-width="2.3"/></svg>
<div style="left:1800.1px;top:922.2px;width:13.6px;height:13.6px;border-radius:50%;background:#bdbdbd;"></div>
<div class="t" style="left:1806.9px;top:923.5px;height:12px;line-height:12px;font-size:10px;color:#4f3a7c;font-weight:bold;transform:translateX(-50%);">S</div>
<svg style="left:1819.6px;top:922.3px;" width="15" height="14" viewBox="0 0 15 14"><rect x="0.7" y="0.7" width="13" height="3.2" rx="1.6" fill="none" stroke="#bdbdbd" stroke-width="1"/><rect x="0.7" y="5.3" width="13" height="3.2" rx="1.6" fill="none" stroke="#bdbdbd" stroke-width="1"/><rect x="0.7" y="9.9" width="13" height="3.2" rx="1.6" fill="none" stroke="#bdbdbd" stroke-width="1"/></svg>
<div style="left:1985.6px;top:922.2px;width:13.6px;height:13.6px;border-radius:50%;background:#bdbdbd;"></div>
<div class="t" style="left:1992.4px;top:923.5px;height:12px;line-height:12px;font-size:10px;color:#5d5d5d;font-weight:bold;transform:translateX(-50%);">S</div>
<svg style="left:2005.3px;top:922.3px;" width="15" height="14" viewBox="0 0 15 14"><rect x="0.7" y="0.7" width="13" height="3.2" rx="1.6" fill="none" stroke="#bdbdbd" stroke-width="1"/><rect x="0.7" y="5.3" width="13" height="3.2" rx="1.6" fill="none" stroke="#bdbdbd" stroke-width="1"/><rect x="0.7" y="9.9" width="13" height="3.2" rx="1.6" fill="none" stroke="#bdbdbd" stroke-width="1"/></svg>
<div class="t" style="left:1791.9px;top:944px;height:20px;line-height:20px;font-size:11.5px;color:#e6e6e6;letter-spacing:0.166px;">Out UV</div>
<svg style="left:1831.5px;top:948px;" width="9.5" height="9.5" viewBox="0 0 9.5 9.5"><rect x="0.5" y="0.5" width="8.5" height="8.5" fill="none" stroke="#a8a8a8" stroke-width="1"/><path d="M4.75 2 V7.5 M2 4.75 H7.5" stroke="#a8a8a8" stroke-width="1"/></svg>
<div class="t" style="left:1963px;top:944px;height:20px;line-height:20px;font-size:11.5px;color:#e6e6e6;letter-spacing:0.310px;">Out Alpha</div>
<div class="t" style="left:1965px;top:963px;height:20px;line-height:20px;font-size:11.5px;color:#e6e6e6;letter-spacing:0.232px;">Out Color</div>
<svg style="left:2017.5px;top:967.5px;" width="9.5" height="9.5" viewBox="0 0 9.5 9.5"><rect x="0.5" y="0.5" width="8.5" height="8.5" fill="none" stroke="#a8a8a8" stroke-width="1"/><path d="M4.75 2 V7.5 M2 4.75 H7.5" stroke="#a8a8a8" stroke-width="1"/></svg>
<svg style="left:1892.6px;top:986px;" width="9.5" height="9.5" viewBox="0 0 9.5 9.5"><rect x="0.5" y="0.5" width="8.5" height="8.5" fill="none" stroke="#a8a8a8" stroke-width="1"/><path d="M4.75 2 V7.5 M2 4.75 H7.5" stroke="#a8a8a8" stroke-width="1"/></svg>
<div class="t" style="left:1903.8px;top:982px;height:20px;line-height:20px;font-size:11.5px;color:#e6e6e6;letter-spacing:0.129px;">Uv Coord</div>
<div style="left:1899px;top:917.7px;width:24.5px;height:24.5px;background:#000;"></div>
<svg style="left:1899px;top:917.7px;" width="24.5" height="24.5" viewBox="0 0 24.5 24.5"><g transform="translate(0,0) scale(0.76)"><path d="M3 3 L8 1 H27 V22 H30 V32 H6 V22 L3 23.5Z" fill="#1a5a7a"/><path d="M1 5 L6 2.5 V22 L1 24.5Z" fill="#7ccde0"/><path d="M6 1.5 a1.5 1.5 0 0 1 1.5-1.5 H26.5 a1.5 1.5 0 0 1 1.5 1.5 V22 H6Z" fill="#2a9fc4"/><path d="M4 23.5 L6 22 H28 V30.5 a1.5 1.5 0 0 1 -1.5 1.5 H5.5 a1.5 1.5 0 0 1 -1.5 -1.5Z" fill="#245f7e"/><text x="17" y="18" font-family="Liberation Sans" font-weight="bold" font-size="17" text-anchor="middle" fill="#eef4f6">M</text><text x="16.5" y="30" font-family="Liberation Sans" font-weight="bold" font-size="6.6" text-anchor="middle" fill="#eef4f6">AYA</text></g></svg>
<div style="left:393.8px;top:343.8px;width:590px;height:212.2px;background:#ffffff;"></div>
<svg style="left:405px;top:353px;" width="14" height="13" viewBox="0 0 14 13"><path d="M13 6.5 H1.5 M6.5 1.2 L1.2 6.5 L6.5 11.8" fill="none" stroke="#5a5a5a" stroke-width="1.5"/></svg>
<svg style="left:435px;top:353px;" width="14" height="13" viewBox="0 0 14 13"><path d="M1 6.5 H12.5 M7.5 1.2 L12.8 6.5 L7.5 11.8" fill="none" stroke="#c6c6c6" stroke-width="1.4"/></svg>
<svg style="left:462px;top:356.5px;" width="7" height="5" viewBox="0 0 7 5"><path d="M0.6 0.8 L3.5 3.8 L6.4 0.8" fill="none" stroke="#6a6a6a" stroke-width="1.3"/></svg>
<svg style="left:480px;top:352.5px;" width="12" height="14" viewBox="0 0 12 14"><path d="M6 13 V1.5 M1 6.5 L6 1.2 L11 6.5" fill="none" stroke="#5a5a5a" stroke-width="1.5"/></svg>
<div style="left:499.2px;top:348.2px;width:364.5px;height:21px;background:#fff;border:1px solid #d9d9d9;"></div>
<div style="left:846px;top:348.2px;width:1px;height:21px;background:#d9d9d9;"></div>
<svg style="left:504px;top:350px;" width="13" height="16" viewBox="0 0 13 16"><path d="M0.5 0.5 H10.5 V15.5 H0.5Z" fill="#ffe08a" stroke="#e9c45a" stroke-width="0.8"/><path d="M10.5 9 H12.5 V15.5 H10.5Z" fill="#f5cf6a"/></svg>
<div class="t" style="left:523.4px;top:348.5px;height:20px;line-height:20px;font-size:12px;color:#555;-webkit-text-stroke:0;">«</div>
<div class="t" style="left:539.1px;top:349px;height:20px;line-height:20px;font-size:12px;color:#1a1a1a;letter-spacing:-0.189px;-webkit-text-stroke:0;">Gobo</div>
<svg style="left:576.5px;top:355.5px;" width="6" height="8" viewBox="0 0 6 8"><path d="M1 0.8 L4.6 4 L1 7.2" fill="none" stroke="#6a6a6a" stroke-width="1.1"/></svg>
<div class="t" style="left:591.4px;top:349px;height:20px;line-height:20px;font-size:12px;color:#1a1a1a;letter-spacing:-0.712px;-webkit-text-stroke:0;">GSG_GC006_A025_Window05</div>
<svg style="left:834px;top:356.5px;" width="10" height="7" viewBox="0 0 10 7"><path d="M0.8 0.8 L5 5.4 L9.2 0.8" fill="none" stroke="#444" stroke-width="1.5"/></svg>
<svg style="left:849.5px;top:352.5px;" width="12" height="13" viewBox="0 0 12 13"><path d="M9.6 4.2 A4.6 4.6 0 1 0 10.6 7.5" fill="none" stroke="#555" stroke-width="1.3"/><path d="M6 1 H10.5 V5" fill="none" stroke="#555" stroke-width="1.3"/></svg>
<div style="left:876.5px;top:348.2px;width:97px;height:21px;background:#fff;border:1px solid #d9d9d9;"></div>
<div class="t" style="left:885.4px;top:349px;height:20px;line-height:20px;font-size:12px;color:#6d6d6d;letter-spacing:-0.716px;-webkit-text-stroke:0;">Search GS...</div>
<svg style="left:953.5px;top:353px;" width="12" height="12" viewBox="0 0 12 12"><circle cx="7.2" cy="4.8" r="3.6" fill="none" stroke="#555" stroke-width="1.3"/><path d="M4.6 7.4 L1 11" stroke="#555" stroke-width="1.5"/></svg>
<svg style="left:715.5px;top:377px;" width="9" height="6" viewBox="0 0 9 6"><path d="M0.8 5 L4.5 1.2 L8.2 5" fill="none" stroke="#777" stroke-width="1"/></svg>
<div class="t" style="left:410.3px;top:380px;height:20px;line-height:20px;font-size:12px;color:#4c607a;letter-spacing:-0.027px;-webkit-text-stroke:0;">Name</div>
<div style="left:406.6px;top:408px;width:577.2px;height:21.8px;background:#cce8ff;border:1px solid #99d1ff;border-right:none;"></div>
<svg style="left:410.6px;top:410.6px;" width="17" height="16" viewBox="0 0 17 16"><rect x="0.5" y="0" width="16" height="8" fill="#f1f3f6"/><text x="8.5" y="7" font-family="Liberation Sans" font-size="7.5" font-weight="bold" text-anchor="middle" fill="#3b5a8c">iσ</text><rect x="0" y="8" width="17" height="8" fill="#b8861a"/><text x="8.5" y="14.8" font-family="Liberation Sans" font-size="7" font-weight="bold" text-anchor="middle" fill="#fff3c8">JPG</text></svg>
<div class="t" style="left:431.6px;top:409.3px;height:20px;line-height:20px;font-size:12px;color:#111;letter-spacing:-0.608px;-webkit-text-stroke:0;">GSG_GC006_A025_Window05.jpg</div>
<svg style="left:410.6px;top:431.6px;" width="17" height="16" viewBox="0 0 17 16"><rect x="0.5" y="0" width="16" height="8" fill="#f1f3f6"/><text x="8.5" y="7" font-family="Liberation Sans" font-size="7.5" font-weight="bold" text-anchor="middle" fill="#3b5a8c">iσ</text><rect x="0" y="8" width="17" height="8" fill="#b8861a"/><text x="8.5" y="14.8" font-family="Liberation Sans" font-size="7" font-weight="bold" text-anchor="middle" fill="#fff3c8">JPG</text></svg>
<div class="t" style="left:431.6px;top:430.4px;height:20px;line-height:20px;font-size:12px;color:#111;letter-spacing:-0.499px;-webkit-text-stroke:0;">GSG_GC006_A025_Window05_preview.jpg</div>
<svg style="left:412.5px;top:452px;" width="13" height="17" viewBox="0 0 13 17"><path d="M0.5 0.5 H8.5 L12.5 4.5 V16.5 H0.5Z" fill="#fff" stroke="#8a8a8a" stroke-width="0.9"/><path d="M8.5 0.5 V4.5 H12.5" fill="none" stroke="#8a8a8a" stroke-width="0.9"/></svg>
<div class="t" style="left:431.6px;top:451.3px;height:20px;line-height:20px;font-size:12px;color:#111;letter-spacing:-0.283px;-webkit-text-stroke:0;">Window_05.gsga</div>
<div style="left:402.3px;top:403.9px;width:304.7px;height:27.3px;border:3.6px solid #fdb900;border-radius:5px;"></div>
<svg style="left:0px;top:0px;pointer-events:none;" width="2560" height="1386" viewBox="0 0 2560 1386"><path d="M689.0 415.0 C695.8 415.2 714.8 416.4 730.0 416.5 C745.2 416.6 763.3 415.8 780.0 415.3 C796.7 414.8 813.3 414.0 830.0 413.5 C846.7 413.0 863.3 412.5 880.0 412.5 C896.7 412.5 912.7 412.9 930.0 413.5 C947.3 414.1 966.5 415.1 984.0 416.2 C1001.5 417.3 1017.1 418.2 1034.7 420.2 C1052.3 422.2 1071.2 424.9 1089.4 428.2 C1107.6 431.5 1125.8 435.3 1144.0 439.9 C1162.2 444.5 1182.7 450.3 1198.7 455.8 C1214.7 461.3 1229.8 468.5 1240.0 472.8 C1250.2 477.1 1247.5 475.4 1260.0 481.5 C1272.5 487.6 1293.3 497.9 1315.0 509.7 C1336.7 521.5 1371.2 541.4 1390.0 552.0 C1408.8 562.6 1408.9 562.0 1427.7 573.5 C1446.5 585.0 1480.7 606.7 1502.7 621.0 C1524.8 635.3 1541.1 647.3 1560.0 659.5 C1578.9 671.7 1597.5 682.5 1616.3 694.4 C1635.1 706.3 1653.8 718.2 1672.6 731.0 C1691.4 743.8 1710.1 757.8 1728.9 771.4 C1747.7 785.0 1766.4 799.0 1785.2 812.6 C1804.0 826.2 1828.0 843.3 1841.5 853.0 C1855.0 862.7 1862.3 867.8 1866.5 870.8" fill="none" stroke="#fdb900" stroke-width="4.2" stroke-linecap="round"/><path d="M1882.4 881 L1858 875.4 L1867.5 871.5 L1866.3 861.6Z" fill="#fdb900"/></svg>
<div style="left:1354.3px;top:23px;width:31.5px;height:34px;border:3.6px solid #fdb900;border-radius:5.5px;"></div>
<svg style="left:727.3px;top:416.5px;" width="14" height="22" viewBox="0 0 14 22"><path d="M1 1 V14.6 L4.2 11.6 L6.8 17.4 L9.2 16.3 L6.7 10.7 L11 10.5Z" fill="#f0a500" stroke="#111" stroke-width="1.2" stroke-linejoin="round"/></svg>
</body></html>
